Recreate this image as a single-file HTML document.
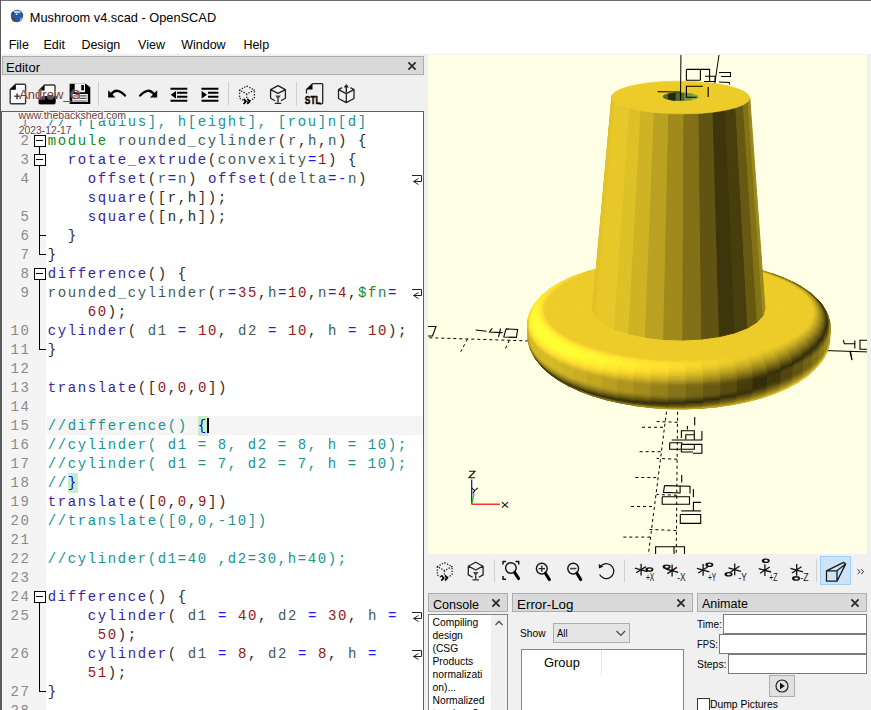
<!DOCTYPE html>
<html><head><meta charset="utf-8">
<style>
*{margin:0;padding:0;box-sizing:border-box}
html,body{width:871px;height:710px;overflow:hidden;background:#f0f0f0;font-family:"Liberation Sans",sans-serif;font-size:12.5px;color:#000}
.a{position:absolute}
.t1{position:absolute;line-height:1;white-space:nowrap}
.dtitle{position:absolute;background:#d9d9d9;border:1px solid #adadad}
.code{font-family:"Liberation Mono",monospace;font-size:14px;letter-spacing:1.6px;white-space:pre;line-height:19px;color:#2a2a2a}
.ln{font-family:"Liberation Mono",monospace;font-size:14px;letter-spacing:1.6px;color:#8a8a8a;white-space:pre;line-height:19px;text-align:right}
b{font-weight:normal}
.k{color:#148c14}.t{color:#3526a0}.i{color:#3f5b5b}.n{color:#961414}.o{color:#1a1aff}.c{color:#169494}.s{color:#148c14}.m{color:#0000ff;background:#c6efc6;padding:1.6px 0}
</style></head><body>

  <div class="a" style="left:0;top:0;width:871px;height:54px;background:#fff"></div>
  <div class="a" style="left:0;top:0;width:871px;height:1px;background:#6f6f6f"></div>
  <div class="a" style="left:0;top:0;width:1px;height:710px;background:#5a5a5a"></div>
<svg class="a" style="left:10px;top:9px" width="14" height="14" viewBox="0 0 14 14">
<circle cx="7" cy="7" r="6.2" fill="#2d5a9e"/>
<path d="M1.2 8.5Q2 12.5 5 13L5.5 9Q3.5 7.5 1.2 8.5Z" fill="#4a4a3c"/>
<path d="M3 2.5Q7 1 11 2.6L9.5 4.2Q7 3.4 4.8 4.3Z" fill="#c9d2e6"/>
<path d="M10.5 8.5Q12.5 9 12.8 7.5Q12.5 11.5 9.5 12.5Z" fill="#8aa0c8"/>
<circle cx="6.6" cy="5.2" r="0.9" fill="#dfe6f3"/>
<path d="M1.5 4.5Q2.5 3 3.5 2.6L4.2 4.3Q2.5 5 1.5 4.5Z" fill="#1b2f55"/>
</svg>
<div class="t1" style="left:29.8px;top:12.16px;font-size:12.8px;">Mushroom v4.scad - OpenSCAD</div><div class="t1" style="left:8.7px;top:38.72px;font-size:12.5px;">File</div><div class="t1" style="left:43.5px;top:38.72px;font-size:12.5px;">Edit</div><div class="t1" style="left:81.4px;top:38.72px;font-size:12.5px;">Design</div><div class="t1" style="left:138.1px;top:38.72px;font-size:12.5px;">View</div><div class="t1" style="left:181.2px;top:38.72px;font-size:12.5px;">Window</div><div class="t1" style="left:243.4px;top:38.72px;font-size:12.5px;">Help</div>
<div class="dtitle" style="left:2px;top:56px;width:422px;height:19px"></div>
<div class="t1" style="left:6px;top:60.70px;font-size:13px;">Editor</div>
<svg class="a" style="left:406px;top:60px" width="12" height="12"><path d="M2.4 2.4L9.6 9.6M9.6 2.4L2.4 9.6" stroke="#2b2b2b" stroke-width="1.8"/></svg>

<svg class="a" style="left:0;top:74px" width="430" height="37" viewBox="0 74 430 37">
<g fill="none" stroke-linejoin="round">
<!-- new -->
<path d="M15.6 84.2H24.6Q25.6 84.2 25.6 85.2V102.8Q25.6 103.8 24.6 103.8H11.2Q10.2 103.8 10.2 102.8V89.6Z" fill="#fafafa" stroke="#383838" stroke-width="1.4"/>
<path d="M10.2 89.8L15.8 84.2V89.8Z" fill="#000"/>
<path d="M14.3 96.3H20M17.1 93.4V99.3" stroke="#444" stroke-width="1.6"/>
<!-- open -->
<path d="M44.6 85H54Q55 85 55 86V102.8Q55 103.8 54 103.8H40.1Q39.1 103.8 39.1 102.8V90.5Z" fill="#fafafa" stroke="#383838" stroke-width="1.4"/>
<path d="M39.1 90.5L44.6 85V90.5Z" fill="#000"/>
<path d="M42.5 96H57L54.6 104H39.2V99.5Z" fill="#000"/>
<!-- save -->
<path d="M69.6 83.7H85.7L90.3 87.3V103.9H69.6Z" fill="#000"/>
<rect x="74.7" y="83.7" width="10.3" height="8.5" fill="#f4f4f4"/>
<rect x="81.3" y="85" width="2.6" height="5.3" fill="#000"/>
<rect x="72.4" y="94" width="15.4" height="8" fill="#f4f4f4"/>
<path d="M73.6 95.9H86.6M73.6 98.4H86.6M73.6 101H86.6" stroke="#555" stroke-width="1.1"/>
<!-- separators -->
<path d="M98.5 82V105.5M228.5 82V105.5M296.5 82V105.5" stroke="#cfcfcf" stroke-width="1"/>
<!-- undo -->
<path d="M111 94.3Q117 86.6 125 95.6" stroke="#000" stroke-width="2.3" stroke-linecap="round"/>
<path d="M108.2 90.3V97.6H115.4Z" fill="#000"/>
<!-- redo -->
<path d="M154.2 94.3Q148.2 86.6 140.2 95.6" stroke="#000" stroke-width="2.3" stroke-linecap="round"/>
<path d="M157.2 90.3V97.6H150Z" fill="#000"/>
<!-- unindent -->
<path d="M170.5 88.7H187.3M177 92.8H187.3M177 96.8H187.3M170.5 100.7H187.3" stroke="#000" stroke-width="1.9"/>
<path d="M176 91V98.6L170.6 94.8Z" fill="#000"/>
<!-- indent -->
<path d="M201.5 88.7H218.4M208 92.8H218.4M208 96.8H218.4M201.5 100.7H218.4" stroke="#000" stroke-width="1.9"/>
<path d="M201.6 91V98.6L207 94.8Z" fill="#000"/>
<!-- preview dotted cube -->
<path d="M246.8 86L254.4 90L246.8 94L239.6 90Z M239.6 90V98.3L246.8 102.3L254.4 98.3V90 M246.8 94V99" stroke="#222" stroke-width="1.3" stroke-dasharray="1.3 1.5"/>
<path d="M243.6 98.8L246 101.4L243.6 104M247.3 98.8L249.7 101.4L247.3 104" stroke="#000" stroke-width="1.7"/>
<!-- render cube -->
<path d="M278 85.6L285.4 89.6L278 93.4L270.6 89.6Z M270.6 89.6V98.3L275 100.7M285.4 89.6V98.3L281 100.7" stroke="#222" stroke-width="1.3"/>
<path d="M275.3 95.5H280.8L278 99.5Z" fill="#444"/>
<path d="M278 99V102.5M274.8 103.3H281.2" stroke="#222" stroke-width="1.3"/>
<!-- STL -->
<path d="M312.5 83.6H321.7Q322.7 83.6 322.7 84.6V102.8Q322.7 103.8 321.7 103.8H319.5M306.5 93.4V89.4L312.5 83.6" stroke="#222" stroke-width="1.3"/>
<path d="M306.5 89.6L312.5 83.7V89.6Z" fill="#000"/>
<!-- send -->
<path d="M342 87.6L338.5 89.6L346.3 93.6L354 89.6L350.5 87.6 M338.5 89.6V98.5L346.3 102.6L354 98.5V89.6 M346.3 93.6V102.6" stroke="#222" stroke-width="1.3"/>
<path d="M346.3 92.5V86.5" stroke="#222" stroke-width="1.4"/>
<path d="M343.6 87.6L346.3 84L349 87.6Z" fill="#222"/>
</g>
<text x="304.8" y="104.2" font-family="Liberation Sans" font-weight="700" font-size="11" fill="#000" stroke="#000" stroke-width="0.45" textLength="16" lengthAdjust="spacingAndGlyphs">STL</text>
</svg>


  <div class="a" style="left:1px;top:111px;width:423px;height:599px;border:1px solid #0078d7;border-bottom:none;background:#fff"></div>
  <div class="a" style="left:2px;top:112px;width:44px;height:598px;background:#f4f4f4"></div>
  <div class="a" style="left:47px;top:416px;width:376px;height:19px;background:#f5f5f5"></div>
  <div class="a ln" style="left:2px;top:113px;width:28.6px">1
2
3
4

5
6
7
8
9

10
11
12
13
14
15
16
17
18
19
20
21
22
23
24
25

26

27
28</div>
  <div class="a code" style="left:47.8px;top:113px"><b class="c">// r[adius], h[eight], [rou]n[d]</b>
<b class="k">module</b> <b class="i">rounded_cylinder</b>(<b class="i">r</b>,<b class="i">h</b>,<b class="i">n</b>) {
  <b class="t">rotate_extrude</b>(<b class="i">convexity</b><b class="o">=</b><b class="n">1</b>) {
    <b class="t">offset</b>(<b class="i">r</b><b class="o">=</b><b class="i">n</b>) <b class="t">offset</b>(<b class="i">delta</b><b class="o">=-</b><b class="i">n</b>)
    <b class="t">square</b>([r,h]);
    <b class="t">square</b>([n,h]);
  }
}
<b class="t">difference</b>() {
<b class="i">rounded_cylinder</b>(<b class="i">r</b><b class="o">=</b><b class="n">35</b>,<b class="i">h</b><b class="o">=</b><b class="n">10</b>,<b class="i">n</b><b class="o">=</b><b class="n">4</b>,<b class="s">$fn</b><b class="o">=</b>
    <b class="n">60</b>);
<b class="t">cylinder</b>( <b class="i">d1</b> <b class="o">=</b> <b class="n">10</b>, <b class="i">d2</b> <b class="o">=</b> <b class="n">10</b>, <b class="i">h</b> <b class="o">=</b> <b class="n">10</b>);
}

<b class="t">translate</b>([<b class="n">0</b>,<b class="n">0</b>,<b class="n">0</b>])

<b class="c">//difference() </b><b class="m">{</b>
<b class="c">//cylinder( d1 = 8, d2 = 8, h = 10);</b>
<b class="c">//cylinder( d1 = 7, d2 = 7, h = 10);</b>
<b class="c">//</b><b class="m">}</b>
<b class="t">translate</b>([<b class="n">0</b>,<b class="n">0</b>,<b class="n">9</b>])
<b class="c">//translate([0,0,-10])</b>

<b class="c">//cylinder(d1=40 ,d2=30,h=40);</b>

<b class="t">difference</b>() {
    <b class="t">cylinder</b>( <b class="i">d1</b> <b class="o">=</b> <b class="n">40</b>, <b class="i">d2</b> <b class="o">=</b> <b class="n">30</b>, <b class="i">h</b> <b class="o">=</b>
     <b class="n">50</b>);
    <b class="t">cylinder</b>( <b class="i">d1</b> <b class="o">=</b> <b class="n">8</b>, <b class="i">d2</b> <b class="o">=</b> <b class="n">8</b>, <b class="i">h</b> <b class="o">=</b>
    <b class="n">51</b>);
}
</div>
  <div class="a" style="left:207px;top:418px;width:2px;height:15px;background:#000"></div>
  <svg class="a" style="left:0;top:0" width="430" height="710"><rect x="39" y="147" width="1" height="108" fill="#000"/><rect x="40" y="235" width="6" height="1" fill="#000"/><rect x="40" y="254" width="6" height="1" fill="#000"/><rect x="34.5" y="135.5" width="11" height="11" fill="#fff" stroke="#000"/><rect x="36" y="140" width="7" height="1" fill="#000"/><rect x="34.5" y="154.5" width="11" height="11" fill="#fff" stroke="#000"/><rect x="36" y="159" width="7" height="1" fill="#000"/><rect x="39" y="280" width="1" height="70" fill="#000"/><rect x="40" y="349" width="6" height="1" fill="#000"/><rect x="34.5" y="268.5" width="11" height="11" fill="#fff" stroke="#000"/><rect x="36" y="273" width="7" height="1" fill="#000"/><rect x="39" y="603" width="1" height="89" fill="#000"/><rect x="40" y="691" width="6" height="1" fill="#000"/><rect x="34.5" y="591.5" width="11" height="11" fill="#fff" stroke="#000"/><rect x="36" y="596" width="7" height="1" fill="#000"/><path d="M412 175.5H421.5V181.5H413.5M413.5 181.5L418.5 178.5M413.5 181.5L418.5 184.5" fill="none" stroke="#222" stroke-width="1"/><path d="M412 289.5H421.5V295.5H413.5M413.5 295.5L418.5 292.5M413.5 295.5L418.5 298.5" fill="none" stroke="#222" stroke-width="1"/><path d="M412 612.5H421.5V618.5H413.5M413.5 618.5L418.5 615.5M413.5 618.5L418.5 621.5" fill="none" stroke="#222" stroke-width="1"/><path d="M412 650.5H421.5V656.5H413.5M413.5 656.5L418.5 653.5M413.5 656.5L418.5 659.5" fill="none" stroke="#222" stroke-width="1"/></svg>


  <div class="a" style="left:428px;top:55px;width:439px;height:499px;background:#ffffe5;overflow:hidden">
  <svg width="439" height="499" style="position:absolute;left:0;top:0">
<line x1="250.2" y1="290.8" x2="1632.4" y2="335.5" stroke="#000" stroke-width="1"/>
<line x1="250.2" y1="290.8" x2="-941.1" y2="252.2" stroke="#000" stroke-width="1" stroke-dasharray="3 3"/>
<g transform="translate(-2.5 0)"><line x1="250.2" y1="290.8" x2="312.8" y2="-129.6" stroke="#000" stroke-width="1"/></g>
<line x1="241.5" y1="333.0" x2="219.3" y2="508.0" stroke="#000" stroke-width="1" stroke-dasharray="3 3"/>
<line x1="214.0" y1="372.3" x2="237.2" y2="372.3" stroke="#000" stroke-width="1" stroke-dasharray="3 3"/>
<line x1="211.6" y1="396.7" x2="234.1" y2="396.7" stroke="#000" stroke-width="1" stroke-dasharray="3 3"/>
<line x1="207.3" y1="422.5" x2="230.8" y2="422.5" stroke="#000" stroke-width="1" stroke-dasharray="3 3"/>
<line x1="203.0" y1="451.5" x2="227.2" y2="451.5" stroke="#000" stroke-width="1" stroke-dasharray="3 3"/>
<line x1="195.3" y1="482.1" x2="223.3" y2="482.1" stroke="#000" stroke-width="1" stroke-dasharray="3 3"/>
<line x1="250.2" y1="290.8" x2="247.2" y2="608.8" stroke="#000" stroke-width="1" stroke-dasharray="3 3"/>
<line x1="293.0" y1="292.2" x2="292.3" y2="300.8" stroke="#000" stroke-width="1"/>
<line x1="335.9" y1="293.6" x2="336.0" y2="302.3" stroke="#000" stroke-width="1"/>
<line x1="379.1" y1="295.0" x2="379.8" y2="303.7" stroke="#000" stroke-width="1"/>
<line x1="422.5" y1="296.4" x2="423.9" y2="305.2" stroke="#000" stroke-width="1"/>
<line x1="466.1" y1="297.8" x2="469.3" y2="311.1" stroke="#000" stroke-width="1"/>
<line x1="510.0" y1="299.2" x2="512.8" y2="308.1" stroke="#000" stroke-width="1"/>
<line x1="554.0" y1="300.6" x2="557.5" y2="309.5" stroke="#000" stroke-width="1"/>
<line x1="598.3" y1="302.0" x2="602.5" y2="311.0" stroke="#000" stroke-width="1"/>
<line x1="642.8" y1="303.5" x2="647.7" y2="312.5" stroke="#000" stroke-width="1"/>
<line x1="687.6" y1="304.9" x2="699.0" y2="323.4" stroke="#000" stroke-width="1"/>
<line x1="732.5" y1="306.4" x2="738.9" y2="315.5" stroke="#000" stroke-width="1"/>
<line x1="777.7" y1="307.9" x2="784.8" y2="317.0" stroke="#000" stroke-width="1"/>
<line x1="207.7" y1="289.4" x2="205.7" y2="298.0" stroke="#000" stroke-width="1" stroke-dasharray="3 3"/>
<line x1="165.3" y1="288.0" x2="162.7" y2="296.6" stroke="#000" stroke-width="1" stroke-dasharray="3 3"/>
<line x1="123.2" y1="286.7" x2="120.0" y2="295.2" stroke="#000" stroke-width="1" stroke-dasharray="3 3"/>
<line x1="81.3" y1="285.3" x2="77.4" y2="293.8" stroke="#000" stroke-width="1" stroke-dasharray="3 3"/>
<line x1="39.5" y1="284.0" x2="32.8" y2="296.7" stroke="#000" stroke-width="1" stroke-dasharray="3 3"/>
<line x1="-2.0" y1="282.6" x2="-7.1" y2="291.0" stroke="#000" stroke-width="1" stroke-dasharray="3 3"/>
<line x1="-43.3" y1="281.3" x2="-49.0" y2="289.6" stroke="#000" stroke-width="1" stroke-dasharray="3 3"/>
<line x1="-84.4" y1="279.9" x2="-90.7" y2="288.2" stroke="#000" stroke-width="1" stroke-dasharray="3 3"/>
<line x1="-125.3" y1="278.6" x2="-132.3" y2="286.9" stroke="#000" stroke-width="1" stroke-dasharray="3 3"/>
<line x1="-166.0" y1="277.3" x2="-181.3" y2="294.0" stroke="#000" stroke-width="1" stroke-dasharray="3 3"/>
<line x1="-206.6" y1="276.0" x2="-214.7" y2="284.2" stroke="#000" stroke-width="1" stroke-dasharray="3 3"/>
<line x1="-246.9" y1="274.7" x2="-255.6" y2="282.8" stroke="#000" stroke-width="1" stroke-dasharray="3 3"/>
<g transform="translate(-2.5 0)"><line x1="252.7" y1="274.3" x2="232.0" y2="273.6" stroke="#000" stroke-width="1"/></g>
<g transform="translate(-2.5 0)"><line x1="255.0" y1="258.8" x2="234.9" y2="258.1" stroke="#000" stroke-width="1"/></g>
<g transform="translate(-2.5 0)"><line x1="257.2" y1="244.1" x2="237.6" y2="243.5" stroke="#000" stroke-width="1"/></g>
<g transform="translate(-2.5 0)"><line x1="259.2" y1="230.2" x2="240.2" y2="229.6" stroke="#000" stroke-width="1"/></g>
<g transform="translate(-2.5 0)"><line x1="261.2" y1="217.1" x2="233.4" y2="216.3" stroke="#000" stroke-width="1"/></g>
<g transform="translate(-2.5 0)"><line x1="263.0" y1="204.6" x2="245.0" y2="204.1" stroke="#000" stroke-width="1"/></g>
<g transform="translate(-2.5 0)"><line x1="264.8" y1="192.7" x2="247.2" y2="192.3" stroke="#000" stroke-width="1"/></g>
<g transform="translate(-2.5 0)"><line x1="266.5" y1="181.5" x2="249.3" y2="181.0" stroke="#000" stroke-width="1"/></g>
<g transform="translate(-2.5 0)"><line x1="268.1" y1="170.7" x2="251.3" y2="170.3" stroke="#000" stroke-width="1"/></g>
<g transform="translate(-2.5 0)"><line x1="269.6" y1="160.5" x2="236.9" y2="159.7" stroke="#000" stroke-width="1"/></g>
<g transform="translate(-2.5 0)"><line x1="271.1" y1="150.8" x2="255.1" y2="150.4" stroke="#000" stroke-width="1"/></g>
<g transform="translate(-2.5 0)"><line x1="272.4" y1="141.4" x2="256.8" y2="141.1" stroke="#000" stroke-width="1"/></g>
<g transform="translate(-2.5 0)"><line x1="273.8" y1="132.5" x2="258.5" y2="132.2" stroke="#000" stroke-width="1"/></g>
<g transform="translate(-2.5 0)"><line x1="275.0" y1="124.0" x2="260.1" y2="123.6" stroke="#000" stroke-width="1"/></g>
<g transform="translate(-2.5 0)"><line x1="276.3" y1="115.8" x2="254.3" y2="115.3" stroke="#000" stroke-width="1"/></g>
<g transform="translate(-2.5 0)"><line x1="277.4" y1="107.9" x2="263.1" y2="107.6" stroke="#000" stroke-width="1"/></g>
<g transform="translate(-2.5 0)"><line x1="278.5" y1="100.4" x2="264.5" y2="100.1" stroke="#000" stroke-width="1"/></g>
<g transform="translate(-2.5 0)"><line x1="279.6" y1="93.2" x2="265.8" y2="92.9" stroke="#000" stroke-width="1"/></g>
<g transform="translate(-2.5 0)"><line x1="280.7" y1="86.2" x2="267.1" y2="85.9" stroke="#000" stroke-width="1"/></g>
<g transform="translate(-2.5 0)"><line x1="281.7" y1="79.5" x2="255.1" y2="79.0" stroke="#000" stroke-width="1"/></g>
<g transform="translate(-2.5 0)"><line x1="282.6" y1="73.1" x2="269.6" y2="72.8" stroke="#000" stroke-width="1"/></g>
<g transform="translate(-2.5 0)"><line x1="283.5" y1="66.9" x2="270.7" y2="66.6" stroke="#000" stroke-width="1"/></g>
<g transform="translate(-2.5 0)"><line x1="284.4" y1="60.9" x2="271.9" y2="60.6" stroke="#000" stroke-width="1"/></g>
<g transform="translate(-2.5 0)"><line x1="285.3" y1="55.1" x2="272.9" y2="54.9" stroke="#000" stroke-width="1"/></g>
<g transform="translate(-2.5 0)"><line x1="286.1" y1="49.5" x2="267.9" y2="49.2" stroke="#000" stroke-width="1"/></g>
<g transform="translate(-2.5 0)"><line x1="286.9" y1="44.1" x2="275.0" y2="43.9" stroke="#000" stroke-width="1"/></g>
<g transform="translate(-2.5 0)"><line x1="287.7" y1="38.9" x2="276.0" y2="38.7" stroke="#000" stroke-width="1"/></g>
<g transform="translate(-2.5 0)"><line x1="288.5" y1="33.9" x2="276.9" y2="33.7" stroke="#000" stroke-width="1"/></g>
<g transform="translate(-2.5 0)"><line x1="289.2" y1="29.0" x2="277.8" y2="28.8" stroke="#000" stroke-width="1"/></g>
<line x1="250.6" y1="251.1" x2="229.0" y2="250.4" stroke="#000" stroke-width="1"/>
<line x1="251.0" y1="210.4" x2="229.1" y2="209.8" stroke="#000" stroke-width="1"/>
<line x1="251.4" y1="168.7" x2="229.3" y2="168.2" stroke="#000" stroke-width="1"/>
<line x1="251.8" y1="126.0" x2="229.4" y2="125.5" stroke="#000" stroke-width="1"/>
<line x1="252.2" y1="82.1" x2="218.2" y2="81.5" stroke="#000" stroke-width="1"/>
<line x1="249.8" y1="329.5" x2="228.8" y2="328.8" stroke="#000" stroke-width="1" stroke-dasharray="3 3"/>
<line x1="249.5" y1="367.3" x2="228.7" y2="366.5" stroke="#000" stroke-width="1" stroke-dasharray="3 3"/>
<line x1="249.1" y1="404.2" x2="228.6" y2="403.4" stroke="#000" stroke-width="1" stroke-dasharray="3 3"/>
<line x1="248.8" y1="440.3" x2="228.5" y2="439.5" stroke="#000" stroke-width="1" stroke-dasharray="3 3"/>
<line x1="248.4" y1="475.5" x2="218.3" y2="474.3" stroke="#000" stroke-width="1" stroke-dasharray="3 3"/>
<line x1="248.1" y1="510.0" x2="228.3" y2="509.1" stroke="#000" stroke-width="1" stroke-dasharray="3 3"/>
<line x1="247.8" y1="543.7" x2="228.2" y2="542.8" stroke="#000" stroke-width="1" stroke-dasharray="3 3"/>
<line x1="247.5" y1="576.6" x2="228.1" y2="575.7" stroke="#000" stroke-width="1" stroke-dasharray="3 3"/>
<path d="M250.58,251.10 L250.58,251.10 L384.23,249.93 L385.48,255.16Z" fill="#edcc2a" stroke="#edcc2a" stroke-width="1" stroke-linejoin="round"/>
<path d="M250.58,251.10 L250.58,251.10 L381.55,244.82 L384.23,249.93Z" fill="#edcc2a" stroke="#edcc2a" stroke-width="1" stroke-linejoin="round"/>
<path d="M250.58,251.10 L250.58,251.10 L377.52,239.87 L381.55,244.82Z" fill="#edcc2a" stroke="#edcc2a" stroke-width="1" stroke-linejoin="round"/>
<path d="M250.58,251.10 L250.58,251.10 L372.22,235.14 L377.52,239.87Z" fill="#edcc2a" stroke="#edcc2a" stroke-width="1" stroke-linejoin="round"/>
<path d="M250.58,251.10 L250.58,251.10 L365.73,230.66 L372.22,235.14Z" fill="#edcc2a" stroke="#edcc2a" stroke-width="1" stroke-linejoin="round"/>
<path d="M250.58,251.10 L250.58,251.10 L358.16,226.48 L365.73,230.66Z" fill="#edcc2a" stroke="#edcc2a" stroke-width="1" stroke-linejoin="round"/>
<path d="M250.58,251.10 L250.58,251.10 L349.59,222.61 L358.16,226.48Z" fill="#edcc2a" stroke="#edcc2a" stroke-width="1" stroke-linejoin="round"/>
<path d="M250.58,251.10 L250.58,251.10 L340.13,219.10 L349.59,222.61Z" fill="#edcc2a" stroke="#edcc2a" stroke-width="1" stroke-linejoin="round"/>
<path d="M250.58,251.10 L250.58,251.10 L329.89,215.96 L340.13,219.10Z" fill="#edcc2a" stroke="#edcc2a" stroke-width="1" stroke-linejoin="round"/>
<path d="M250.58,251.10 L250.58,251.10 L318.96,213.21 L329.89,215.96Z" fill="#edcc2a" stroke="#edcc2a" stroke-width="1" stroke-linejoin="round"/>
<path d="M250.58,251.10 L250.58,251.10 L307.46,210.88 L318.96,213.21Z" fill="#edcc2a" stroke="#edcc2a" stroke-width="1" stroke-linejoin="round"/>
<path d="M250.58,251.10 L250.58,251.10 L295.49,208.97 L307.46,210.88Z" fill="#edcc2a" stroke="#edcc2a" stroke-width="1" stroke-linejoin="round"/>
<path d="M250.58,251.10 L250.58,251.10 L283.15,207.50 L295.49,208.97Z" fill="#edcc2a" stroke="#edcc2a" stroke-width="1" stroke-linejoin="round"/>
<path d="M250.58,251.10 L250.58,251.10 L270.55,206.47 L283.15,207.50Z" fill="#edcc2a" stroke="#edcc2a" stroke-width="1" stroke-linejoin="round"/>
<path d="M250.58,251.10 L250.58,251.10 L257.79,205.89 L270.55,206.47Z" fill="#edcc2a" stroke="#edcc2a" stroke-width="1" stroke-linejoin="round"/>
<path d="M250.58,251.10 L250.58,251.10 L244.98,205.77 L257.79,205.89Z" fill="#edcc2a" stroke="#edcc2a" stroke-width="1" stroke-linejoin="round"/>
<path d="M250.58,251.10 L250.58,251.10 L232.22,206.10 L244.98,205.77Z" fill="#edcc2a" stroke="#edcc2a" stroke-width="1" stroke-linejoin="round"/>
<path d="M250.58,251.10 L250.58,251.10 L219.61,206.88 L232.22,206.10Z" fill="#edcc2a" stroke="#edcc2a" stroke-width="1" stroke-linejoin="round"/>
<path d="M250.58,251.10 L250.58,251.10 L207.27,208.11 L219.61,206.88Z" fill="#edcc2a" stroke="#edcc2a" stroke-width="1" stroke-linejoin="round"/>
<path d="M250.58,251.10 L250.58,251.10 L195.28,209.78 L207.27,208.11Z" fill="#edcc2a" stroke="#edcc2a" stroke-width="1" stroke-linejoin="round"/>
<path d="M250.58,251.10 L250.58,251.10 L183.76,211.88 L195.28,209.78Z" fill="#edcc2a" stroke="#edcc2a" stroke-width="1" stroke-linejoin="round"/>
<path d="M250.58,251.10 L250.58,251.10 L172.80,214.40 L183.76,211.88Z" fill="#edcc2a" stroke="#edcc2a" stroke-width="1" stroke-linejoin="round"/>
<path d="M250.58,251.10 L250.58,251.10 L162.52,217.32 L172.80,214.40Z" fill="#edcc2a" stroke="#edcc2a" stroke-width="1" stroke-linejoin="round"/>
<path d="M250.58,251.10 L250.58,251.10 L153.02,220.63 L162.52,217.32Z" fill="#edcc2a" stroke="#edcc2a" stroke-width="1" stroke-linejoin="round"/>
<path d="M250.58,251.10 L250.58,251.10 L144.39,224.31 L153.02,220.63Z" fill="#edcc2a" stroke="#edcc2a" stroke-width="1" stroke-linejoin="round"/>
<path d="M250.58,251.10 L250.58,251.10 L136.74,228.32 L144.39,224.31Z" fill="#edcc2a" stroke="#edcc2a" stroke-width="1" stroke-linejoin="round"/>
<path d="M250.58,251.10 L250.58,251.10 L130.16,232.65 L136.74,228.32Z" fill="#edcc2a" stroke="#edcc2a" stroke-width="1" stroke-linejoin="round"/>
<path d="M250.58,251.10 L250.58,251.10 L124.74,237.24 L130.16,232.65Z" fill="#edcc2a" stroke="#edcc2a" stroke-width="1" stroke-linejoin="round"/>
<path d="M250.58,251.10 L250.58,251.10 L120.58,242.08 L124.74,237.24Z" fill="#edcc2a" stroke="#edcc2a" stroke-width="1" stroke-linejoin="round"/>
<path d="M250.58,251.10 L250.58,251.10 L117.76,247.10 L120.58,242.08Z" fill="#edcc2a" stroke="#edcc2a" stroke-width="1" stroke-linejoin="round"/>
<path d="M250.58,251.10 L250.58,251.10 L116.33,252.27 L117.76,247.10Z" fill="#edcc2a" stroke="#edcc2a" stroke-width="1" stroke-linejoin="round"/>
<path d="M250.58,251.10 L250.58,251.10 L116.36,257.53 L116.33,252.27Z" fill="#edcc2a" stroke="#edcc2a" stroke-width="1" stroke-linejoin="round"/>
<path d="M250.58,251.10 L250.58,251.10 L117.90,262.83 L116.36,257.53Z" fill="#edcc2a" stroke="#edcc2a" stroke-width="1" stroke-linejoin="round"/>
<path d="M250.58,251.10 L250.58,251.10 L120.97,268.10 L117.90,262.83Z" fill="#edcc2a" stroke="#edcc2a" stroke-width="1" stroke-linejoin="round"/>
<path d="M250.58,251.10 L250.58,251.10 L125.59,273.28 L120.97,268.10Z" fill="#edcc2a" stroke="#edcc2a" stroke-width="1" stroke-linejoin="round"/>
<path d="M250.58,251.10 L250.58,251.10 L131.73,278.30 L125.59,273.28Z" fill="#edcc2a" stroke="#edcc2a" stroke-width="1" stroke-linejoin="round"/>
<path d="M250.58,251.10 L250.58,251.10 L139.36,283.10 L131.73,278.30Z" fill="#edcc2a" stroke="#edcc2a" stroke-width="1" stroke-linejoin="round"/>
<path d="M250.58,251.10 L250.58,251.10 L148.43,287.60 L139.36,283.10Z" fill="#edcc2a" stroke="#edcc2a" stroke-width="1" stroke-linejoin="round"/>
<path d="M250.58,251.10 L250.58,251.10 L158.85,291.74 L148.43,287.60Z" fill="#edcc2a" stroke="#edcc2a" stroke-width="1" stroke-linejoin="round"/>
<path d="M250.58,251.10 L250.58,251.10 L170.50,295.46 L158.85,291.74Z" fill="#edcc2a" stroke="#edcc2a" stroke-width="1" stroke-linejoin="round"/>
<path d="M250.58,251.10 L250.58,251.10 L183.26,298.70 L170.50,295.46Z" fill="#edcc2a" stroke="#edcc2a" stroke-width="1" stroke-linejoin="round"/>
<path d="M250.58,251.10 L250.58,251.10 L196.97,301.39 L183.26,298.70Z" fill="#edcc2a" stroke="#edcc2a" stroke-width="1" stroke-linejoin="round"/>
<path d="M250.58,251.10 L250.58,251.10 L211.43,303.50 L196.97,301.39Z" fill="#edcc2a" stroke="#edcc2a" stroke-width="1" stroke-linejoin="round"/>
<path d="M250.58,251.10 L250.58,251.10 L226.46,305.00 L211.43,303.50Z" fill="#edcc2a" stroke="#edcc2a" stroke-width="1" stroke-linejoin="round"/>
<path d="M250.58,251.10 L250.58,251.10 L241.85,305.84 L226.46,305.00Z" fill="#edcc2a" stroke="#edcc2a" stroke-width="1" stroke-linejoin="round"/>
<path d="M250.58,251.10 L250.58,251.10 L257.36,306.02 L241.85,305.84Z" fill="#edcc2a" stroke="#edcc2a" stroke-width="1" stroke-linejoin="round"/>
<path d="M250.58,251.10 L250.58,251.10 L272.79,305.54 L257.36,306.02Z" fill="#edcc2a" stroke="#edcc2a" stroke-width="1" stroke-linejoin="round"/>
<path d="M250.58,251.10 L250.58,251.10 L287.91,304.40 L272.79,305.54Z" fill="#edcc2a" stroke="#edcc2a" stroke-width="1" stroke-linejoin="round"/>
<path d="M250.58,251.10 L250.58,251.10 L302.50,302.63 L287.91,304.40Z" fill="#edcc2a" stroke="#edcc2a" stroke-width="1" stroke-linejoin="round"/>
<path d="M250.58,251.10 L250.58,251.10 L316.36,300.25 L302.50,302.63Z" fill="#edcc2a" stroke="#edcc2a" stroke-width="1" stroke-linejoin="round"/>
<path d="M250.58,251.10 L250.58,251.10 L329.30,297.30 L316.36,300.25Z" fill="#edcc2a" stroke="#edcc2a" stroke-width="1" stroke-linejoin="round"/>
<path d="M250.58,251.10 L250.58,251.10 L341.17,293.85 L329.30,297.30Z" fill="#edcc2a" stroke="#edcc2a" stroke-width="1" stroke-linejoin="round"/>
<path d="M250.58,251.10 L250.58,251.10 L351.81,289.93 L341.17,293.85Z" fill="#edcc2a" stroke="#edcc2a" stroke-width="1" stroke-linejoin="round"/>
<path d="M250.58,251.10 L250.58,251.10 L361.12,285.61 L351.81,289.93Z" fill="#edcc2a" stroke="#edcc2a" stroke-width="1" stroke-linejoin="round"/>
<path d="M250.58,251.10 L250.58,251.10 L369.00,280.97 L361.12,285.61Z" fill="#edcc2a" stroke="#edcc2a" stroke-width="1" stroke-linejoin="round"/>
<path d="M250.58,251.10 L250.58,251.10 L375.38,276.06 L369.00,280.97Z" fill="#edcc2a" stroke="#edcc2a" stroke-width="1" stroke-linejoin="round"/>
<path d="M250.58,251.10 L250.58,251.10 L380.22,270.96 L375.38,276.06Z" fill="#edcc2a" stroke="#edcc2a" stroke-width="1" stroke-linejoin="round"/>
<path d="M250.58,251.10 L250.58,251.10 L383.51,265.73 L380.22,270.96Z" fill="#edcc2a" stroke="#edcc2a" stroke-width="1" stroke-linejoin="round"/>
<path d="M250.58,251.10 L250.58,251.10 L385.26,260.44 L383.51,265.73Z" fill="#edcc2a" stroke="#edcc2a" stroke-width="1" stroke-linejoin="round"/>
<path d="M250.58,251.10 L250.58,251.10 L385.48,255.16 L385.26,260.44Z" fill="#edcc2a" stroke="#edcc2a" stroke-width="1" stroke-linejoin="round"/>
<path d="M385.48,255.16 L384.23,249.93 L386.02,250.00 L387.31,255.30Z" fill="#e5c628" stroke="#e5c628" stroke-width="1" stroke-linejoin="round"/>
<path d="M384.23,249.93 L381.55,244.82 L383.29,244.82 L386.02,250.00Z" fill="#e4c528" stroke="#e4c528" stroke-width="1" stroke-linejoin="round"/>
<path d="M381.55,244.82 L377.52,239.87 L379.19,239.81 L383.29,244.82Z" fill="#e4c528" stroke="#e4c528" stroke-width="1" stroke-linejoin="round"/>
<path d="M377.52,239.87 L372.22,235.14 L373.80,235.02 L379.19,239.81Z" fill="#e4c528" stroke="#e4c528" stroke-width="1" stroke-linejoin="round"/>
<path d="M372.22,235.14 L365.73,230.66 L367.22,230.48 L373.80,235.02Z" fill="#e4c528" stroke="#e4c528" stroke-width="1" stroke-linejoin="round"/>
<path d="M365.73,230.66 L358.16,226.48 L359.53,226.24 L367.22,230.48Z" fill="#e4c528" stroke="#e4c528" stroke-width="1" stroke-linejoin="round"/>
<path d="M358.16,226.48 L349.59,222.61 L350.85,222.33 L359.53,226.24Z" fill="#e4c528" stroke="#e4c528" stroke-width="1" stroke-linejoin="round"/>
<path d="M349.59,222.61 L340.13,219.10 L341.26,218.78 L350.85,222.33Z" fill="#e4c528" stroke="#e4c528" stroke-width="1" stroke-linejoin="round"/>
<path d="M340.13,219.10 L329.89,215.96 L330.88,215.60 L341.26,218.78Z" fill="#e4c528" stroke="#e4c528" stroke-width="1" stroke-linejoin="round"/>
<path d="M329.89,215.96 L318.96,213.21 L319.82,212.82 L330.88,215.60Z" fill="#e4c528" stroke="#e4c528" stroke-width="1" stroke-linejoin="round"/>
<path d="M318.96,213.21 L307.46,210.88 L308.17,210.46 L319.82,212.82Z" fill="#e5c528" stroke="#e5c528" stroke-width="1" stroke-linejoin="round"/>
<path d="M307.46,210.88 L295.49,208.97 L296.04,208.53 L308.17,210.46Z" fill="#e5c628" stroke="#e5c628" stroke-width="1" stroke-linejoin="round"/>
<path d="M295.49,208.97 L283.15,207.50 L283.55,207.04 L296.04,208.53Z" fill="#e6c629" stroke="#e6c629" stroke-width="1" stroke-linejoin="round"/>
<path d="M283.15,207.50 L270.55,206.47 L270.79,206.00 L283.55,207.04Z" fill="#e6c729" stroke="#e6c729" stroke-width="1" stroke-linejoin="round"/>
<path d="M270.55,206.47 L257.79,205.89 L257.88,205.42 L270.79,206.00Z" fill="#e7c829" stroke="#e7c829" stroke-width="1" stroke-linejoin="round"/>
<path d="M257.79,205.89 L244.98,205.77 L244.91,205.29 L257.88,205.42Z" fill="#e8c829" stroke="#e8c829" stroke-width="1" stroke-linejoin="round"/>
<path d="M244.98,205.77 L232.22,206.10 L231.99,205.63 L244.91,205.29Z" fill="#e9c929" stroke="#e9c929" stroke-width="1" stroke-linejoin="round"/>
<path d="M232.22,206.10 L219.61,206.88 L219.23,206.41 L231.99,205.63Z" fill="#e9ca29" stroke="#e9ca29" stroke-width="1" stroke-linejoin="round"/>
<path d="M219.61,206.88 L207.27,208.11 L206.73,207.66 L219.23,206.41Z" fill="#eaca29" stroke="#eaca29" stroke-width="1" stroke-linejoin="round"/>
<path d="M207.27,208.11 L195.28,209.78 L194.59,209.35 L206.73,207.66Z" fill="#ebcb2a" stroke="#ebcb2a" stroke-width="1" stroke-linejoin="round"/>
<path d="M195.28,209.78 L183.76,211.88 L182.93,211.47 L194.59,209.35Z" fill="#eccc2a" stroke="#eccc2a" stroke-width="1" stroke-linejoin="round"/>
<path d="M183.76,211.88 L172.80,214.40 L171.83,214.02 L182.93,211.47Z" fill="#edcd2a" stroke="#edcd2a" stroke-width="1" stroke-linejoin="round"/>
<path d="M172.80,214.40 L162.52,217.32 L161.41,216.98 L171.83,214.02Z" fill="#eecd2a" stroke="#eecd2a" stroke-width="1" stroke-linejoin="round"/>
<path d="M162.52,217.32 L153.02,220.63 L151.78,220.33 L161.41,216.98Z" fill="#efce2a" stroke="#efce2a" stroke-width="1" stroke-linejoin="round"/>
<path d="M153.02,220.63 L144.39,224.31 L143.03,224.05 L151.78,220.33Z" fill="#f0cf2a" stroke="#f0cf2a" stroke-width="1" stroke-linejoin="round"/>
<path d="M144.39,224.31 L136.74,228.32 L135.27,228.12 L143.03,224.05Z" fill="#f0d02a" stroke="#f0d02a" stroke-width="1" stroke-linejoin="round"/>
<path d="M136.74,228.32 L130.16,232.65 L128.59,232.49 L135.27,228.12Z" fill="#f1d02b" stroke="#f1d02b" stroke-width="1" stroke-linejoin="round"/>
<path d="M130.16,232.65 L124.74,237.24 L123.10,237.15 L128.59,232.49Z" fill="#f2d12b" stroke="#f2d12b" stroke-width="1" stroke-linejoin="round"/>
<path d="M124.74,237.24 L120.58,242.08 L118.86,242.04 L123.10,237.15Z" fill="#f3d12b" stroke="#f3d12b" stroke-width="1" stroke-linejoin="round"/>
<path d="M120.58,242.08 L117.76,247.10 L115.98,247.14 L118.86,242.04Z" fill="#f3d22b" stroke="#f3d22b" stroke-width="1" stroke-linejoin="round"/>
<path d="M117.76,247.10 L116.33,252.27 L114.52,252.38 L115.98,247.14Z" fill="#f4d22b" stroke="#f4d22b" stroke-width="1" stroke-linejoin="round"/>
<path d="M116.33,252.27 L116.36,257.53 L114.53,257.71 L114.52,252.38Z" fill="#f4d32b" stroke="#f4d32b" stroke-width="1" stroke-linejoin="round"/>
<path d="M116.36,257.53 L117.90,262.83 L116.07,263.08 L114.53,257.71Z" fill="#f4d32b" stroke="#f4d32b" stroke-width="1" stroke-linejoin="round"/>
<path d="M117.90,262.83 L120.97,268.10 L119.17,268.43 L116.07,263.08Z" fill="#f5d32b" stroke="#f5d32b" stroke-width="1" stroke-linejoin="round"/>
<path d="M120.97,268.10 L125.59,273.28 L123.83,273.68 L119.17,268.43Z" fill="#f5d32b" stroke="#f5d32b" stroke-width="1" stroke-linejoin="round"/>
<path d="M125.59,273.28 L131.73,278.30 L130.04,278.78 L123.83,273.68Z" fill="#f5d32b" stroke="#f5d32b" stroke-width="1" stroke-linejoin="round"/>
<path d="M131.73,278.30 L139.36,283.10 L137.77,283.65 L130.04,278.78Z" fill="#f5d32b" stroke="#f5d32b" stroke-width="1" stroke-linejoin="round"/>
<path d="M139.36,283.10 L148.43,287.60 L146.96,288.22 L137.77,283.65Z" fill="#f5d32b" stroke="#f5d32b" stroke-width="1" stroke-linejoin="round"/>
<path d="M148.43,287.60 L158.85,291.74 L157.51,292.43 L146.96,288.22Z" fill="#f4d32b" stroke="#f4d32b" stroke-width="1" stroke-linejoin="round"/>
<path d="M158.85,291.74 L170.50,295.46 L169.33,296.21 L157.51,292.43Z" fill="#f4d32b" stroke="#f4d32b" stroke-width="1" stroke-linejoin="round"/>
<path d="M170.50,295.46 L183.26,298.70 L182.27,299.49 L169.33,296.21Z" fill="#f4d32b" stroke="#f4d32b" stroke-width="1" stroke-linejoin="round"/>
<path d="M183.26,298.70 L196.97,301.39 L196.17,302.23 L182.27,299.49Z" fill="#f3d22b" stroke="#f3d22b" stroke-width="1" stroke-linejoin="round"/>
<path d="M196.97,301.39 L211.43,303.50 L210.85,304.38 L196.17,302.23Z" fill="#f3d22b" stroke="#f3d22b" stroke-width="1" stroke-linejoin="round"/>
<path d="M211.43,303.50 L226.46,305.00 L226.10,305.89 L210.85,304.38Z" fill="#f2d12b" stroke="#f2d12b" stroke-width="1" stroke-linejoin="round"/>
<path d="M226.46,305.00 L241.85,305.84 L241.72,306.75 L226.10,305.89Z" fill="#f1d02b" stroke="#f1d02b" stroke-width="1" stroke-linejoin="round"/>
<path d="M241.85,305.84 L257.36,306.02 L257.46,306.94 L241.72,306.75Z" fill="#f1d02b" stroke="#f1d02b" stroke-width="1" stroke-linejoin="round"/>
<path d="M257.36,306.02 L272.79,305.54 L273.12,306.45 L257.46,306.94Z" fill="#f0cf2a" stroke="#f0cf2a" stroke-width="1" stroke-linejoin="round"/>
<path d="M272.79,305.54 L287.91,304.40 L288.46,305.29 L273.12,306.45Z" fill="#efce2a" stroke="#efce2a" stroke-width="1" stroke-linejoin="round"/>
<path d="M287.91,304.40 L302.50,302.63 L303.26,303.49 L288.46,305.29Z" fill="#eece2a" stroke="#eece2a" stroke-width="1" stroke-linejoin="round"/>
<path d="M302.50,302.63 L316.36,300.25 L317.33,301.07 L303.26,303.49Z" fill="#edcd2a" stroke="#edcd2a" stroke-width="1" stroke-linejoin="round"/>
<path d="M316.36,300.25 L329.30,297.30 L330.46,298.08 L317.33,301.07Z" fill="#eccc2a" stroke="#eccc2a" stroke-width="1" stroke-linejoin="round"/>
<path d="M329.30,297.30 L341.17,293.85 L342.49,294.56 L330.46,298.08Z" fill="#ebcb2a" stroke="#ebcb2a" stroke-width="1" stroke-linejoin="round"/>
<path d="M341.17,293.85 L351.81,289.93 L353.28,290.59 L342.49,294.56Z" fill="#ebcb29" stroke="#ebcb29" stroke-width="1" stroke-linejoin="round"/>
<path d="M351.81,289.93 L361.12,285.61 L362.71,286.20 L353.28,290.59Z" fill="#eaca29" stroke="#eaca29" stroke-width="1" stroke-linejoin="round"/>
<path d="M361.12,285.61 L369.00,280.97 L370.68,281.49 L362.71,286.20Z" fill="#e9c929" stroke="#e9c929" stroke-width="1" stroke-linejoin="round"/>
<path d="M369.00,280.97 L375.38,276.06 L377.14,276.51 L370.68,281.49Z" fill="#e8c829" stroke="#e8c829" stroke-width="1" stroke-linejoin="round"/>
<path d="M375.38,276.06 L380.22,270.96 L382.03,271.33 L377.14,276.51Z" fill="#e7c829" stroke="#e7c829" stroke-width="1" stroke-linejoin="round"/>
<path d="M380.22,270.96 L383.51,265.73 L385.35,266.03 L382.03,271.33Z" fill="#e7c729" stroke="#e7c729" stroke-width="1" stroke-linejoin="round"/>
<path d="M383.51,265.73 L385.26,260.44 L387.10,260.66 L385.35,266.03Z" fill="#e6c729" stroke="#e6c729" stroke-width="1" stroke-linejoin="round"/>
<path d="M385.26,260.44 L385.48,255.16 L387.31,255.30 L387.10,260.66Z" fill="#e5c629" stroke="#e5c629" stroke-width="1" stroke-linejoin="round"/>
<path d="M387.31,255.30 L386.02,250.00 L387.79,250.25 L389.11,255.62Z" fill="#d4b725" stroke="#d4b725" stroke-width="1" stroke-linejoin="round"/>
<path d="M386.02,250.00 L383.29,244.82 L385.00,245.00 L387.79,250.25Z" fill="#d3b625" stroke="#d3b625" stroke-width="1" stroke-linejoin="round"/>
<path d="M383.29,244.82 L379.19,239.81 L380.83,239.92 L385.00,245.00Z" fill="#d2b525" stroke="#d2b525" stroke-width="1" stroke-linejoin="round"/>
<path d="M379.19,239.81 L373.80,235.02 L375.36,235.07 L380.83,239.92Z" fill="#d1b425" stroke="#d1b425" stroke-width="1" stroke-linejoin="round"/>
<path d="M373.80,235.02 L367.22,230.48 L368.68,230.48 L375.36,235.07Z" fill="#d1b425" stroke="#d1b425" stroke-width="1" stroke-linejoin="round"/>
<path d="M367.22,230.48 L359.53,226.24 L360.89,226.18 L368.68,230.48Z" fill="#d0b425" stroke="#d0b425" stroke-width="1" stroke-linejoin="round"/>
<path d="M359.53,226.24 L350.85,222.33 L352.08,222.22 L360.89,226.18Z" fill="#d0b425" stroke="#d0b425" stroke-width="1" stroke-linejoin="round"/>
<path d="M350.85,222.33 L341.26,218.78 L342.37,218.62 L352.08,222.22Z" fill="#d1b425" stroke="#d1b425" stroke-width="1" stroke-linejoin="round"/>
<path d="M341.26,218.78 L330.88,215.60 L331.86,215.41 L342.37,218.62Z" fill="#d2b525" stroke="#d2b525" stroke-width="1" stroke-linejoin="round"/>
<path d="M330.88,215.60 L319.82,212.82 L320.65,212.60 L331.86,215.41Z" fill="#d2b625" stroke="#d2b625" stroke-width="1" stroke-linejoin="round"/>
<path d="M319.82,212.82 L308.17,210.46 L308.86,210.21 L320.65,212.60Z" fill="#d4b725" stroke="#d4b725" stroke-width="1" stroke-linejoin="round"/>
<path d="M308.17,210.46 L296.04,208.53 L296.59,208.26 L308.86,210.21Z" fill="#d5b826" stroke="#d5b826" stroke-width="1" stroke-linejoin="round"/>
<path d="M296.04,208.53 L283.55,207.04 L283.94,206.75 L296.59,208.26Z" fill="#d7b926" stroke="#d7b926" stroke-width="1" stroke-linejoin="round"/>
<path d="M283.55,207.04 L270.79,206.00 L271.03,205.70 L283.94,206.75Z" fill="#d9bb26" stroke="#d9bb26" stroke-width="1" stroke-linejoin="round"/>
<path d="M270.79,206.00 L257.88,205.42 L257.96,205.11 L271.03,205.70Z" fill="#dbbd27" stroke="#dbbd27" stroke-width="1" stroke-linejoin="round"/>
<path d="M257.88,205.42 L244.91,205.29 L244.84,204.99 L257.96,205.11Z" fill="#ddbf27" stroke="#ddbf27" stroke-width="1" stroke-linejoin="round"/>
<path d="M244.91,205.29 L231.99,205.63 L231.77,205.32 L244.84,204.99Z" fill="#dfc127" stroke="#dfc127" stroke-width="1" stroke-linejoin="round"/>
<path d="M231.99,205.63 L219.23,206.41 L218.86,206.12 L231.77,205.32Z" fill="#e2c328" stroke="#e2c328" stroke-width="1" stroke-linejoin="round"/>
<path d="M219.23,206.41 L206.73,207.66 L206.20,207.38 L218.86,206.12Z" fill="#e4c528" stroke="#e4c528" stroke-width="1" stroke-linejoin="round"/>
<path d="M206.73,207.66 L194.59,209.35 L193.92,209.08 L206.20,207.38Z" fill="#e7c829" stroke="#e7c829" stroke-width="1" stroke-linejoin="round"/>
<path d="M194.59,209.35 L182.93,211.47 L182.11,211.23 L193.92,209.08Z" fill="#eaca29" stroke="#eaca29" stroke-width="1" stroke-linejoin="round"/>
<path d="M182.93,211.47 L171.83,214.02 L170.87,213.81 L182.11,211.23Z" fill="#eccc2a" stroke="#eccc2a" stroke-width="1" stroke-linejoin="round"/>
<path d="M171.83,214.02 L161.41,216.98 L160.32,216.81 L170.87,213.81Z" fill="#efcf2a" stroke="#efcf2a" stroke-width="1" stroke-linejoin="round"/>
<path d="M161.41,216.98 L151.78,220.33 L150.56,220.20 L160.32,216.81Z" fill="#f2d12b" stroke="#f2d12b" stroke-width="1" stroke-linejoin="round"/>
<path d="M151.78,220.33 L143.03,224.05 L141.70,223.96 L150.56,220.20Z" fill="#f4d32b" stroke="#f4d32b" stroke-width="1" stroke-linejoin="round"/>
<path d="M143.03,224.05 L135.27,228.12 L133.83,228.08 L141.70,223.96Z" fill="#f7d52c" stroke="#f7d52c" stroke-width="1" stroke-linejoin="round"/>
<path d="M135.27,228.12 L128.59,232.49 L127.05,232.51 L133.83,228.08Z" fill="#f9d72c" stroke="#f9d72c" stroke-width="1" stroke-linejoin="round"/>
<path d="M128.59,232.49 L123.10,237.15 L121.47,237.23 L127.05,232.51Z" fill="#fbd92c" stroke="#fbd92c" stroke-width="1" stroke-linejoin="round"/>
<path d="M123.10,237.15 L118.86,242.04 L117.17,242.19 L121.47,237.23Z" fill="#fddb2d" stroke="#fddb2d" stroke-width="1" stroke-linejoin="round"/>
<path d="M118.86,242.04 L115.98,247.14 L114.23,247.34 L117.17,242.19Z" fill="#ffdc2d" stroke="#ffdc2d" stroke-width="1" stroke-linejoin="round"/>
<path d="M115.98,247.14 L114.52,252.38 L112.73,252.66 L114.23,247.34Z" fill="#ffdd2d" stroke="#ffdd2d" stroke-width="1" stroke-linejoin="round"/>
<path d="M114.52,252.38 L114.53,257.71 L112.73,258.06 L112.73,252.66Z" fill="#ffde2e" stroke="#ffde2e" stroke-width="1" stroke-linejoin="round"/>
<path d="M114.53,257.71 L116.07,263.08 L114.27,263.51 L112.73,258.06Z" fill="#ffdf2e" stroke="#ffdf2e" stroke-width="1" stroke-linejoin="round"/>
<path d="M116.07,263.08 L119.17,268.43 L117.39,268.93 L114.27,263.51Z" fill="#ffe02e" stroke="#ffe02e" stroke-width="1" stroke-linejoin="round"/>
<path d="M119.17,268.43 L123.83,273.68 L122.10,274.26 L117.39,268.93Z" fill="#ffe02e" stroke="#ffe02e" stroke-width="1" stroke-linejoin="round"/>
<path d="M123.83,273.68 L130.04,278.78 L128.38,279.44 L122.10,274.26Z" fill="#ffe02e" stroke="#ffe02e" stroke-width="1" stroke-linejoin="round"/>
<path d="M130.04,278.78 L137.77,283.65 L136.20,284.38 L128.38,279.44Z" fill="#ffe02e" stroke="#ffe02e" stroke-width="1" stroke-linejoin="round"/>
<path d="M137.77,283.65 L146.96,288.22 L145.50,289.02 L136.20,284.38Z" fill="#ffe02e" stroke="#ffe02e" stroke-width="1" stroke-linejoin="round"/>
<path d="M146.96,288.22 L157.51,292.43 L156.20,293.30 L145.50,289.02Z" fill="#ffe02e" stroke="#ffe02e" stroke-width="1" stroke-linejoin="round"/>
<path d="M157.51,292.43 L169.33,296.21 L168.17,297.13 L156.20,293.30Z" fill="#ffdf2e" stroke="#ffdf2e" stroke-width="1" stroke-linejoin="round"/>
<path d="M169.33,296.21 L182.27,299.49 L181.29,300.47 L168.17,297.13Z" fill="#ffde2d" stroke="#ffde2d" stroke-width="1" stroke-linejoin="round"/>
<path d="M182.27,299.49 L196.17,302.23 L195.39,303.26 L181.29,300.47Z" fill="#ffdc2d" stroke="#ffdc2d" stroke-width="1" stroke-linejoin="round"/>
<path d="M196.17,302.23 L210.85,304.38 L210.27,305.44 L195.39,303.26Z" fill="#fedb2d" stroke="#fedb2d" stroke-width="1" stroke-linejoin="round"/>
<path d="M210.85,304.38 L226.10,305.89 L225.75,306.98 L210.27,305.44Z" fill="#fcd92c" stroke="#fcd92c" stroke-width="1" stroke-linejoin="round"/>
<path d="M226.10,305.89 L241.72,306.75 L241.58,307.85 L225.75,306.98Z" fill="#fad82c" stroke="#fad82c" stroke-width="1" stroke-linejoin="round"/>
<path d="M241.72,306.75 L257.46,306.94 L257.56,308.04 L241.58,307.85Z" fill="#f7d62c" stroke="#f7d62c" stroke-width="1" stroke-linejoin="round"/>
<path d="M257.46,306.94 L273.12,306.45 L273.45,307.54 L257.56,308.04Z" fill="#f5d42b" stroke="#f5d42b" stroke-width="1" stroke-linejoin="round"/>
<path d="M273.12,306.45 L288.46,305.29 L289.01,306.37 L273.45,307.54Z" fill="#f3d12b" stroke="#f3d12b" stroke-width="1" stroke-linejoin="round"/>
<path d="M288.46,305.29 L303.26,303.49 L304.02,304.53 L289.01,306.37Z" fill="#f0cf2a" stroke="#f0cf2a" stroke-width="1" stroke-linejoin="round"/>
<path d="M303.26,303.49 L317.33,301.07 L318.28,302.07 L304.02,304.53Z" fill="#edcd2a" stroke="#edcd2a" stroke-width="1" stroke-linejoin="round"/>
<path d="M317.33,301.07 L330.46,298.08 L331.60,299.03 L318.28,302.07Z" fill="#ebcb29" stroke="#ebcb29" stroke-width="1" stroke-linejoin="round"/>
<path d="M330.46,298.08 L342.49,294.56 L343.79,295.46 L331.60,299.03Z" fill="#e8c829" stroke="#e8c829" stroke-width="1" stroke-linejoin="round"/>
<path d="M342.49,294.56 L353.28,290.59 L354.72,291.42 L343.79,295.46Z" fill="#e5c629" stroke="#e5c629" stroke-width="1" stroke-linejoin="round"/>
<path d="M353.28,290.59 L362.71,286.20 L364.27,286.98 L354.72,291.42Z" fill="#e3c428" stroke="#e3c428" stroke-width="1" stroke-linejoin="round"/>
<path d="M362.71,286.20 L370.68,281.49 L372.34,282.19 L364.27,286.98Z" fill="#e0c128" stroke="#e0c128" stroke-width="1" stroke-linejoin="round"/>
<path d="M370.68,281.49 L377.14,276.51 L378.87,277.13 L372.34,282.19Z" fill="#debf27" stroke="#debf27" stroke-width="1" stroke-linejoin="round"/>
<path d="M377.14,276.51 L382.03,271.33 L383.82,271.88 L378.87,277.13Z" fill="#dbbd27" stroke="#dbbd27" stroke-width="1" stroke-linejoin="round"/>
<path d="M382.03,271.33 L385.35,266.03 L387.16,266.50 L383.82,271.88Z" fill="#d9bc26" stroke="#d9bc26" stroke-width="1" stroke-linejoin="round"/>
<path d="M385.35,266.03 L387.10,260.66 L388.92,261.06 L387.16,266.50Z" fill="#d7ba26" stroke="#d7ba26" stroke-width="1" stroke-linejoin="round"/>
<path d="M387.10,260.66 L387.31,255.30 L389.11,255.62 L388.92,261.06Z" fill="#d6b826" stroke="#d6b826" stroke-width="1" stroke-linejoin="round"/>
<path d="M389.11,255.62 L387.79,250.25 L389.50,250.67 L390.86,256.11Z" fill="#c1a722" stroke="#c1a722" stroke-width="1" stroke-linejoin="round"/>
<path d="M387.79,250.25 L385.00,245.00 L386.67,245.35 L389.50,250.67Z" fill="#bfa522" stroke="#bfa522" stroke-width="1" stroke-linejoin="round"/>
<path d="M385.00,245.00 L380.83,239.92 L382.43,240.21 L386.67,245.35Z" fill="#bea422" stroke="#bea422" stroke-width="1" stroke-linejoin="round"/>
<path d="M380.83,239.92 L375.36,235.07 L376.88,235.29 L382.43,240.21Z" fill="#bda321" stroke="#bda321" stroke-width="1" stroke-linejoin="round"/>
<path d="M375.36,235.07 L368.68,230.48 L370.10,230.64 L376.88,235.29Z" fill="#bca221" stroke="#bca221" stroke-width="1" stroke-linejoin="round"/>
<path d="M368.68,230.48 L360.89,226.18 L362.20,226.30 L370.10,230.64Z" fill="#bba221" stroke="#bba221" stroke-width="1" stroke-linejoin="round"/>
<path d="M360.89,226.18 L352.08,222.22 L353.28,222.29 L362.20,226.30Z" fill="#bca221" stroke="#bca221" stroke-width="1" stroke-linejoin="round"/>
<path d="M352.08,222.22 L342.37,218.62 L343.45,218.65 L353.28,222.29Z" fill="#bca321" stroke="#bca321" stroke-width="1" stroke-linejoin="round"/>
<path d="M342.37,218.62 L331.86,215.41 L332.80,215.39 L343.45,218.65Z" fill="#bda321" stroke="#bda321" stroke-width="1" stroke-linejoin="round"/>
<path d="M331.86,215.41 L320.65,212.60 L321.46,212.55 L332.80,215.39Z" fill="#bfa522" stroke="#bfa522" stroke-width="1" stroke-linejoin="round"/>
<path d="M320.65,212.60 L308.86,210.21 L309.53,210.14 L321.46,212.55Z" fill="#c1a622" stroke="#c1a622" stroke-width="1" stroke-linejoin="round"/>
<path d="M308.86,210.21 L296.59,208.26 L297.11,208.16 L309.53,210.14Z" fill="#c3a922" stroke="#c3a922" stroke-width="1" stroke-linejoin="round"/>
<path d="M296.59,208.26 L283.94,206.75 L284.32,206.64 L297.11,208.16Z" fill="#c6ab23" stroke="#c6ab23" stroke-width="1" stroke-linejoin="round"/>
<path d="M283.94,206.75 L271.03,205.70 L271.26,205.58 L284.32,206.64Z" fill="#c9ae24" stroke="#c9ae24" stroke-width="1" stroke-linejoin="round"/>
<path d="M271.03,205.70 L257.96,205.11 L258.05,204.98 L271.26,205.58Z" fill="#ccb124" stroke="#ccb124" stroke-width="1" stroke-linejoin="round"/>
<path d="M257.96,205.11 L244.84,204.99 L244.77,204.85 L258.05,204.98Z" fill="#d0b425" stroke="#d0b425" stroke-width="1" stroke-linejoin="round"/>
<path d="M244.84,204.99 L231.77,205.32 L231.55,205.19 L244.77,204.85Z" fill="#d4b725" stroke="#d4b725" stroke-width="1" stroke-linejoin="round"/>
<path d="M231.77,205.32 L218.86,206.12 L218.49,206.00 L231.55,205.19Z" fill="#d8bb26" stroke="#d8bb26" stroke-width="1" stroke-linejoin="round"/>
<path d="M218.86,206.12 L206.20,207.38 L205.69,207.27 L218.49,206.00Z" fill="#ddbe27" stroke="#ddbe27" stroke-width="1" stroke-linejoin="round"/>
<path d="M206.20,207.38 L193.92,209.08 L193.26,208.99 L205.69,207.27Z" fill="#e1c228" stroke="#e1c228" stroke-width="1" stroke-linejoin="round"/>
<path d="M193.92,209.08 L182.11,211.23 L181.31,211.17 L193.26,208.99Z" fill="#e5c629" stroke="#e5c629" stroke-width="1" stroke-linejoin="round"/>
<path d="M182.11,211.23 L170.87,213.81 L169.94,213.78 L181.31,211.17Z" fill="#eaca29" stroke="#eaca29" stroke-width="1" stroke-linejoin="round"/>
<path d="M170.87,213.81 L160.32,216.81 L159.26,216.81 L169.94,213.78Z" fill="#eece2a" stroke="#eece2a" stroke-width="1" stroke-linejoin="round"/>
<path d="M160.32,216.81 L150.56,220.20 L149.38,220.24 L159.26,216.81Z" fill="#f3d22b" stroke="#f3d22b" stroke-width="1" stroke-linejoin="round"/>
<path d="M150.56,220.20 L141.70,223.96 L140.40,224.05 L149.38,220.24Z" fill="#f7d52c" stroke="#f7d52c" stroke-width="1" stroke-linejoin="round"/>
<path d="M141.70,223.96 L133.83,228.08 L132.42,228.21 L140.40,224.05Z" fill="#fbd92c" stroke="#fbd92c" stroke-width="1" stroke-linejoin="round"/>
<path d="M133.83,228.08 L127.05,232.51 L125.55,232.70 L132.42,228.21Z" fill="#ffdc2d" stroke="#ffdc2d" stroke-width="1" stroke-linejoin="round"/>
<path d="M127.05,232.51 L121.47,237.23 L119.89,237.47 L125.55,232.70Z" fill="#ffdf2e" stroke="#ffdf2e" stroke-width="1" stroke-linejoin="round"/>
<path d="M121.47,237.23 L117.17,242.19 L115.52,242.50 L119.89,237.47Z" fill="#ffe22e" stroke="#ffe22e" stroke-width="1" stroke-linejoin="round"/>
<path d="M117.17,242.19 L114.23,247.34 L112.53,247.73 L115.52,242.50Z" fill="#ffe42f" stroke="#ffe42f" stroke-width="1" stroke-linejoin="round"/>
<path d="M114.23,247.34 L112.73,252.66 L110.99,253.11 L112.53,247.73Z" fill="#ffe62f" stroke="#ffe62f" stroke-width="1" stroke-linejoin="round"/>
<path d="M112.73,252.66 L112.73,258.06 L110.97,258.59 L110.99,253.11Z" fill="#ffe830" stroke="#ffe830" stroke-width="1" stroke-linejoin="round"/>
<path d="M112.73,258.06 L114.27,263.51 L112.51,264.11 L110.97,258.59Z" fill="#ffea30" stroke="#ffea30" stroke-width="1" stroke-linejoin="round"/>
<path d="M114.27,263.51 L117.39,268.93 L115.65,269.61 L112.51,264.11Z" fill="#ffeb30" stroke="#ffeb30" stroke-width="1" stroke-linejoin="round"/>
<path d="M117.39,268.93 L122.10,274.26 L120.40,275.02 L115.65,269.61Z" fill="#ffeb30" stroke="#ffeb30" stroke-width="1" stroke-linejoin="round"/>
<path d="M122.10,274.26 L128.38,279.44 L126.75,280.27 L120.40,275.02Z" fill="#ffec30" stroke="#ffec30" stroke-width="1" stroke-linejoin="round"/>
<path d="M128.38,279.44 L136.20,284.38 L134.66,285.28 L126.75,280.27Z" fill="#ffeb30" stroke="#ffeb30" stroke-width="1" stroke-linejoin="round"/>
<path d="M136.20,284.38 L145.50,289.02 L144.08,290.00 L134.66,285.28Z" fill="#ffeb30" stroke="#ffeb30" stroke-width="1" stroke-linejoin="round"/>
<path d="M145.50,289.02 L156.20,293.30 L154.91,294.34 L144.08,290.00Z" fill="#ffea30" stroke="#ffea30" stroke-width="1" stroke-linejoin="round"/>
<path d="M156.20,293.30 L168.17,297.13 L167.04,298.23 L154.91,294.34Z" fill="#ffe930" stroke="#ffe930" stroke-width="1" stroke-linejoin="round"/>
<path d="M168.17,297.13 L181.29,300.47 L180.33,301.62 L167.04,298.23Z" fill="#ffe72f" stroke="#ffe72f" stroke-width="1" stroke-linejoin="round"/>
<path d="M181.29,300.47 L195.39,303.26 L194.62,304.45 L180.33,301.62Z" fill="#ffe52f" stroke="#ffe52f" stroke-width="1" stroke-linejoin="round"/>
<path d="M195.39,303.26 L210.27,305.44 L209.71,306.67 L194.62,304.45Z" fill="#ffe22e" stroke="#ffe22e" stroke-width="1" stroke-linejoin="round"/>
<path d="M210.27,305.44 L225.75,306.98 L225.40,308.23 L209.71,306.67Z" fill="#ffe02e" stroke="#ffe02e" stroke-width="1" stroke-linejoin="round"/>
<path d="M225.75,306.98 L241.58,307.85 L241.45,309.12 L225.40,308.23Z" fill="#ffdd2d" stroke="#ffdd2d" stroke-width="1" stroke-linejoin="round"/>
<path d="M241.58,307.85 L257.56,308.04 L257.65,309.31 L241.45,309.12Z" fill="#fcda2d" stroke="#fcda2d" stroke-width="1" stroke-linejoin="round"/>
<path d="M257.56,308.04 L273.45,307.54 L273.76,308.81 L257.65,309.31Z" fill="#f8d62c" stroke="#f8d62c" stroke-width="1" stroke-linejoin="round"/>
<path d="M273.45,307.54 L289.01,306.37 L289.54,307.61 L273.76,308.81Z" fill="#f4d32b" stroke="#f4d32b" stroke-width="1" stroke-linejoin="round"/>
<path d="M289.01,306.37 L304.02,304.53 L304.76,305.75 L289.54,307.61Z" fill="#f0cf2a" stroke="#f0cf2a" stroke-width="1" stroke-linejoin="round"/>
<path d="M304.02,304.53 L318.28,302.07 L319.21,303.25 L304.76,305.75Z" fill="#ebcb2a" stroke="#ebcb2a" stroke-width="1" stroke-linejoin="round"/>
<path d="M318.28,302.07 L331.60,299.03 L332.70,300.16 L319.21,303.25Z" fill="#e7c729" stroke="#e7c729" stroke-width="1" stroke-linejoin="round"/>
<path d="M331.60,299.03 L343.79,295.46 L345.06,296.54 L332.70,300.16Z" fill="#e2c328" stroke="#e2c328" stroke-width="1" stroke-linejoin="round"/>
<path d="M343.79,295.46 L354.72,291.42 L356.13,292.43 L345.06,296.54Z" fill="#dec027" stroke="#dec027" stroke-width="1" stroke-linejoin="round"/>
<path d="M354.72,291.42 L364.27,286.98 L365.80,287.92 L356.13,292.43Z" fill="#dabc26" stroke="#dabc26" stroke-width="1" stroke-linejoin="round"/>
<path d="M364.27,286.98 L372.34,282.19 L373.96,283.06 L365.80,287.92Z" fill="#d5b826" stroke="#d5b826" stroke-width="1" stroke-linejoin="round"/>
<path d="M372.34,282.19 L378.87,277.13 L380.56,277.93 L373.96,283.06Z" fill="#d1b525" stroke="#d1b525" stroke-width="1" stroke-linejoin="round"/>
<path d="M378.87,277.13 L383.82,271.88 L385.56,272.60 L380.56,277.93Z" fill="#ceb124" stroke="#ceb124" stroke-width="1" stroke-linejoin="round"/>
<path d="M383.82,271.88 L387.16,266.50 L388.93,267.14 L385.56,272.60Z" fill="#caae24" stroke="#caae24" stroke-width="1" stroke-linejoin="round"/>
<path d="M387.16,266.50 L388.92,261.06 L390.69,261.62 L388.93,267.14Z" fill="#c7ac23" stroke="#c7ac23" stroke-width="1" stroke-linejoin="round"/>
<path d="M388.92,261.06 L389.11,255.62 L390.86,256.11 L390.69,261.62Z" fill="#c4a923" stroke="#c4a923" stroke-width="1" stroke-linejoin="round"/>
<path d="M390.86,256.11 L389.50,250.67 L391.15,251.25 L392.55,256.77Z" fill="#ad961f" stroke="#ad961f" stroke-width="1" stroke-linejoin="round"/>
<path d="M389.50,250.67 L386.67,245.35 L388.26,245.87 L391.15,251.25Z" fill="#aa931e" stroke="#aa931e" stroke-width="1" stroke-linejoin="round"/>
<path d="M386.67,245.35 L382.43,240.21 L383.96,240.66 L388.26,245.87Z" fill="#a8911e" stroke="#a8911e" stroke-width="1" stroke-linejoin="round"/>
<path d="M382.43,240.21 L376.88,235.29 L378.33,235.68 L383.96,240.66Z" fill="#a6901d" stroke="#a6901d" stroke-width="1" stroke-linejoin="round"/>
<path d="M376.88,235.29 L370.10,230.64 L371.46,230.98 L378.33,235.68Z" fill="#a58f1d" stroke="#a58f1d" stroke-width="1" stroke-linejoin="round"/>
<path d="M370.10,230.64 L362.20,226.30 L363.46,226.58 L371.46,230.98Z" fill="#a58e1d" stroke="#a58e1d" stroke-width="1" stroke-linejoin="round"/>
<path d="M362.20,226.30 L353.28,222.29 L354.43,222.52 L363.46,226.58Z" fill="#a58f1d" stroke="#a58f1d" stroke-width="1" stroke-linejoin="round"/>
<path d="M353.28,222.29 L343.45,218.65 L344.48,218.84 L354.43,222.52Z" fill="#a68f1d" stroke="#a68f1d" stroke-width="1" stroke-linejoin="round"/>
<path d="M343.45,218.65 L332.80,215.39 L333.71,215.55 L344.48,218.84Z" fill="#a8911e" stroke="#a8911e" stroke-width="1" stroke-linejoin="round"/>
<path d="M332.80,215.39 L321.46,212.55 L322.24,212.67 L333.71,215.55Z" fill="#aa931e" stroke="#aa931e" stroke-width="1" stroke-linejoin="round"/>
<path d="M321.46,212.55 L309.53,210.14 L310.17,210.23 L322.24,212.67Z" fill="#ac951e" stroke="#ac951e" stroke-width="1" stroke-linejoin="round"/>
<path d="M309.53,210.14 L297.11,208.16 L297.62,208.23 L310.17,210.23Z" fill="#b0981f" stroke="#b0981f" stroke-width="1" stroke-linejoin="round"/>
<path d="M205.69,207.27 L193.26,208.99 L192.63,209.08 L205.20,207.33Z" fill="#d9bb26" stroke="#d9bb26" stroke-width="1" stroke-linejoin="round"/>
<path d="M193.26,208.99 L181.31,211.17 L180.54,211.28 L192.63,209.08Z" fill="#dfc127" stroke="#dfc127" stroke-width="1" stroke-linejoin="round"/>
<path d="M181.31,211.17 L169.94,213.78 L169.04,213.91 L180.54,211.28Z" fill="#e5c629" stroke="#e5c629" stroke-width="1" stroke-linejoin="round"/>
<path d="M169.94,213.78 L159.26,216.81 L158.24,216.98 L169.04,213.91Z" fill="#ebcb2a" stroke="#ebcb2a" stroke-width="1" stroke-linejoin="round"/>
<path d="M159.26,216.81 L149.38,220.24 L148.24,220.45 L158.24,216.98Z" fill="#f1d02b" stroke="#f1d02b" stroke-width="1" stroke-linejoin="round"/>
<path d="M149.38,220.24 L140.40,224.05 L139.15,224.30 L148.24,220.45Z" fill="#f7d62c" stroke="#f7d62c" stroke-width="1" stroke-linejoin="round"/>
<path d="M140.40,224.05 L132.42,228.21 L131.07,228.52 L139.15,224.30Z" fill="#fdda2d" stroke="#fdda2d" stroke-width="1" stroke-linejoin="round"/>
<path d="M132.42,228.21 L125.55,232.70 L124.11,233.06 L131.07,228.52Z" fill="#ffdf2e" stroke="#ffdf2e" stroke-width="1" stroke-linejoin="round"/>
<path d="M125.55,232.70 L119.89,237.47 L118.37,237.89 L124.11,233.06Z" fill="#ffe32e" stroke="#ffe32e" stroke-width="1" stroke-linejoin="round"/>
<path d="M119.89,237.47 L115.52,242.50 L113.93,242.98 L118.37,237.89Z" fill="#ffe72f" stroke="#ffe72f" stroke-width="1" stroke-linejoin="round"/>
<path d="M115.52,242.50 L112.53,247.73 L110.89,248.27 L113.93,242.98Z" fill="#ffea30" stroke="#ffea30" stroke-width="1" stroke-linejoin="round"/>
<path d="M112.53,247.73 L110.99,253.11 L109.31,253.73 L110.89,248.27Z" fill="#ffed31" stroke="#ffed31" stroke-width="1" stroke-linejoin="round"/>
<path d="M110.99,253.11 L110.97,258.59 L109.28,259.28 L109.31,253.73Z" fill="#fff031" stroke="#fff031" stroke-width="1" stroke-linejoin="round"/>
<path d="M110.97,258.59 L112.51,264.11 L110.82,264.88 L109.28,259.28Z" fill="#fff231" stroke="#fff231" stroke-width="1" stroke-linejoin="round"/>
<path d="M112.51,264.11 L115.65,269.61 L113.98,270.45 L110.82,264.88Z" fill="#fff332" stroke="#fff332" stroke-width="1" stroke-linejoin="round"/>
<path d="M115.65,269.61 L120.40,275.02 L118.77,275.94 L113.98,270.45Z" fill="#fff432" stroke="#fff432" stroke-width="1" stroke-linejoin="round"/>
<path d="M120.40,275.02 L126.75,280.27 L125.19,281.26 L118.77,275.94Z" fill="#fff532" stroke="#fff532" stroke-width="1" stroke-linejoin="round"/>
<path d="M126.75,280.27 L134.66,285.28 L133.18,286.35 L125.19,281.26Z" fill="#fff432" stroke="#fff432" stroke-width="1" stroke-linejoin="round"/>
<path d="M134.66,285.28 L144.08,290.00 L142.71,291.13 L133.18,286.35Z" fill="#fff432" stroke="#fff432" stroke-width="1" stroke-linejoin="round"/>
<path d="M144.08,290.00 L154.91,294.34 L153.67,295.54 L142.71,291.13Z" fill="#fff232" stroke="#fff232" stroke-width="1" stroke-linejoin="round"/>
<path d="M154.91,294.34 L167.04,298.23 L165.95,299.49 L153.67,295.54Z" fill="#fff031" stroke="#fff031" stroke-width="1" stroke-linejoin="round"/>
<path d="M167.04,298.23 L180.33,301.62 L179.41,302.94 L165.95,299.49Z" fill="#ffee31" stroke="#ffee31" stroke-width="1" stroke-linejoin="round"/>
<path d="M180.33,301.62 L194.62,304.45 L193.88,305.81 L179.41,302.94Z" fill="#ffeb30" stroke="#ffeb30" stroke-width="1" stroke-linejoin="round"/>
<path d="M194.62,304.45 L209.71,306.67 L209.16,308.06 L193.88,305.81Z" fill="#ffe82f" stroke="#ffe82f" stroke-width="1" stroke-linejoin="round"/>
<path d="M209.71,306.67 L225.40,308.23 L225.06,309.65 L209.16,308.06Z" fill="#ffe42f" stroke="#ffe42f" stroke-width="1" stroke-linejoin="round"/>
<path d="M225.40,308.23 L241.45,309.12 L241.33,310.55 L225.06,309.65Z" fill="#ffe02e" stroke="#ffe02e" stroke-width="1" stroke-linejoin="round"/>
<path d="M241.45,309.12 L257.65,309.31 L257.74,310.74 L241.33,310.55Z" fill="#fedc2d" stroke="#fedc2d" stroke-width="1" stroke-linejoin="round"/>
<path d="M257.65,309.31 L273.76,308.81 L274.06,310.23 L257.74,310.74Z" fill="#f9d72c" stroke="#f9d72c" stroke-width="1" stroke-linejoin="round"/>
<path d="M273.76,308.81 L289.54,307.61 L290.05,309.02 L274.06,310.23Z" fill="#f3d22b" stroke="#f3d22b" stroke-width="1" stroke-linejoin="round"/>
<path d="M289.54,307.61 L304.76,305.75 L305.47,307.12 L290.05,309.02Z" fill="#edcd2a" stroke="#edcd2a" stroke-width="1" stroke-linejoin="round"/>
<path d="M304.76,305.75 L319.21,303.25 L320.11,304.59 L305.47,307.12Z" fill="#e7c829" stroke="#e7c829" stroke-width="1" stroke-linejoin="round"/>
<path d="M319.21,303.25 L332.70,300.16 L333.77,301.45 L320.11,304.59Z" fill="#e1c228" stroke="#e1c228" stroke-width="1" stroke-linejoin="round"/>
<path d="M332.70,300.16 L345.06,296.54 L346.28,297.77 L333.77,301.45Z" fill="#dbbd27" stroke="#dbbd27" stroke-width="1" stroke-linejoin="round"/>
<path d="M345.06,296.54 L356.13,292.43 L357.48,293.61 L346.28,297.77Z" fill="#d5b826" stroke="#d5b826" stroke-width="1" stroke-linejoin="round"/>
<path d="M356.13,292.43 L365.80,287.92 L367.26,289.02 L357.48,293.61Z" fill="#cfb225" stroke="#cfb225" stroke-width="1" stroke-linejoin="round"/>
<path d="M365.80,287.92 L373.96,283.06 L375.52,284.09 L367.26,289.02Z" fill="#c9ad23" stroke="#c9ad23" stroke-width="1" stroke-linejoin="round"/>
<path d="M373.96,283.06 L380.56,277.93 L382.19,278.89 L375.52,284.09Z" fill="#c3a923" stroke="#c3a923" stroke-width="1" stroke-linejoin="round"/>
<path d="M380.56,277.93 L385.56,272.60 L387.23,273.48 L382.19,278.89Z" fill="#bea422" stroke="#bea422" stroke-width="1" stroke-linejoin="round"/>
<path d="M385.56,272.60 L388.93,267.14 L390.62,267.95 L387.23,273.48Z" fill="#b9a021" stroke="#b9a021" stroke-width="1" stroke-linejoin="round"/>
<path d="M388.93,267.14 L390.69,261.62 L392.39,262.35 L390.62,267.95Z" fill="#b59c20" stroke="#b59c20" stroke-width="1" stroke-linejoin="round"/>
<path d="M390.69,261.62 L390.86,256.11 L392.55,256.77 L392.39,262.35Z" fill="#b1991f" stroke="#b1991f" stroke-width="1" stroke-linejoin="round"/>
<path d="M392.55,256.77 L391.15,251.25 L392.71,252.00 L394.14,257.59Z" fill="#98831b" stroke="#98831b" stroke-width="1" stroke-linejoin="round"/>
<path d="M391.15,251.25 L388.26,245.87 L389.78,246.55 L392.71,252.00Z" fill="#94801a" stroke="#94801a" stroke-width="1" stroke-linejoin="round"/>
<path d="M388.26,245.87 L383.96,240.66 L385.41,241.28 L389.78,246.55Z" fill="#917d1a" stroke="#917d1a" stroke-width="1" stroke-linejoin="round"/>
<path d="M383.96,240.66 L378.33,235.68 L379.71,236.24 L385.41,241.28Z" fill="#8f7c19" stroke="#8f7c19" stroke-width="1" stroke-linejoin="round"/>
<path d="M378.33,235.68 L371.46,230.98 L372.75,231.48 L379.71,236.24Z" fill="#8e7a19" stroke="#8e7a19" stroke-width="1" stroke-linejoin="round"/>
<path d="M371.46,230.98 L363.46,226.58 L364.66,227.03 L372.75,231.48Z" fill="#8d7a19" stroke="#8d7a19" stroke-width="1" stroke-linejoin="round"/>
<path d="M363.46,226.58 L354.43,222.52 L355.52,222.93 L364.66,227.03Z" fill="#8e7a19" stroke="#8e7a19" stroke-width="1" stroke-linejoin="round"/>
<path d="M354.43,222.52 L344.48,218.84 L345.46,219.20 L355.52,222.93Z" fill="#8f7b19" stroke="#8f7b19" stroke-width="1" stroke-linejoin="round"/>
<path d="M148.24,220.45 L139.15,224.30 L137.96,224.73 L147.16,220.83Z" fill="#f5d42b" stroke="#f5d42b" stroke-width="1" stroke-linejoin="round"/>
<path d="M139.15,224.30 L131.07,228.52 L129.79,228.99 L137.96,224.73Z" fill="#fdda2d" stroke="#fdda2d" stroke-width="1" stroke-linejoin="round"/>
<path d="M131.07,228.52 L124.11,233.06 L122.74,233.58 L129.79,228.99Z" fill="#ffe02e" stroke="#ffe02e" stroke-width="1" stroke-linejoin="round"/>
<path d="M124.11,233.06 L118.37,237.89 L116.92,238.48 L122.74,233.58Z" fill="#ffe52f" stroke="#ffe52f" stroke-width="1" stroke-linejoin="round"/>
<path d="M118.37,237.89 L113.93,242.98 L112.42,243.62 L116.92,238.48Z" fill="#ffea30" stroke="#ffea30" stroke-width="1" stroke-linejoin="round"/>
<path d="M113.93,242.98 L110.89,248.27 L109.33,248.98 L112.42,243.62Z" fill="#ffee31" stroke="#ffee31" stroke-width="1" stroke-linejoin="round"/>
<path d="M110.89,248.27 L109.31,253.73 L107.72,254.50 L109.33,248.98Z" fill="#fff232" stroke="#fff232" stroke-width="1" stroke-linejoin="round"/>
<path d="M109.31,253.73 L109.28,259.28 L107.66,260.13 L107.72,254.50Z" fill="#fff532" stroke="#fff532" stroke-width="1" stroke-linejoin="round"/>
<path d="M109.28,259.28 L110.82,264.88 L109.21,265.80 L107.66,260.13Z" fill="#fff833" stroke="#fff833" stroke-width="1" stroke-linejoin="round"/>
<path d="M110.82,264.88 L113.98,270.45 L112.39,271.45 L109.21,265.80Z" fill="#fffa33" stroke="#fffa33" stroke-width="1" stroke-linejoin="round"/>
<path d="M113.98,270.45 L118.77,275.94 L117.22,277.01 L112.39,271.45Z" fill="#fffb33" stroke="#fffb33" stroke-width="1" stroke-linejoin="round"/>
<path d="M118.77,275.94 L125.19,281.26 L123.70,282.41 L117.22,277.01Z" fill="#fffb33" stroke="#fffb33" stroke-width="1" stroke-linejoin="round"/>
<path d="M125.19,281.26 L133.18,286.35 L131.77,287.57 L123.70,282.41Z" fill="#fffb33" stroke="#fffb33" stroke-width="1" stroke-linejoin="round"/>
<path d="M133.18,286.35 L142.71,291.13 L141.40,292.42 L131.77,287.57Z" fill="#fffa33" stroke="#fffa33" stroke-width="1" stroke-linejoin="round"/>
<path d="M142.71,291.13 L153.67,295.54 L152.48,296.89 L141.40,292.42Z" fill="#fff833" stroke="#fff833" stroke-width="1" stroke-linejoin="round"/>
<path d="M153.67,295.54 L165.95,299.49 L164.91,300.90 L152.48,296.89Z" fill="#fff632" stroke="#fff632" stroke-width="1" stroke-linejoin="round"/>
<path d="M165.95,299.49 L179.41,302.94 L178.52,304.39 L164.91,300.90Z" fill="#fff332" stroke="#fff332" stroke-width="1" stroke-linejoin="round"/>
<path d="M179.41,302.94 L193.88,305.81 L193.17,307.31 L178.52,304.39Z" fill="#ffef31" stroke="#ffef31" stroke-width="1" stroke-linejoin="round"/>
<path d="M193.88,305.81 L209.16,308.06 L208.64,309.59 L193.17,307.31Z" fill="#ffeb30" stroke="#ffeb30" stroke-width="1" stroke-linejoin="round"/>
<path d="M209.16,308.06 L225.06,309.65 L224.73,311.21 L208.64,309.59Z" fill="#ffe72f" stroke="#ffe72f" stroke-width="1" stroke-linejoin="round"/>
<path d="M225.06,309.65 L241.33,310.55 L241.20,312.12 L224.73,311.21Z" fill="#ffe12e" stroke="#ffe12e" stroke-width="1" stroke-linejoin="round"/>
<path d="M241.33,310.55 L257.74,310.74 L257.82,312.32 L241.20,312.12Z" fill="#ffdc2d" stroke="#ffdc2d" stroke-width="1" stroke-linejoin="round"/>
<path d="M257.74,310.74 L274.06,310.23 L274.35,311.80 L257.82,312.32Z" fill="#f8d62c" stroke="#f8d62c" stroke-width="1" stroke-linejoin="round"/>
<path d="M274.06,310.23 L290.05,309.02 L290.53,310.57 L274.35,311.80Z" fill="#f0d02a" stroke="#f0d02a" stroke-width="1" stroke-linejoin="round"/>
<path d="M290.05,309.02 L305.47,307.12 L306.14,308.65 L290.53,310.57Z" fill="#e9c929" stroke="#e9c929" stroke-width="1" stroke-linejoin="round"/>
<path d="M305.47,307.12 L320.11,304.59 L320.96,306.07 L306.14,308.65Z" fill="#e1c228" stroke="#e1c228" stroke-width="1" stroke-linejoin="round"/>
<path d="M320.11,304.59 L333.77,301.45 L334.78,302.89 L320.96,306.07Z" fill="#d9bc26" stroke="#d9bc26" stroke-width="1" stroke-linejoin="round"/>
<path d="M333.77,301.45 L346.28,297.77 L347.44,299.15 L334.78,302.89Z" fill="#d1b525" stroke="#d1b525" stroke-width="1" stroke-linejoin="round"/>
<path d="M346.28,297.77 L357.48,293.61 L358.77,294.93 L347.44,299.15Z" fill="#caae24" stroke="#caae24" stroke-width="1" stroke-linejoin="round"/>
<path d="M357.48,293.61 L367.26,289.02 L368.65,290.28 L358.77,294.93Z" fill="#c2a822" stroke="#c2a822" stroke-width="1" stroke-linejoin="round"/>
<path d="M367.26,289.02 L375.52,284.09 L377.00,285.28 L368.65,290.28Z" fill="#bba121" stroke="#bba121" stroke-width="1" stroke-linejoin="round"/>
<path d="M375.52,284.09 L382.19,278.89 L383.73,280.00 L377.00,285.28Z" fill="#b49b20" stroke="#b49b20" stroke-width="1" stroke-linejoin="round"/>
<path d="M382.19,278.89 L387.23,273.48 L388.81,274.52 L383.73,280.00Z" fill="#ad951f" stroke="#ad951f" stroke-width="1" stroke-linejoin="round"/>
<path d="M387.23,273.48 L390.62,267.95 L392.23,268.91 L388.81,274.52Z" fill="#a7901d" stroke="#a7901d" stroke-width="1" stroke-linejoin="round"/>
<path d="M390.62,267.95 L392.39,262.35 L394.00,263.24 L392.23,268.91Z" fill="#a18b1c" stroke="#a18b1c" stroke-width="1" stroke-linejoin="round"/>
<path d="M392.39,262.35 L392.55,256.77 L394.14,257.59 L394.00,263.24Z" fill="#9c871c" stroke="#9c871c" stroke-width="1" stroke-linejoin="round"/>
<path d="M394.14,257.59 L392.71,252.00 L394.17,252.90 L395.63,258.55Z" fill="#817017" stroke="#817017" stroke-width="1" stroke-linejoin="round"/>
<path d="M392.71,252.00 L389.78,246.55 L391.19,247.38 L394.17,252.90Z" fill="#7d6c16" stroke="#7d6c16" stroke-width="1" stroke-linejoin="round"/>
<path d="M389.78,246.55 L385.41,241.28 L386.77,242.05 L391.19,247.38Z" fill="#796915" stroke="#796915" stroke-width="1" stroke-linejoin="round"/>
<path d="M385.41,241.28 L379.71,236.24 L380.99,236.95 L386.77,242.05Z" fill="#776715" stroke="#776715" stroke-width="1" stroke-linejoin="round"/>
<path d="M379.71,236.24 L372.75,231.48 L373.96,232.14 L380.99,236.95Z" fill="#756515" stroke="#756515" stroke-width="1" stroke-linejoin="round"/>
<path d="M372.75,231.48 L364.66,227.03 L365.77,227.64 L373.96,232.14Z" fill="#756515" stroke="#756515" stroke-width="1" stroke-linejoin="round"/>
<path d="M129.79,228.99 L122.74,233.58 L121.46,234.27 L128.59,229.62Z" fill="#ffdf2e" stroke="#ffdf2e" stroke-width="1" stroke-linejoin="round"/>
<path d="M122.74,233.58 L116.92,238.48 L115.57,239.21 L121.46,234.27Z" fill="#ffe52f" stroke="#ffe52f" stroke-width="1" stroke-linejoin="round"/>
<path d="M116.92,238.48 L112.42,243.62 L111.01,244.42 L115.57,239.21Z" fill="#ffeb30" stroke="#ffeb30" stroke-width="1" stroke-linejoin="round"/>
<path d="M112.42,243.62 L109.33,248.98 L107.87,249.85 L111.01,244.42Z" fill="#fff031" stroke="#fff031" stroke-width="1" stroke-linejoin="round"/>
<path d="M109.33,248.98 L107.72,254.50 L106.23,255.43 L107.87,249.85Z" fill="#fff532" stroke="#fff532" stroke-width="1" stroke-linejoin="round"/>
<path d="M107.72,254.50 L107.66,260.13 L106.16,261.13 L106.23,255.43Z" fill="#fff833" stroke="#fff833" stroke-width="1" stroke-linejoin="round"/>
<path d="M107.66,260.13 L109.21,265.80 L107.70,266.87 L106.16,261.13Z" fill="#fffc33" stroke="#fffc33" stroke-width="1" stroke-linejoin="round"/>
<path d="M109.21,265.80 L112.39,271.45 L110.90,272.59 L107.70,266.87Z" fill="#fffe34" stroke="#fffe34" stroke-width="1" stroke-linejoin="round"/>
<path d="M112.39,271.45 L117.22,277.01 L115.77,278.22 L110.90,272.59Z" fill="#ffff34" stroke="#ffff34" stroke-width="1" stroke-linejoin="round"/>
<path d="M117.22,277.01 L123.70,282.41 L122.30,283.69 L115.77,278.22Z" fill="#ffff34" stroke="#ffff34" stroke-width="1" stroke-linejoin="round"/>
<path d="M123.70,282.41 L131.77,287.57 L130.45,288.92 L122.30,283.69Z" fill="#ffff34" stroke="#ffff34" stroke-width="1" stroke-linejoin="round"/>
<path d="M131.77,287.57 L141.40,292.42 L140.17,293.84 L130.45,288.92Z" fill="#fffe34" stroke="#fffe34" stroke-width="1" stroke-linejoin="round"/>
<path d="M141.40,292.42 L152.48,296.89 L151.37,298.37 L140.17,293.84Z" fill="#fffc34" stroke="#fffc34" stroke-width="1" stroke-linejoin="round"/>
<path d="M152.48,296.89 L164.91,300.90 L163.93,302.44 L151.37,298.37Z" fill="#fff933" stroke="#fff933" stroke-width="1" stroke-linejoin="round"/>
<path d="M164.91,300.90 L178.52,304.39 L177.69,305.98 L163.93,302.44Z" fill="#fff632" stroke="#fff632" stroke-width="1" stroke-linejoin="round"/>
<path d="M178.52,304.39 L193.17,307.31 L192.50,308.94 L177.69,305.98Z" fill="#fff231" stroke="#fff231" stroke-width="1" stroke-linejoin="round"/>
<path d="M193.17,307.31 L208.64,309.59 L208.15,311.25 L192.50,308.94Z" fill="#ffed30" stroke="#ffed30" stroke-width="1" stroke-linejoin="round"/>
<path d="M208.64,309.59 L224.73,311.21 L224.42,312.89 L208.15,311.25Z" fill="#ffe72f" stroke="#ffe72f" stroke-width="1" stroke-linejoin="round"/>
<path d="M224.73,311.21 L241.20,312.12 L241.09,313.82 L224.42,312.89Z" fill="#ffe12e" stroke="#ffe12e" stroke-width="1" stroke-linejoin="round"/>
<path d="M241.20,312.12 L257.82,312.32 L257.90,314.02 L241.09,313.82Z" fill="#fcda2d" stroke="#fcda2d" stroke-width="1" stroke-linejoin="round"/>
<path d="M257.82,312.32 L274.35,311.80 L274.61,313.49 L257.90,314.02Z" fill="#f4d32b" stroke="#f4d32b" stroke-width="1" stroke-linejoin="round"/>
<path d="M274.35,311.80 L290.53,310.57 L290.98,312.24 L274.61,313.49Z" fill="#ebcb2a" stroke="#ebcb2a" stroke-width="1" stroke-linejoin="round"/>
<path d="M290.53,310.57 L306.14,308.65 L306.77,310.29 L290.98,312.24Z" fill="#e2c328" stroke="#e2c328" stroke-width="1" stroke-linejoin="round"/>
<path d="M306.14,308.65 L320.96,306.07 L321.75,307.68 L306.77,310.29Z" fill="#d9bb26" stroke="#d9bb26" stroke-width="1" stroke-linejoin="round"/>
<path d="M320.96,306.07 L334.78,302.89 L335.73,304.46 L321.75,307.68Z" fill="#d0b325" stroke="#d0b325" stroke-width="1" stroke-linejoin="round"/>
<path d="M334.78,302.89 L347.44,299.15 L348.52,300.67 L335.73,304.46Z" fill="#c6ab23" stroke="#c6ab23" stroke-width="1" stroke-linejoin="round"/>
<path d="M347.44,299.15 L358.77,294.93 L359.97,296.38 L348.52,300.67Z" fill="#bda321" stroke="#bda321" stroke-width="1" stroke-linejoin="round"/>
<path d="M358.77,294.93 L368.65,290.28 L369.96,291.67 L359.97,296.38Z" fill="#b49b20" stroke="#b49b20" stroke-width="1" stroke-linejoin="round"/>
<path d="M368.65,290.28 L377.00,285.28 L378.38,286.60 L369.96,291.67Z" fill="#ab941e" stroke="#ab941e" stroke-width="1" stroke-linejoin="round"/>
<path d="M377.00,285.28 L383.73,280.00 L385.17,281.25 L378.38,286.60Z" fill="#a38c1d" stroke="#a38c1d" stroke-width="1" stroke-linejoin="round"/>
<path d="M383.73,280.00 L388.81,274.52 L390.29,275.70 L385.17,281.25Z" fill="#9b861b" stroke="#9b861b" stroke-width="1" stroke-linejoin="round"/>
<path d="M388.81,274.52 L392.23,268.91 L393.73,270.02 L390.29,275.70Z" fill="#937f1a" stroke="#937f1a" stroke-width="1" stroke-linejoin="round"/>
<path d="M392.23,268.91 L394.00,263.24 L395.50,264.28 L393.73,270.02Z" fill="#8d7919" stroke="#8d7919" stroke-width="1" stroke-linejoin="round"/>
<path d="M394.00,263.24 L394.14,257.59 L395.63,258.55 L395.50,264.28Z" fill="#867418" stroke="#867418" stroke-width="1" stroke-linejoin="round"/>
<path d="M395.63,258.55 L394.17,252.90 L395.52,253.94 L397.00,259.66Z" fill="#6a5b13" stroke="#6a5b13" stroke-width="1" stroke-linejoin="round"/>
<path d="M394.17,252.90 L391.19,247.38 L392.49,248.36 L395.52,253.94Z" fill="#655712" stroke="#655712" stroke-width="1" stroke-linejoin="round"/>
<path d="M391.19,247.38 L386.77,242.05 L388.01,242.97 L392.49,248.36Z" fill="#615311" stroke="#615311" stroke-width="1" stroke-linejoin="round"/>
<path d="M386.77,242.05 L380.99,236.95 L382.17,237.82 L388.01,242.97Z" fill="#5e5111" stroke="#5e5111" stroke-width="1" stroke-linejoin="round"/>
<path d="M121.46,234.27 L115.57,239.21 L114.32,240.10 L120.28,235.10Z" fill="#ffe32e" stroke="#ffe32e" stroke-width="1" stroke-linejoin="round"/>
<path d="M115.57,239.21 L111.01,244.42 L109.71,245.37 L114.32,240.10Z" fill="#ffea30" stroke="#ffea30" stroke-width="1" stroke-linejoin="round"/>
<path d="M111.01,244.42 L107.87,249.85 L106.53,250.85 L109.71,245.37Z" fill="#fff031" stroke="#fff031" stroke-width="1" stroke-linejoin="round"/>
<path d="M107.87,249.85 L106.23,255.43 L104.86,256.50 L106.53,250.85Z" fill="#fff532" stroke="#fff532" stroke-width="1" stroke-linejoin="round"/>
<path d="M106.23,255.43 L106.16,261.13 L104.77,262.26 L104.86,256.50Z" fill="#fff933" stroke="#fff933" stroke-width="1" stroke-linejoin="round"/>
<path d="M106.16,261.13 L107.70,266.87 L106.31,268.07 L104.77,262.26Z" fill="#fffd34" stroke="#fffd34" stroke-width="1" stroke-linejoin="round"/>
<path d="M107.70,266.87 L110.90,272.59 L109.53,273.86 L106.31,268.07Z" fill="#ffff34" stroke="#ffff34" stroke-width="1" stroke-linejoin="round"/>
<path d="M110.90,272.59 L115.77,278.22 L114.43,279.56 L109.53,273.86Z" fill="#ffff35" stroke="#ffff35" stroke-width="1" stroke-linejoin="round"/>
<path d="M115.77,278.22 L122.30,283.69 L121.01,285.10 L114.43,279.56Z" fill="#ffff35" stroke="#ffff35" stroke-width="1" stroke-linejoin="round"/>
<path d="M122.30,283.69 L130.45,288.92 L129.23,290.40 L121.01,285.10Z" fill="#ffff35" stroke="#ffff35" stroke-width="1" stroke-linejoin="round"/>
<path d="M130.45,288.92 L140.17,293.84 L139.04,295.38 L129.23,290.40Z" fill="#ffff34" stroke="#ffff34" stroke-width="1" stroke-linejoin="round"/>
<path d="M140.17,293.84 L151.37,298.37 L150.34,299.97 L139.04,295.38Z" fill="#fffe34" stroke="#fffe34" stroke-width="1" stroke-linejoin="round"/>
<path d="M151.37,298.37 L163.93,302.44 L163.02,304.09 L150.34,299.97Z" fill="#fffb33" stroke="#fffb33" stroke-width="1" stroke-linejoin="round"/>
<path d="M163.93,302.44 L177.69,305.98 L176.93,307.68 L163.02,304.09Z" fill="#fff632" stroke="#fff632" stroke-width="1" stroke-linejoin="round"/>
<path d="M177.69,305.98 L192.50,308.94 L191.88,310.68 L176.93,307.68Z" fill="#fff231" stroke="#fff231" stroke-width="1" stroke-linejoin="round"/>
<path d="M192.50,308.94 L208.15,311.25 L207.69,313.03 L191.88,310.68Z" fill="#ffec30" stroke="#ffec30" stroke-width="1" stroke-linejoin="round"/>
<path d="M208.15,311.25 L224.42,312.89 L224.14,314.69 L207.69,313.03Z" fill="#ffe52f" stroke="#ffe52f" stroke-width="1" stroke-linejoin="round"/>
<path d="M224.42,312.89 L241.09,313.82 L240.98,315.63 L224.14,314.69Z" fill="#ffde2d" stroke="#ffde2d" stroke-width="1" stroke-linejoin="round"/>
<path d="M241.09,313.82 L257.90,314.02 L257.96,315.83 L240.98,315.63Z" fill="#f8d62c" stroke="#f8d62c" stroke-width="1" stroke-linejoin="round"/>
<path d="M257.90,314.02 L274.61,313.49 L274.85,315.29 L257.96,315.83Z" fill="#eece2a" stroke="#eece2a" stroke-width="1" stroke-linejoin="round"/>
<path d="M274.61,313.49 L290.98,312.24 L291.39,314.03 L274.85,315.29Z" fill="#e4c528" stroke="#e4c528" stroke-width="1" stroke-linejoin="round"/>
<path d="M290.98,312.24 L306.77,310.29 L307.34,312.05 L291.39,314.03Z" fill="#dabc27" stroke="#dabc27" stroke-width="1" stroke-linejoin="round"/>
<path d="M306.77,310.29 L321.75,307.68 L322.48,309.41 L307.34,312.05Z" fill="#cfb325" stroke="#cfb325" stroke-width="1" stroke-linejoin="round"/>
<path d="M321.75,307.68 L335.73,304.46 L336.60,306.13 L322.48,309.41Z" fill="#c4aa23" stroke="#c4aa23" stroke-width="1" stroke-linejoin="round"/>
<path d="M335.73,304.46 L348.52,300.67 L349.52,302.30 L336.60,306.13Z" fill="#baa021" stroke="#baa021" stroke-width="1" stroke-linejoin="round"/>
<path d="M348.52,300.67 L359.97,296.38 L361.08,297.96 L349.52,302.30Z" fill="#af971f" stroke="#af971f" stroke-width="1" stroke-linejoin="round"/>
<path d="M359.97,296.38 L369.96,291.67 L371.15,293.18 L361.08,297.96Z" fill="#a48e1d" stroke="#a48e1d" stroke-width="1" stroke-linejoin="round"/>
<path d="M369.96,291.67 L378.38,286.60 L379.65,288.05 L371.15,293.18Z" fill="#9a851b" stroke="#9a851b" stroke-width="1" stroke-linejoin="round"/>
<path d="M378.38,286.60 L385.17,281.25 L386.50,282.63 L379.65,288.05Z" fill="#907d1a" stroke="#907d1a" stroke-width="1" stroke-linejoin="round"/>
<path d="M385.17,281.25 L390.29,275.70 L391.66,277.01 L386.50,282.63Z" fill="#877518" stroke="#877518" stroke-width="1" stroke-linejoin="round"/>
<path d="M390.29,275.70 L393.73,270.02 L395.12,271.26 L391.66,277.01Z" fill="#7f6d16" stroke="#7f6d16" stroke-width="1" stroke-linejoin="round"/>
<path d="M393.73,270.02 L395.50,264.28 L396.89,265.46 L395.12,271.26Z" fill="#776715" stroke="#776715" stroke-width="1" stroke-linejoin="round"/>
<path d="M395.50,264.28 L395.63,258.55 L397.00,259.66 L396.89,265.46Z" fill="#706114" stroke="#706114" stroke-width="1" stroke-linejoin="round"/>
<path d="M397.00,259.66 L395.52,253.94 L396.72,255.11 L398.24,260.89Z" fill="#52470e" stroke="#52470e" stroke-width="1" stroke-linejoin="round"/>
<path d="M395.52,253.94 L392.49,248.36 L393.66,249.47 L396.72,255.11Z" fill="#4c420d" stroke="#4c420d" stroke-width="1" stroke-linejoin="round"/>
<path d="M392.49,248.36 L388.01,242.97 L389.13,244.02 L393.66,249.47Z" fill="#473e0d" stroke="#473e0d" stroke-width="1" stroke-linejoin="round"/>
<path d="M114.32,240.10 L109.71,245.37 L108.53,246.45 L113.20,241.13Z" fill="#ffe72f" stroke="#ffe72f" stroke-width="1" stroke-linejoin="round"/>
<path d="M109.71,245.37 L106.53,250.85 L105.31,251.99 L108.53,246.45Z" fill="#ffed31" stroke="#ffed31" stroke-width="1" stroke-linejoin="round"/>
<path d="M106.53,250.85 L104.86,256.50 L103.61,257.70 L105.31,251.99Z" fill="#fff332" stroke="#fff332" stroke-width="1" stroke-linejoin="round"/>
<path d="M104.86,256.50 L104.77,262.26 L103.51,263.53 L103.61,257.70Z" fill="#fff833" stroke="#fff833" stroke-width="1" stroke-linejoin="round"/>
<path d="M104.77,262.26 L106.31,268.07 L105.05,269.40 L103.51,263.53Z" fill="#fffc34" stroke="#fffc34" stroke-width="1" stroke-linejoin="round"/>
<path d="M106.31,268.07 L109.53,273.86 L108.28,275.26 L105.05,269.40Z" fill="#ffff34" stroke="#ffff34" stroke-width="1" stroke-linejoin="round"/>
<path d="M109.53,273.86 L114.43,279.56 L113.22,281.02 L108.28,275.26Z" fill="#ffff35" stroke="#ffff35" stroke-width="1" stroke-linejoin="round"/>
<path d="M114.43,279.56 L121.01,285.10 L119.84,286.62 L113.22,281.02Z" fill="#ffff35" stroke="#ffff35" stroke-width="1" stroke-linejoin="round"/>
<path d="M121.01,285.10 L129.23,290.40 L128.13,291.98 L119.84,286.62Z" fill="#ffff35" stroke="#ffff35" stroke-width="1" stroke-linejoin="round"/>
<path d="M129.23,290.40 L139.04,295.38 L138.02,297.02 L128.13,291.98Z" fill="#ffff34" stroke="#ffff34" stroke-width="1" stroke-linejoin="round"/>
<path d="M139.04,295.38 L150.34,299.97 L149.42,301.67 L138.02,297.02Z" fill="#fffd34" stroke="#fffd34" stroke-width="1" stroke-linejoin="round"/>
<path d="M150.34,299.97 L163.02,304.09 L162.20,305.84 L149.42,301.67Z" fill="#fff933" stroke="#fff933" stroke-width="1" stroke-linejoin="round"/>
<path d="M163.02,304.09 L176.93,307.68 L176.23,309.47 L162.20,305.84Z" fill="#fff532" stroke="#fff532" stroke-width="1" stroke-linejoin="round"/>
<path d="M176.93,307.68 L191.88,310.68 L191.33,312.51 L176.23,309.47Z" fill="#ffef31" stroke="#ffef31" stroke-width="1" stroke-linejoin="round"/>
<path d="M191.88,310.68 L207.69,313.03 L207.28,314.88 L191.33,312.51Z" fill="#ffe930" stroke="#ffe930" stroke-width="1" stroke-linejoin="round"/>
<path d="M207.69,313.03 L224.14,314.69 L223.88,316.57 L207.28,314.88Z" fill="#ffe12e" stroke="#ffe12e" stroke-width="1" stroke-linejoin="round"/>
<path d="M224.14,314.69 L240.98,315.63 L240.87,317.52 L223.88,316.57Z" fill="#fcd92c" stroke="#fcd92c" stroke-width="1" stroke-linejoin="round"/>
<path d="M240.98,315.63 L257.96,315.83 L258.02,317.72 L240.87,317.52Z" fill="#f2d12b" stroke="#f2d12b" stroke-width="1" stroke-linejoin="round"/>
<path d="M257.96,315.83 L274.85,315.29 L275.07,317.18 L258.02,317.72Z" fill="#e7c729" stroke="#e7c729" stroke-width="1" stroke-linejoin="round"/>
<path d="M274.85,315.29 L291.39,314.03 L291.76,315.90 L275.07,317.18Z" fill="#dbbd27" stroke="#dbbd27" stroke-width="1" stroke-linejoin="round"/>
<path d="M291.39,314.03 L307.34,312.05 L307.86,313.90 L291.76,315.90Z" fill="#d0b325" stroke="#d0b325" stroke-width="1" stroke-linejoin="round"/>
<path d="M307.34,312.05 L322.48,309.41 L323.14,311.22 L307.86,313.90Z" fill="#c4a923" stroke="#c4a923" stroke-width="1" stroke-linejoin="round"/>
<path d="M322.48,309.41 L336.60,306.13 L337.38,307.91 L323.14,311.22Z" fill="#b89e20" stroke="#b89e20" stroke-width="1" stroke-linejoin="round"/>
<path d="M336.60,306.13 L349.52,302.30 L350.41,304.02 L337.38,307.91Z" fill="#ab941e" stroke="#ab941e" stroke-width="1" stroke-linejoin="round"/>
<path d="M349.52,302.30 L361.08,297.96 L362.07,299.63 L350.41,304.02Z" fill="#9f8a1c" stroke="#9f8a1c" stroke-width="1" stroke-linejoin="round"/>
<path d="M361.08,297.96 L371.15,293.18 L372.23,294.80 L362.07,299.63Z" fill="#937f1a" stroke="#937f1a" stroke-width="1" stroke-linejoin="round"/>
<path d="M371.15,293.18 L379.65,288.05 L380.79,289.60 L372.23,294.80Z" fill="#887518" stroke="#887518" stroke-width="1" stroke-linejoin="round"/>
<path d="M379.65,288.05 L386.50,282.63 L387.69,284.13 L380.79,289.60Z" fill="#7d6c16" stroke="#7d6c16" stroke-width="1" stroke-linejoin="round"/>
<path d="M386.50,282.63 L391.66,277.01 L392.88,278.44 L387.69,284.13Z" fill="#736314" stroke="#736314" stroke-width="1" stroke-linejoin="round"/>
<path d="M391.66,277.01 L395.12,271.26 L396.36,272.63 L392.88,278.44Z" fill="#695b13" stroke="#695b13" stroke-width="1" stroke-linejoin="round"/>
<path d="M395.12,271.26 L396.89,265.46 L398.13,266.75 L396.36,272.63Z" fill="#605311" stroke="#605311" stroke-width="1" stroke-linejoin="round"/>
<path d="M396.89,265.46 L397.00,259.66 L398.24,260.89 L398.13,266.75Z" fill="#584c10" stroke="#584c10" stroke-width="1" stroke-linejoin="round"/>
<path d="M398.24,260.89 L396.72,255.11 L397.78,256.40 L399.32,262.24Z" fill="#39310a" stroke="#39310a" stroke-width="1" stroke-linejoin="round"/>
<path d="M396.72,255.11 L393.66,249.47 L394.69,250.71 L397.78,256.40Z" fill="#332c09" stroke="#332c09" stroke-width="1" stroke-linejoin="round"/>
<path d="M393.66,249.47 L389.13,244.02 L390.12,245.21 L394.69,250.71Z" fill="#362e09" stroke="#362e09" stroke-width="1" stroke-linejoin="round"/>
<path d="M108.53,246.45 L105.31,251.99 L104.24,253.25 L107.50,247.66Z" fill="#ffe930" stroke="#ffe930" stroke-width="1" stroke-linejoin="round"/>
<path d="M105.31,251.99 L103.61,257.70 L102.52,259.02 L104.24,253.25Z" fill="#ffef31" stroke="#ffef31" stroke-width="1" stroke-linejoin="round"/>
<path d="M103.61,257.70 L103.51,263.53 L102.40,264.90 L102.52,259.02Z" fill="#fff532" stroke="#fff532" stroke-width="1" stroke-linejoin="round"/>
<path d="M103.51,263.53 L105.05,269.40 L103.95,270.83 L102.40,264.90Z" fill="#fff933" stroke="#fff933" stroke-width="1" stroke-linejoin="round"/>
<path d="M105.05,269.40 L108.28,275.26 L107.19,276.75 L103.95,270.83Z" fill="#fffc34" stroke="#fffc34" stroke-width="1" stroke-linejoin="round"/>
<path d="M108.28,275.26 L113.22,281.02 L112.15,282.57 L107.19,276.75Z" fill="#fffe34" stroke="#fffe34" stroke-width="1" stroke-linejoin="round"/>
<path d="M113.22,281.02 L119.84,286.62 L118.81,288.23 L112.15,282.57Z" fill="#ffff34" stroke="#ffff34" stroke-width="1" stroke-linejoin="round"/>
<path d="M119.84,286.62 L128.13,291.98 L127.15,293.65 L118.81,288.23Z" fill="#ffff34" stroke="#ffff34" stroke-width="1" stroke-linejoin="round"/>
<path d="M128.13,291.98 L138.02,297.02 L137.11,298.75 L127.15,293.65Z" fill="#fffd34" stroke="#fffd34" stroke-width="1" stroke-linejoin="round"/>
<path d="M138.02,297.02 L149.42,301.67 L148.59,303.44 L137.11,298.75Z" fill="#fffa33" stroke="#fffa33" stroke-width="1" stroke-linejoin="round"/>
<path d="M149.42,301.67 L162.20,305.84 L161.48,307.66 L148.59,303.44Z" fill="#fff632" stroke="#fff632" stroke-width="1" stroke-linejoin="round"/>
<path d="M162.20,305.84 L176.23,309.47 L175.62,311.34 L161.48,307.66Z" fill="#fff131" stroke="#fff131" stroke-width="1" stroke-linejoin="round"/>
<path d="M176.23,309.47 L191.33,312.51 L190.83,314.41 L175.62,311.34Z" fill="#ffeb30" stroke="#ffeb30" stroke-width="1" stroke-linejoin="round"/>
<path d="M191.33,312.51 L207.28,314.88 L206.91,316.81 L190.83,314.41Z" fill="#ffe42f" stroke="#ffe42f" stroke-width="1" stroke-linejoin="round"/>
<path d="M207.28,314.88 L223.88,316.57 L223.64,318.51 L206.91,316.81Z" fill="#fedc2d" stroke="#fedc2d" stroke-width="1" stroke-linejoin="round"/>
<path d="M223.88,316.57 L240.87,317.52 L240.78,319.48 L223.64,318.51Z" fill="#f4d32b" stroke="#f4d32b" stroke-width="1" stroke-linejoin="round"/>
<path d="M240.87,317.52 L258.02,317.72 L258.07,319.68 L240.78,319.48Z" fill="#e9c929" stroke="#e9c929" stroke-width="1" stroke-linejoin="round"/>
<path d="M258.02,317.72 L275.07,317.18 L275.26,319.13 L258.07,319.68Z" fill="#ddbf27" stroke="#ddbf27" stroke-width="1" stroke-linejoin="round"/>
<path d="M275.07,317.18 L291.76,315.90 L292.09,317.84 L275.26,319.13Z" fill="#d1b425" stroke="#d1b425" stroke-width="1" stroke-linejoin="round"/>
<path d="M291.76,315.90 L307.86,313.90 L308.32,315.81 L292.09,317.84Z" fill="#c4a923" stroke="#c4a923" stroke-width="1" stroke-linejoin="round"/>
<path d="M307.86,313.90 L323.14,311.22 L323.71,313.10 L308.32,315.81Z" fill="#b79e20" stroke="#b79e20" stroke-width="1" stroke-linejoin="round"/>
<path d="M323.14,311.22 L337.38,307.91 L338.07,309.76 L323.71,313.10Z" fill="#a9921e" stroke="#a9921e" stroke-width="1" stroke-linejoin="round"/>
<path d="M337.38,307.91 L350.41,304.02 L351.20,305.83 L338.07,309.76Z" fill="#9c871c" stroke="#9c871c" stroke-width="1" stroke-linejoin="round"/>
<path d="M350.41,304.02 L362.07,299.63 L362.95,301.38 L351.20,305.83Z" fill="#8f7b19" stroke="#8f7b19" stroke-width="1" stroke-linejoin="round"/>
<path d="M362.07,299.63 L372.23,294.80 L373.18,296.50 L362.95,301.38Z" fill="#827017" stroke="#827017" stroke-width="1" stroke-linejoin="round"/>
<path d="M372.23,294.80 L380.79,289.60 L381.80,291.25 L373.18,296.50Z" fill="#756515" stroke="#756515" stroke-width="1" stroke-linejoin="round"/>
<path d="M380.79,289.60 L387.69,284.13 L388.74,285.71 L381.80,291.25Z" fill="#695b13" stroke="#695b13" stroke-width="1" stroke-linejoin="round"/>
<path d="M387.69,284.13 L392.88,278.44 L393.96,279.97 L388.74,285.71Z" fill="#5e5111" stroke="#5e5111" stroke-width="1" stroke-linejoin="round"/>
<path d="M392.88,278.44 L396.36,272.63 L397.45,274.09 L393.96,279.97Z" fill="#53480f" stroke="#53480f" stroke-width="1" stroke-linejoin="round"/>
<path d="M396.36,272.63 L398.13,266.75 L399.23,268.16 L397.45,274.09Z" fill="#493f0d" stroke="#493f0d" stroke-width="1" stroke-linejoin="round"/>
<path d="M398.13,266.75 L398.24,260.89 L399.32,262.24 L399.23,268.16Z" fill="#41380b" stroke="#41380b" stroke-width="1" stroke-linejoin="round"/>
<path d="M399.32,262.24 L397.78,256.40 L398.68,257.80 L400.24,263.69Z" fill="#433a0c" stroke="#433a0c" stroke-width="1" stroke-linejoin="round"/>
<path d="M397.78,256.40 L394.69,250.71 L395.56,252.05 L398.68,257.80Z" fill="#4a400d" stroke="#4a400d" stroke-width="1" stroke-linejoin="round"/>
<path d="M107.50,247.66 L104.24,253.25 L103.32,254.62 L106.61,248.97Z" fill="#ffe22e" stroke="#ffe22e" stroke-width="1" stroke-linejoin="round"/>
<path d="M104.24,253.25 L102.52,259.02 L101.58,260.43 L103.32,254.62Z" fill="#ffe930" stroke="#ffe930" stroke-width="1" stroke-linejoin="round"/>
<path d="M102.52,259.02 L102.40,264.90 L101.45,266.37 L101.58,260.43Z" fill="#ffef31" stroke="#ffef31" stroke-width="1" stroke-linejoin="round"/>
<path d="M102.40,264.90 L103.95,270.83 L103.00,272.36 L101.45,266.37Z" fill="#fff432" stroke="#fff432" stroke-width="1" stroke-linejoin="round"/>
<path d="M103.95,270.83 L107.19,276.75 L106.25,278.33 L103.00,272.36Z" fill="#fff733" stroke="#fff733" stroke-width="1" stroke-linejoin="round"/>
<path d="M107.19,276.75 L112.15,282.57 L111.23,284.21 L106.25,278.33Z" fill="#fff933" stroke="#fff933" stroke-width="1" stroke-linejoin="round"/>
<path d="M112.15,282.57 L118.81,288.23 L117.93,289.92 L111.23,284.21Z" fill="#fffa33" stroke="#fffa33" stroke-width="1" stroke-linejoin="round"/>
<path d="M118.81,288.23 L127.15,293.65 L126.32,295.39 L117.93,289.92Z" fill="#fffa33" stroke="#fffa33" stroke-width="1" stroke-linejoin="round"/>
<path d="M127.15,293.65 L137.11,298.75 L136.34,300.54 L126.32,295.39Z" fill="#fff833" stroke="#fff833" stroke-width="1" stroke-linejoin="round"/>
<path d="M137.11,298.75 L148.59,303.44 L147.89,305.28 L136.34,300.54Z" fill="#fff532" stroke="#fff532" stroke-width="1" stroke-linejoin="round"/>
<path d="M148.59,303.44 L161.48,307.66 L160.86,309.54 L147.89,305.28Z" fill="#fff031" stroke="#fff031" stroke-width="1" stroke-linejoin="round"/>
<path d="M161.48,307.66 L175.62,311.34 L175.09,313.26 L160.86,309.54Z" fill="#ffeb30" stroke="#ffeb30" stroke-width="1" stroke-linejoin="round"/>
<path d="M175.62,311.34 L190.83,314.41 L190.40,316.35 L175.09,313.26Z" fill="#ffe42f" stroke="#ffe42f" stroke-width="1" stroke-linejoin="round"/>
<path d="M190.83,314.41 L206.91,316.81 L206.60,318.78 L190.40,316.35Z" fill="#ffdd2d" stroke="#ffdd2d" stroke-width="1" stroke-linejoin="round"/>
<path d="M206.91,316.81 L223.64,318.51 L223.44,320.50 L206.60,318.78Z" fill="#f5d42b" stroke="#f5d42b" stroke-width="1" stroke-linejoin="round"/>
<path d="M223.64,318.51 L240.78,319.48 L240.70,321.48 L223.44,320.50Z" fill="#eaca29" stroke="#eaca29" stroke-width="1" stroke-linejoin="round"/>
<path d="M240.78,319.48 L258.07,319.68 L258.11,321.69 L240.70,321.48Z" fill="#dec027" stroke="#dec027" stroke-width="1" stroke-linejoin="round"/>
<path d="M258.07,319.68 L275.26,319.13 L275.41,321.13 L258.11,321.69Z" fill="#d2b525" stroke="#d2b525" stroke-width="1" stroke-linejoin="round"/>
<path d="M275.26,319.13 L292.09,317.84 L292.36,319.82 L275.41,321.13Z" fill="#c4a923" stroke="#c4a923" stroke-width="1" stroke-linejoin="round"/>
<path d="M292.09,317.84 L308.32,315.81 L308.70,317.78 L292.36,319.82Z" fill="#b69d20" stroke="#b69d20" stroke-width="1" stroke-linejoin="round"/>
<path d="M308.32,315.81 L323.71,313.10 L324.20,315.04 L308.70,317.78Z" fill="#a8911e" stroke="#a8911e" stroke-width="1" stroke-linejoin="round"/>
<path d="M323.71,313.10 L338.07,309.76 L338.66,311.66 L324.20,315.04Z" fill="#9a851b" stroke="#9a851b" stroke-width="1" stroke-linejoin="round"/>
<path d="M338.07,309.76 L351.20,305.83 L351.87,307.69 L338.66,311.66Z" fill="#8b7819" stroke="#8b7819" stroke-width="1" stroke-linejoin="round"/>
<path d="M351.20,305.83 L362.95,301.38 L363.69,303.20 L351.87,307.69Z" fill="#7d6c16" stroke="#7d6c16" stroke-width="1" stroke-linejoin="round"/>
<path d="M362.95,301.38 L373.18,296.50 L373.99,298.27 L363.69,303.20Z" fill="#6f6014" stroke="#6f6014" stroke-width="1" stroke-linejoin="round"/>
<path d="M373.18,296.50 L381.80,291.25 L382.66,292.96 L373.99,298.27Z" fill="#615411" stroke="#615411" stroke-width="1" stroke-linejoin="round"/>
<path d="M381.80,291.25 L388.74,285.71 L389.63,287.37 L382.66,292.96Z" fill="#54490f" stroke="#54490f" stroke-width="1" stroke-linejoin="round"/>
<path d="M388.74,285.71 L393.96,279.97 L394.88,281.58 L389.63,287.37Z" fill="#483e0d" stroke="#483e0d" stroke-width="1" stroke-linejoin="round"/>
<path d="M393.96,279.97 L397.45,274.09 L398.38,275.64 L394.88,281.58Z" fill="#3c340b" stroke="#3c340b" stroke-width="1" stroke-linejoin="round"/>
<path d="M397.45,274.09 L399.23,268.16 L400.16,269.66 L398.38,275.64Z" fill="#322b09" stroke="#322b09" stroke-width="1" stroke-linejoin="round"/>
<path d="M399.23,268.16 L399.32,262.24 L400.24,263.69 L400.16,269.66Z" fill="#3b330a" stroke="#3b330a" stroke-width="1" stroke-linejoin="round"/>
<path d="M400.24,263.69 L398.68,257.80 L399.42,259.28 L400.99,265.21Z" fill="#5b4f10" stroke="#5b4f10" stroke-width="1" stroke-linejoin="round"/>
<path d="M103.32,254.62 L101.58,260.43 L100.81,261.93 L102.57,256.07Z" fill="#ffe12e" stroke="#ffe12e" stroke-width="1" stroke-linejoin="round"/>
<path d="M101.58,260.43 L101.45,266.37 L100.67,267.92 L100.81,261.93Z" fill="#ffe72f" stroke="#ffe72f" stroke-width="1" stroke-linejoin="round"/>
<path d="M101.45,266.37 L103.00,272.36 L102.22,273.95 L100.67,267.92Z" fill="#ffec30" stroke="#ffec30" stroke-width="1" stroke-linejoin="round"/>
<path d="M103.00,272.36 L106.25,278.33 L105.48,279.97 L102.22,273.95Z" fill="#fff031" stroke="#fff031" stroke-width="1" stroke-linejoin="round"/>
<path d="M106.25,278.33 L111.23,284.21 L110.48,285.90 L105.48,279.97Z" fill="#fff232" stroke="#fff232" stroke-width="1" stroke-linejoin="round"/>
<path d="M111.23,284.21 L117.93,289.92 L117.21,291.67 L110.48,285.90Z" fill="#fff332" stroke="#fff332" stroke-width="1" stroke-linejoin="round"/>
<path d="M117.93,289.92 L126.32,295.39 L125.63,297.18 L117.21,291.67Z" fill="#fff232" stroke="#fff232" stroke-width="1" stroke-linejoin="round"/>
<path d="M126.32,295.39 L136.34,300.54 L135.70,302.37 L125.63,297.18Z" fill="#fff131" stroke="#fff131" stroke-width="1" stroke-linejoin="round"/>
<path d="M136.34,300.54 L147.89,305.28 L147.31,307.16 L135.70,302.37Z" fill="#ffed31" stroke="#ffed31" stroke-width="1" stroke-linejoin="round"/>
<path d="M147.89,305.28 L160.86,309.54 L160.34,311.46 L147.31,307.16Z" fill="#ffe930" stroke="#ffe930" stroke-width="1" stroke-linejoin="round"/>
<path d="M160.86,309.54 L175.09,313.26 L174.65,315.20 L160.34,311.46Z" fill="#ffe32e" stroke="#ffe32e" stroke-width="1" stroke-linejoin="round"/>
<path d="M175.09,313.26 L190.40,316.35 L190.05,318.33 L174.65,315.20Z" fill="#ffdc2d" stroke="#ffdc2d" stroke-width="1" stroke-linejoin="round"/>
<path d="M190.40,316.35 L206.60,318.78 L206.33,320.78 L190.05,318.33Z" fill="#f5d42b" stroke="#f5d42b" stroke-width="1" stroke-linejoin="round"/>
<path d="M206.60,318.78 L223.44,320.50 L223.27,322.51 L206.33,320.78Z" fill="#eaca29" stroke="#eaca29" stroke-width="1" stroke-linejoin="round"/>
<path d="M223.44,320.50 L240.70,321.48 L240.63,323.50 L223.27,322.51Z" fill="#dfc027" stroke="#dfc027" stroke-width="1" stroke-linejoin="round"/>
<path d="M240.70,321.48 L258.11,321.69 L258.13,323.71 L240.63,323.50Z" fill="#d2b525" stroke="#d2b525" stroke-width="1" stroke-linejoin="round"/>
<path d="M258.11,321.69 L275.41,321.13 L275.54,323.15 L258.13,323.71Z" fill="#c4a923" stroke="#c4a923" stroke-width="1" stroke-linejoin="round"/>
<path d="M275.41,321.13 L292.36,319.82 L292.58,321.82 L275.54,323.15Z" fill="#b69d20" stroke="#b69d20" stroke-width="1" stroke-linejoin="round"/>
<path d="M292.36,319.82 L308.70,317.78 L309.01,319.76 L292.58,321.82Z" fill="#a7901e" stroke="#a7901e" stroke-width="1" stroke-linejoin="round"/>
<path d="M308.70,317.78 L324.20,315.04 L324.60,317.00 L309.01,319.76Z" fill="#98831b" stroke="#98831b" stroke-width="1" stroke-linejoin="round"/>
<path d="M324.20,315.04 L338.66,311.66 L339.13,313.59 L324.60,317.00Z" fill="#897618" stroke="#897618" stroke-width="1" stroke-linejoin="round"/>
<path d="M338.66,311.66 L351.87,307.69 L352.42,309.58 L339.13,313.59Z" fill="#796915" stroke="#796915" stroke-width="1" stroke-linejoin="round"/>
<path d="M351.87,307.69 L363.69,303.20 L364.30,305.06 L352.42,309.58Z" fill="#6a5c13" stroke="#6a5c13" stroke-width="1" stroke-linejoin="round"/>
<path d="M363.69,303.20 L373.99,298.27 L374.64,300.08 L364.30,305.06Z" fill="#5b4f10" stroke="#5b4f10" stroke-width="1" stroke-linejoin="round"/>
<path d="M373.99,298.27 L382.66,292.96 L383.35,294.73 L374.64,300.08Z" fill="#4d420e" stroke="#4d420e" stroke-width="1" stroke-linejoin="round"/>
<path d="M382.66,292.96 L389.63,287.37 L390.36,289.10 L383.35,294.73Z" fill="#3f360b" stroke="#3f360b" stroke-width="1" stroke-linejoin="round"/>
<path d="M389.63,287.37 L394.88,281.58 L395.63,283.25 L390.36,289.10Z" fill="#322b09" stroke="#322b09" stroke-width="1" stroke-linejoin="round"/>
<path d="M394.88,281.58 L398.38,275.64 L399.14,277.27 L395.63,283.25Z" fill="#3e350b" stroke="#3e350b" stroke-width="1" stroke-linejoin="round"/>
<path d="M398.38,275.64 L400.16,269.66 L400.92,271.23 L399.14,277.27Z" fill="#493f0d" stroke="#493f0d" stroke-width="1" stroke-linejoin="round"/>
<path d="M400.16,269.66 L400.24,263.69 L400.99,265.21 L400.92,271.23Z" fill="#53470f" stroke="#53470f" stroke-width="1" stroke-linejoin="round"/>
<path d="M400.99,265.21 L399.42,259.28 L399.97,260.83 L401.56,266.80Z" fill="#736314" stroke="#736314" stroke-width="1" stroke-linejoin="round"/>
<path d="M102.57,256.07 L100.81,261.93 L100.22,263.50 L101.99,257.60Z" fill="#f9d72c" stroke="#f9d72c" stroke-width="1" stroke-linejoin="round"/>
<path d="M100.81,261.93 L100.67,267.92 L100.07,269.53 L100.22,263.50Z" fill="#ffdd2d" stroke="#ffdd2d" stroke-width="1" stroke-linejoin="round"/>
<path d="M100.67,267.92 L102.22,273.95 L101.62,275.60 L100.07,269.53Z" fill="#ffe22e" stroke="#ffe22e" stroke-width="1" stroke-linejoin="round"/>
<path d="M102.22,273.95 L105.48,279.97 L104.88,281.67 L101.62,275.60Z" fill="#ffe62f" stroke="#ffe62f" stroke-width="1" stroke-linejoin="round"/>
<path d="M105.48,279.97 L110.48,285.90 L109.90,287.64 L104.88,281.67Z" fill="#ffe930" stroke="#ffe930" stroke-width="1" stroke-linejoin="round"/>
<path d="M110.48,285.90 L117.21,291.67 L116.65,293.44 L109.90,287.64Z" fill="#ffea30" stroke="#ffea30" stroke-width="1" stroke-linejoin="round"/>
<path d="M117.21,291.67 L125.63,297.18 L125.10,299.00 L116.65,293.44Z" fill="#ffe930" stroke="#ffe930" stroke-width="1" stroke-linejoin="round"/>
<path d="M125.63,297.18 L135.70,302.37 L135.20,304.23 L125.10,299.00Z" fill="#ffe72f" stroke="#ffe72f" stroke-width="1" stroke-linejoin="round"/>
<path d="M135.70,302.37 L147.31,307.16 L146.86,309.05 L135.20,304.23Z" fill="#ffe42f" stroke="#ffe42f" stroke-width="1" stroke-linejoin="round"/>
<path d="M147.31,307.16 L160.34,311.46 L159.95,313.38 L146.86,309.05Z" fill="#ffdf2e" stroke="#ffdf2e" stroke-width="1" stroke-linejoin="round"/>
<path d="M160.34,311.46 L174.65,315.20 L174.31,317.16 L159.95,313.38Z" fill="#fbd92c" stroke="#fbd92c" stroke-width="1" stroke-linejoin="round"/>
<path d="M174.65,315.20 L190.05,318.33 L189.77,320.31 L174.31,317.16Z" fill="#f2d12b" stroke="#f2d12b" stroke-width="1" stroke-linejoin="round"/>
<path d="M190.05,318.33 L206.33,320.78 L206.13,322.78 L189.77,320.31Z" fill="#e9c929" stroke="#e9c929" stroke-width="1" stroke-linejoin="round"/>
<path d="M206.33,320.78 L223.27,322.51 L223.14,324.52 L206.13,322.78Z" fill="#ddbf27" stroke="#ddbf27" stroke-width="1" stroke-linejoin="round"/>
<path d="M223.27,322.51 L240.63,323.50 L240.57,325.51 L223.14,324.52Z" fill="#d1b425" stroke="#d1b425" stroke-width="1" stroke-linejoin="round"/>
<path d="M240.63,323.50 L258.13,323.71 L258.15,325.73 L240.57,325.51Z" fill="#c4a923" stroke="#c4a923" stroke-width="1" stroke-linejoin="round"/>
<path d="M258.13,323.71 L275.54,323.15 L275.63,325.16 L258.15,325.73Z" fill="#b59d20" stroke="#b59d20" stroke-width="1" stroke-linejoin="round"/>
<path d="M275.54,323.15 L292.58,321.82 L292.74,323.83 L275.63,325.16Z" fill="#a6901d" stroke="#a6901d" stroke-width="1" stroke-linejoin="round"/>
<path d="M292.58,321.82 L309.01,319.76 L309.25,321.75 L292.74,323.83Z" fill="#97821b" stroke="#97821b" stroke-width="1" stroke-linejoin="round"/>
<path d="M309.01,319.76 L324.60,317.00 L324.90,318.97 L309.25,321.75Z" fill="#877518" stroke="#877518" stroke-width="1" stroke-linejoin="round"/>
<path d="M324.60,317.00 L339.13,313.59 L339.49,315.53 L324.90,318.97Z" fill="#776715" stroke="#776715" stroke-width="1" stroke-linejoin="round"/>
<path d="M339.13,313.59 L352.42,309.58 L352.83,311.50 L339.49,315.53Z" fill="#675912" stroke="#675912" stroke-width="1" stroke-linejoin="round"/>
<path d="M352.42,309.58 L364.30,305.06 L364.76,306.93 L352.83,311.50Z" fill="#574b0f" stroke="#574b0f" stroke-width="1" stroke-linejoin="round"/>
<path d="M364.30,305.06 L374.64,300.08 L375.14,301.92 L364.76,306.93Z" fill="#473e0d" stroke="#473e0d" stroke-width="1" stroke-linejoin="round"/>
<path d="M374.64,300.08 L383.35,294.73 L383.88,296.53 L375.14,301.92Z" fill="#38310a" stroke="#38310a" stroke-width="1" stroke-linejoin="round"/>
<path d="M383.35,294.73 L390.36,289.10 L390.91,290.86 L383.88,296.53Z" fill="#3a320a" stroke="#3a320a" stroke-width="1" stroke-linejoin="round"/>
<path d="M390.36,289.10 L395.63,283.25 L396.19,284.97 L390.91,290.86Z" fill="#473e0d" stroke="#473e0d" stroke-width="1" stroke-linejoin="round"/>
<path d="M395.63,283.25 L399.14,277.27 L399.71,278.94 L396.19,284.97Z" fill="#54490f" stroke="#54490f" stroke-width="1" stroke-linejoin="round"/>
<path d="M399.14,277.27 L400.92,271.23 L401.49,272.87 L399.71,278.94Z" fill="#605311" stroke="#605311" stroke-width="1" stroke-linejoin="round"/>
<path d="M400.92,271.23 L400.99,265.21 L401.56,266.80 L401.49,272.87Z" fill="#6a5c13" stroke="#6a5c13" stroke-width="1" stroke-linejoin="round"/>
<path d="M100.22,263.50 L100.07,269.53 L99.66,271.18 L99.81,265.12Z" fill="#f2d12b" stroke="#f2d12b" stroke-width="1" stroke-linejoin="round"/>
<path d="M100.07,269.53 L101.62,275.60 L101.20,277.29 L99.66,271.18Z" fill="#f9d72c" stroke="#f9d72c" stroke-width="1" stroke-linejoin="round"/>
<path d="M101.62,275.60 L104.88,281.67 L104.47,283.39 L101.20,277.29Z" fill="#fddb2d" stroke="#fddb2d" stroke-width="1" stroke-linejoin="round"/>
<path d="M104.88,281.67 L109.90,287.64 L109.49,289.40 L104.47,283.39Z" fill="#ffdd2d" stroke="#ffdd2d" stroke-width="1" stroke-linejoin="round"/>
<path d="M109.90,287.64 L116.65,293.44 L116.26,295.24 L109.49,289.40Z" fill="#ffde2d" stroke="#ffde2d" stroke-width="1" stroke-linejoin="round"/>
<path d="M116.65,293.44 L125.10,299.00 L124.74,300.83 L116.26,295.24Z" fill="#ffde2d" stroke="#ffde2d" stroke-width="1" stroke-linejoin="round"/>
<path d="M125.10,299.00 L135.20,304.23 L134.86,306.09 L124.74,300.83Z" fill="#fedc2d" stroke="#fedc2d" stroke-width="1" stroke-linejoin="round"/>
<path d="M135.20,304.23 L146.86,309.05 L146.55,310.94 L134.86,306.09Z" fill="#fad82c" stroke="#fad82c" stroke-width="1" stroke-linejoin="round"/>
<path d="M146.86,309.05 L159.95,313.38 L159.67,315.30 L146.55,310.94Z" fill="#f4d32b" stroke="#f4d32b" stroke-width="1" stroke-linejoin="round"/>
<path d="M159.95,313.38 L174.31,317.16 L174.08,319.09 L159.67,315.30Z" fill="#edcd2a" stroke="#edcd2a" stroke-width="1" stroke-linejoin="round"/>
<path d="M174.31,317.16 L189.77,320.31 L189.58,322.26 L174.08,319.09Z" fill="#e4c528" stroke="#e4c528" stroke-width="1" stroke-linejoin="round"/>
<path d="M189.77,320.31 L206.13,322.78 L205.98,324.75 L189.58,322.26Z" fill="#dabc27" stroke="#dabc27" stroke-width="1" stroke-linejoin="round"/>
<path d="M206.13,322.78 L223.14,324.52 L223.04,326.51 L205.98,324.75Z" fill="#ceb224" stroke="#ceb224" stroke-width="1" stroke-linejoin="round"/>
<path d="M223.14,324.52 L240.57,325.51 L240.52,327.51 L223.04,326.51Z" fill="#c2a722" stroke="#c2a722" stroke-width="1" stroke-linejoin="round"/>
<path d="M240.57,325.51 L258.15,325.73 L258.16,327.72 L240.52,327.51Z" fill="#b49b20" stroke="#b49b20" stroke-width="1" stroke-linejoin="round"/>
<path d="M258.15,325.73 L275.63,325.16 L275.69,327.15 L258.16,327.72Z" fill="#a58f1d" stroke="#a58f1d" stroke-width="1" stroke-linejoin="round"/>
<path d="M275.63,325.16 L292.74,323.83 L292.85,325.81 L275.69,327.15Z" fill="#96811a" stroke="#96811a" stroke-width="1" stroke-linejoin="round"/>
<path d="M292.74,323.83 L309.25,321.75 L309.40,323.72 L292.85,325.81Z" fill="#867318" stroke="#867318" stroke-width="1" stroke-linejoin="round"/>
<path d="M309.25,321.75 L324.90,318.97 L325.10,320.92 L309.40,323.72Z" fill="#756515" stroke="#756515" stroke-width="1" stroke-linejoin="round"/>
<path d="M324.90,318.97 L339.49,315.53 L339.73,317.46 L325.10,320.92Z" fill="#655712" stroke="#655712" stroke-width="1" stroke-linejoin="round"/>
<path d="M339.49,315.53 L352.83,311.50 L353.11,313.40 L339.73,317.46Z" fill="#54480f" stroke="#54480f" stroke-width="1" stroke-linejoin="round"/>
<path d="M352.83,311.50 L364.76,306.93 L365.06,308.81 L353.11,313.40Z" fill="#433a0c" stroke="#433a0c" stroke-width="1" stroke-linejoin="round"/>
<path d="M364.76,306.93 L375.14,301.92 L375.47,303.77 L365.06,308.81Z" fill="#332c09" stroke="#332c09" stroke-width="1" stroke-linejoin="round"/>
<path d="M375.14,301.92 L383.88,296.53 L384.24,298.35 L375.47,303.77Z" fill="#40370b" stroke="#40370b" stroke-width="1" stroke-linejoin="round"/>
<path d="M383.88,296.53 L390.91,290.86 L391.28,292.64 L384.24,298.35Z" fill="#4f440e" stroke="#4f440e" stroke-width="1" stroke-linejoin="round"/>
<path d="M390.91,290.86 L396.19,284.97 L396.57,286.71 L391.28,292.64Z" fill="#5d5010" stroke="#5d5010" stroke-width="1" stroke-linejoin="round"/>
<path d="M396.19,284.97 L399.71,278.94 L400.10,280.65 L396.57,286.71Z" fill="#6a5c13" stroke="#6a5c13" stroke-width="1" stroke-linejoin="round"/>
<path d="M399.71,278.94 L401.49,272.87 L401.88,274.54 L400.10,280.65Z" fill="#766615" stroke="#766615" stroke-width="1" stroke-linejoin="round"/>
<path d="M401.49,272.87 L401.56,266.80 L401.94,268.44 L401.88,274.54Z" fill="#816f17" stroke="#816f17" stroke-width="1" stroke-linejoin="round"/>
<path d="M99.81,265.12 L99.66,271.18 L99.43,272.86 L99.59,266.78Z" fill="#e3c428" stroke="#e3c428" stroke-width="1" stroke-linejoin="round"/>
<path d="M99.66,271.18 L101.20,277.29 L100.98,279.00 L99.43,272.86Z" fill="#e9c929" stroke="#e9c929" stroke-width="1" stroke-linejoin="round"/>
<path d="M101.20,277.29 L104.47,283.39 L104.25,285.13 L100.98,279.00Z" fill="#eecd2a" stroke="#eecd2a" stroke-width="1" stroke-linejoin="round"/>
<path d="M104.47,283.39 L109.49,289.40 L109.28,291.16 L104.25,285.13Z" fill="#f1d02b" stroke="#f1d02b" stroke-width="1" stroke-linejoin="round"/>
<path d="M109.49,289.40 L116.26,295.24 L116.05,297.03 L109.28,291.16Z" fill="#f2d12b" stroke="#f2d12b" stroke-width="1" stroke-linejoin="round"/>
<path d="M116.26,295.24 L124.74,300.83 L124.53,302.65 L116.05,297.03Z" fill="#f1d02b" stroke="#f1d02b" stroke-width="1" stroke-linejoin="round"/>
<path d="M124.74,300.83 L134.86,306.09 L134.67,307.93 L124.53,302.65Z" fill="#efce2a" stroke="#efce2a" stroke-width="1" stroke-linejoin="round"/>
<path d="M134.86,306.09 L146.55,310.94 L146.38,312.80 L134.67,307.93Z" fill="#eaca29" stroke="#eaca29" stroke-width="1" stroke-linejoin="round"/>
<path d="M146.55,310.94 L159.67,315.30 L159.52,317.18 L146.38,312.80Z" fill="#e5c528" stroke="#e5c528" stroke-width="1" stroke-linejoin="round"/>
<path d="M159.67,315.30 L174.08,319.09 L173.94,321.00 L159.52,317.18Z" fill="#ddbf27" stroke="#ddbf27" stroke-width="1" stroke-linejoin="round"/>
<path d="M174.08,319.09 L189.58,322.26 L189.47,324.18 L173.94,321.00Z" fill="#d4b725" stroke="#d4b725" stroke-width="1" stroke-linejoin="round"/>
<path d="M189.58,322.26 L205.98,324.75 L205.90,326.68 L189.47,324.18Z" fill="#caae24" stroke="#caae24" stroke-width="1" stroke-linejoin="round"/>
<path d="M205.98,324.75 L223.04,326.51 L222.98,328.45 L205.90,326.68Z" fill="#bea422" stroke="#bea422" stroke-width="1" stroke-linejoin="round"/>
<path d="M223.04,326.51 L240.52,327.51 L240.49,329.45 L222.98,328.45Z" fill="#b1991f" stroke="#b1991f" stroke-width="1" stroke-linejoin="round"/>
<path d="M240.52,327.51 L258.16,327.72 L258.15,329.66 L240.49,329.45Z" fill="#a38c1d" stroke="#a38c1d" stroke-width="1" stroke-linejoin="round"/>
<path d="M258.16,327.72 L275.69,327.15 L275.71,329.09 L258.15,329.66Z" fill="#937f1a" stroke="#937f1a" stroke-width="1" stroke-linejoin="round"/>
<path d="M275.69,327.15 L292.85,325.81 L292.90,327.75 L275.71,329.09Z" fill="#847217" stroke="#847217" stroke-width="1" stroke-linejoin="round"/>
<path d="M292.85,325.81 L309.40,323.72 L309.47,325.64 L292.90,327.75Z" fill="#736414" stroke="#736414" stroke-width="1" stroke-linejoin="round"/>
<path d="M309.40,323.72 L325.10,320.92 L325.20,322.83 L309.47,325.64Z" fill="#625511" stroke="#625511" stroke-width="1" stroke-linejoin="round"/>
<path d="M325.10,320.92 L339.73,317.46 L339.85,319.35 L325.20,322.83Z" fill="#51460e" stroke="#51460e" stroke-width="1" stroke-linejoin="round"/>
<path d="M339.73,317.46 L353.11,313.40 L353.24,315.27 L339.85,319.35Z" fill="#40380b" stroke="#40380b" stroke-width="1" stroke-linejoin="round"/>
<path d="M353.11,313.40 L365.06,308.81 L365.22,310.66 L353.24,315.27Z" fill="#342d09" stroke="#342d09" stroke-width="1" stroke-linejoin="round"/>
<path d="M365.06,308.81 L375.47,303.77 L375.64,305.60 L365.22,310.66Z" fill="#453b0c" stroke="#453b0c" stroke-width="1" stroke-linejoin="round"/>
<path d="M375.47,303.77 L384.24,298.35 L384.41,300.15 L375.64,305.60Z" fill="#55490f" stroke="#55490f" stroke-width="1" stroke-linejoin="round"/>
<path d="M384.24,298.35 L391.28,292.64 L391.47,294.41 L384.41,300.15Z" fill="#645612" stroke="#645612" stroke-width="1" stroke-linejoin="round"/>
<path d="M391.28,292.64 L396.57,286.71 L396.77,288.46 L391.47,294.41Z" fill="#726314" stroke="#726314" stroke-width="1" stroke-linejoin="round"/>
<path d="M396.57,286.71 L400.10,280.65 L400.30,282.38 L396.77,288.46Z" fill="#806e17" stroke="#806e17" stroke-width="1" stroke-linejoin="round"/>
<path d="M400.10,280.65 L401.88,274.54 L402.07,276.24 L400.30,282.38Z" fill="#8c7919" stroke="#8c7919" stroke-width="1" stroke-linejoin="round"/>
<path d="M401.88,274.54 L401.94,268.44 L402.14,270.11 L402.07,276.24Z" fill="#97821b" stroke="#97821b" stroke-width="1" stroke-linejoin="round"/>
<path d="M99.43,272.86 L100.98,279.00 L100.94,280.71 L99.40,274.55Z" fill="#d7ba26" stroke="#d7ba26" stroke-width="1" stroke-linejoin="round"/>
<path d="M100.98,279.00 L104.25,285.13 L104.22,286.86 L100.94,280.71Z" fill="#dcbe27" stroke="#dcbe27" stroke-width="1" stroke-linejoin="round"/>
<path d="M104.25,285.13 L109.28,291.16 L109.24,292.91 L104.22,286.86Z" fill="#dfc027" stroke="#dfc027" stroke-width="1" stroke-linejoin="round"/>
<path d="M109.28,291.16 L116.05,297.03 L116.01,298.80 L109.24,292.91Z" fill="#e0c128" stroke="#e0c128" stroke-width="1" stroke-linejoin="round"/>
<path d="M116.05,297.03 L124.53,302.65 L124.50,304.43 L116.01,298.80Z" fill="#dfc127" stroke="#dfc127" stroke-width="1" stroke-linejoin="round"/>
<path d="M124.53,302.65 L134.67,307.93 L134.64,309.73 L124.50,304.43Z" fill="#ddbf27" stroke="#ddbf27" stroke-width="1" stroke-linejoin="round"/>
<path d="M134.67,307.93 L146.38,312.80 L146.35,314.62 L134.64,309.73Z" fill="#d9bb26" stroke="#d9bb26" stroke-width="1" stroke-linejoin="round"/>
<path d="M146.38,312.80 L159.52,317.18 L159.49,319.01 L146.35,314.62Z" fill="#d3b625" stroke="#d3b625" stroke-width="1" stroke-linejoin="round"/>
<path d="M159.52,317.18 L173.94,321.00 L173.92,322.84 L159.49,319.01Z" fill="#cbb024" stroke="#cbb024" stroke-width="1" stroke-linejoin="round"/>
<path d="M173.94,321.00 L189.47,324.18 L189.45,326.04 L173.92,322.84Z" fill="#c2a822" stroke="#c2a822" stroke-width="1" stroke-linejoin="round"/>
<path d="M189.47,324.18 L205.90,326.68 L205.87,328.54 L189.45,326.04Z" fill="#b89e20" stroke="#b89e20" stroke-width="1" stroke-linejoin="round"/>
<path d="M205.90,326.68 L222.98,328.45 L222.96,330.32 L205.87,328.54Z" fill="#ac941e" stroke="#ac941e" stroke-width="1" stroke-linejoin="round"/>
<path d="M222.98,328.45 L240.49,329.45 L240.47,331.32 L222.96,330.32Z" fill="#9e891c" stroke="#9e891c" stroke-width="1" stroke-linejoin="round"/>
<path d="M240.49,329.45 L258.15,329.66 L258.13,331.54 L240.47,331.32Z" fill="#907c19" stroke="#907c19" stroke-width="1" stroke-linejoin="round"/>
<path d="M258.15,329.66 L275.71,329.09 L275.69,330.96 L258.13,331.54Z" fill="#816f17" stroke="#816f17" stroke-width="1" stroke-linejoin="round"/>
<path d="M275.71,329.09 L292.90,327.75 L292.89,329.61 L275.69,330.96Z" fill="#716114" stroke="#716114" stroke-width="1" stroke-linejoin="round"/>
<path d="M292.90,327.75 L309.47,325.64 L309.46,327.50 L292.89,329.61Z" fill="#605311" stroke="#605311" stroke-width="1" stroke-linejoin="round"/>
<path d="M309.47,325.64 L325.20,322.83 L325.19,324.68 L309.46,327.50Z" fill="#4f440e" stroke="#4f440e" stroke-width="1" stroke-linejoin="round"/>
<path d="M325.20,322.83 L339.85,319.35 L339.84,321.19 L325.19,324.68Z" fill="#3e360b" stroke="#3e360b" stroke-width="1" stroke-linejoin="round"/>
<path d="M339.85,319.35 L353.24,315.27 L353.24,317.10 L339.84,321.19Z" fill="#372f0a" stroke="#372f0a" stroke-width="1" stroke-linejoin="round"/>
<path d="M353.24,315.27 L365.22,310.66 L365.21,312.47 L353.24,317.10Z" fill="#483e0d" stroke="#483e0d" stroke-width="1" stroke-linejoin="round"/>
<path d="M365.22,310.66 L375.64,305.60 L375.64,307.39 L365.21,312.47Z" fill="#584c10" stroke="#584c10" stroke-width="1" stroke-linejoin="round"/>
<path d="M375.64,305.60 L384.41,300.15 L384.41,301.93 L375.64,307.39Z" fill="#695a12" stroke="#695a12" stroke-width="1" stroke-linejoin="round"/>
<path d="M384.41,300.15 L391.47,294.41 L391.47,296.17 L384.41,301.93Z" fill="#786815" stroke="#786815" stroke-width="1" stroke-linejoin="round"/>
<path d="M391.47,294.41 L396.77,288.46 L396.77,290.20 L391.47,296.17Z" fill="#877418" stroke="#877418" stroke-width="1" stroke-linejoin="round"/>
<path d="M396.77,288.46 L400.30,282.38 L400.30,284.09 L396.77,290.20Z" fill="#94801a" stroke="#94801a" stroke-width="1" stroke-linejoin="round"/>
<path d="M400.30,282.38 L402.07,276.24 L402.08,277.93 L400.30,284.09Z" fill="#a18b1c" stroke="#a18b1c" stroke-width="1" stroke-linejoin="round"/>
<path d="M402.07,276.24 L402.14,270.11 L402.14,271.79 L402.08,277.93Z" fill="#ac941e" stroke="#ac941e" stroke-width="1" stroke-linejoin="round"/>
<path d="M99.40,274.55 L100.94,280.71 L101.24,288.92 L99.70,282.63Z" fill="#ceb224" stroke="#ceb224" stroke-width="1" stroke-linejoin="round"/>
<path d="M100.94,280.71 L104.22,286.86 L104.51,295.23 L101.24,288.92Z" fill="#d2b625" stroke="#d2b625" stroke-width="1" stroke-linejoin="round"/>
<path d="M104.22,286.86 L109.24,292.91 L109.52,301.45 L104.51,295.23Z" fill="#d5b826" stroke="#d5b826" stroke-width="1" stroke-linejoin="round"/>
<path d="M109.24,292.91 L116.01,298.80 L116.28,307.52 L109.52,301.45Z" fill="#d7b926" stroke="#d7b926" stroke-width="1" stroke-linejoin="round"/>
<path d="M116.01,298.80 L124.50,304.43 L124.75,313.34 L116.28,307.52Z" fill="#d6b926" stroke="#d6b926" stroke-width="1" stroke-linejoin="round"/>
<path d="M124.50,304.43 L134.64,309.73 L134.87,318.83 L124.75,313.34Z" fill="#d3b725" stroke="#d3b725" stroke-width="1" stroke-linejoin="round"/>
<path d="M134.64,309.73 L146.35,314.62 L146.54,323.89 L134.87,318.83Z" fill="#cfb325" stroke="#cfb325" stroke-width="1" stroke-linejoin="round"/>
<path d="M146.35,314.62 L159.49,319.01 L159.65,328.45 L146.54,323.89Z" fill="#c9ae24" stroke="#c9ae24" stroke-width="1" stroke-linejoin="round"/>
<path d="M159.49,319.01 L173.92,322.84 L174.04,332.43 L159.65,328.45Z" fill="#c2a722" stroke="#c2a722" stroke-width="1" stroke-linejoin="round"/>
<path d="M173.92,322.84 L189.45,326.04 L189.53,335.74 L174.04,332.43Z" fill="#b99f21" stroke="#b99f21" stroke-width="1" stroke-linejoin="round"/>
<path d="M189.45,326.04 L205.87,328.54 L205.91,338.34 L189.53,335.74Z" fill="#ae961f" stroke="#ae961f" stroke-width="1" stroke-linejoin="round"/>
<path d="M205.87,328.54 L222.96,330.32 L222.95,340.17 L205.91,338.34Z" fill="#a28c1d" stroke="#a28c1d" stroke-width="1" stroke-linejoin="round"/>
<path d="M222.96,330.32 L240.47,331.32 L240.41,341.20 L222.95,340.17Z" fill="#95801a" stroke="#95801a" stroke-width="1" stroke-linejoin="round"/>
<path d="M240.47,331.32 L258.13,331.54 L258.03,341.40 L240.41,341.20Z" fill="#867418" stroke="#867418" stroke-width="1" stroke-linejoin="round"/>
<path d="M258.13,331.54 L275.69,330.96 L275.54,340.79 L258.03,341.40Z" fill="#776715" stroke="#776715" stroke-width="1" stroke-linejoin="round"/>
<path d="M275.69,330.96 L292.89,329.61 L292.69,339.36 L275.54,340.79Z" fill="#675912" stroke="#675912" stroke-width="1" stroke-linejoin="round"/>
<path d="M292.89,329.61 L309.46,327.50 L309.22,337.14 L292.69,339.36Z" fill="#574b0f" stroke="#574b0f" stroke-width="1" stroke-linejoin="round"/>
<path d="M309.46,327.50 L325.19,324.68 L324.90,334.19 L309.22,337.14Z" fill="#463c0c" stroke="#463c0c" stroke-width="1" stroke-linejoin="round"/>
<path d="M325.19,324.68 L339.84,321.19 L339.52,330.55 L324.90,334.19Z" fill="#342d09" stroke="#342d09" stroke-width="1" stroke-linejoin="round"/>
<path d="M339.84,321.19 L353.24,317.10 L352.88,326.29 L339.52,330.55Z" fill="#40380b" stroke="#40380b" stroke-width="1" stroke-linejoin="round"/>
<path d="M353.24,317.10 L365.21,312.47 L364.83,321.48 L352.88,326.29Z" fill="#52460e" stroke="#52460e" stroke-width="1" stroke-linejoin="round"/>
<path d="M365.21,312.47 L375.64,307.39 L375.23,316.22 L364.83,321.48Z" fill="#625511" stroke="#625511" stroke-width="1" stroke-linejoin="round"/>
<path d="M375.64,307.39 L384.41,301.93 L383.99,310.58 L375.23,316.22Z" fill="#726314" stroke="#726314" stroke-width="1" stroke-linejoin="round"/>
<path d="M384.41,301.93 L391.47,296.17 L391.03,304.66 L383.99,310.58Z" fill="#827017" stroke="#827017" stroke-width="1" stroke-linejoin="round"/>
<path d="M391.47,296.17 L396.77,290.20 L396.32,298.53 L391.03,304.66Z" fill="#917d1a" stroke="#917d1a" stroke-width="1" stroke-linejoin="round"/>
<path d="M396.77,290.20 L400.30,284.09 L399.84,292.29 L396.32,298.53Z" fill="#9e891c" stroke="#9e891c" stroke-width="1" stroke-linejoin="round"/>
<path d="M400.30,284.09 L402.08,277.93 L401.62,286.02 L399.84,292.29Z" fill="#ab931e" stroke="#ab931e" stroke-width="1" stroke-linejoin="round"/>
<path d="M99.70,282.63 L101.24,288.92 L101.40,290.63 L99.86,284.31Z" fill="#c4a923" stroke="#c4a923" stroke-width="1" stroke-linejoin="round"/>
<path d="M101.24,288.92 L104.51,295.23 L104.66,296.96 L101.40,290.63Z" fill="#c8ad23" stroke="#c8ad23" stroke-width="1" stroke-linejoin="round"/>
<path d="M104.51,295.23 L109.52,301.45 L109.67,303.22 L104.66,296.96Z" fill="#cbb024" stroke="#cbb024" stroke-width="1" stroke-linejoin="round"/>
<path d="M109.52,301.45 L116.28,307.52 L116.43,309.32 L109.67,303.22Z" fill="#cdb124" stroke="#cdb124" stroke-width="1" stroke-linejoin="round"/>
<path d="M116.28,307.52 L124.75,313.34 L124.89,315.17 L116.43,309.32Z" fill="#ccb024" stroke="#ccb024" stroke-width="1" stroke-linejoin="round"/>
<path d="M124.75,313.34 L134.87,318.83 L134.99,320.70 L124.89,315.17Z" fill="#c9ae24" stroke="#c9ae24" stroke-width="1" stroke-linejoin="round"/>
<path d="M134.87,318.83 L146.54,323.89 L146.65,325.79 L134.99,320.70Z" fill="#c5aa23" stroke="#c5aa23" stroke-width="1" stroke-linejoin="round"/>
<path d="M146.54,323.89 L159.65,328.45 L159.74,330.38 L146.65,325.79Z" fill="#bfa522" stroke="#bfa522" stroke-width="1" stroke-linejoin="round"/>
<path d="M159.65,328.45 L174.04,332.43 L174.12,334.38 L159.74,330.38Z" fill="#b89f20" stroke="#b89f20" stroke-width="1" stroke-linejoin="round"/>
<path d="M174.04,332.43 L189.53,335.74 L189.59,337.72 L174.12,334.38Z" fill="#af971f" stroke="#af971f" stroke-width="1" stroke-linejoin="round"/>
<path d="M189.53,335.74 L205.91,338.34 L205.95,340.33 L189.59,337.72Z" fill="#a48e1d" stroke="#a48e1d" stroke-width="1" stroke-linejoin="round"/>
<path d="M205.91,338.34 L222.95,340.17 L222.97,342.17 L205.95,340.33Z" fill="#98831b" stroke="#98831b" stroke-width="1" stroke-linejoin="round"/>
<path d="M222.95,340.17 L240.41,341.20 L240.41,343.21 L222.97,342.17Z" fill="#8b7819" stroke="#8b7819" stroke-width="1" stroke-linejoin="round"/>
<path d="M240.41,341.20 L258.03,341.40 L258.00,343.41 L240.41,343.21Z" fill="#7d6c16" stroke="#7d6c16" stroke-width="1" stroke-linejoin="round"/>
<path d="M258.03,341.40 L275.54,340.79 L275.49,342.79 L258.00,343.41Z" fill="#6d5e13" stroke="#6d5e13" stroke-width="1" stroke-linejoin="round"/>
<path d="M275.54,340.79 L292.69,339.36 L292.62,341.34 L275.49,342.79Z" fill="#5d5110" stroke="#5d5110" stroke-width="1" stroke-linejoin="round"/>
<path d="M292.69,339.36 L309.22,337.14 L309.13,339.11 L292.62,341.34Z" fill="#4d420e" stroke="#4d420e" stroke-width="1" stroke-linejoin="round"/>
<path d="M309.22,337.14 L324.90,334.19 L324.79,336.13 L309.13,339.11Z" fill="#3c340b" stroke="#3c340b" stroke-width="1" stroke-linejoin="round"/>
<path d="M324.90,334.19 L339.52,330.55 L339.39,332.46 L324.79,336.13Z" fill="#39310a" stroke="#39310a" stroke-width="1" stroke-linejoin="round"/>
<path d="M339.52,330.55 L352.88,326.29 L352.74,328.17 L339.39,332.46Z" fill="#4a400d" stroke="#4a400d" stroke-width="1" stroke-linejoin="round"/>
<path d="M352.88,326.29 L364.83,321.48 L364.67,323.33 L352.74,328.17Z" fill="#5b4f10" stroke="#5b4f10" stroke-width="1" stroke-linejoin="round"/>
<path d="M364.83,321.48 L375.23,316.22 L375.06,318.03 L364.67,323.33Z" fill="#6c5d13" stroke="#6c5d13" stroke-width="1" stroke-linejoin="round"/>
<path d="M375.23,316.22 L383.99,310.58 L383.81,312.36 L375.06,318.03Z" fill="#7c6b16" stroke="#7c6b16" stroke-width="1" stroke-linejoin="round"/>
<path d="M383.99,310.58 L391.03,304.66 L390.84,306.40 L383.81,312.36Z" fill="#8c7919" stroke="#8c7919" stroke-width="1" stroke-linejoin="round"/>
<path d="M391.03,304.66 L396.32,298.53 L396.13,300.25 L390.84,306.40Z" fill="#9a851b" stroke="#9a851b" stroke-width="1" stroke-linejoin="round"/>
<path d="M396.32,298.53 L399.84,292.29 L399.65,293.99 L396.13,300.25Z" fill="#a8911e" stroke="#a8911e" stroke-width="1" stroke-linejoin="round"/>
<path d="M399.84,292.29 L401.62,286.02 L401.43,287.69 L399.65,293.99Z" fill="#b49c20" stroke="#b49c20" stroke-width="1" stroke-linejoin="round"/>
<path d="M99.86,284.31 L101.40,290.63 L101.74,292.29 L100.20,285.96Z" fill="#af971f" stroke="#af971f" stroke-width="1" stroke-linejoin="round"/>
<path d="M101.40,290.63 L104.66,296.96 L105.01,298.64 L101.74,292.29Z" fill="#b39b20" stroke="#b39b20" stroke-width="1" stroke-linejoin="round"/>
<path d="M104.66,296.96 L109.67,303.22 L110.01,304.92 L105.01,298.64Z" fill="#b69d20" stroke="#b69d20" stroke-width="1" stroke-linejoin="round"/>
<path d="M109.67,303.22 L116.43,309.32 L116.75,311.05 L110.01,304.92Z" fill="#b79e20" stroke="#b79e20" stroke-width="1" stroke-linejoin="round"/>
<path d="M116.43,309.32 L124.89,315.17 L125.19,316.93 L116.75,311.05Z" fill="#b79e20" stroke="#b79e20" stroke-width="1" stroke-linejoin="round"/>
<path d="M124.89,315.17 L134.99,320.70 L135.27,322.48 L125.19,316.93Z" fill="#b49c20" stroke="#b49c20" stroke-width="1" stroke-linejoin="round"/>
<path d="M134.99,320.70 L146.65,325.79 L146.90,327.60 L135.27,322.48Z" fill="#b0981f" stroke="#b0981f" stroke-width="1" stroke-linejoin="round"/>
<path d="M146.65,325.79 L159.74,330.38 L159.96,332.21 L146.90,327.60Z" fill="#aa931e" stroke="#aa931e" stroke-width="1" stroke-linejoin="round"/>
<path d="M159.74,330.38 L174.12,334.38 L174.30,336.23 L159.96,332.21Z" fill="#a38d1d" stroke="#a38d1d" stroke-width="1" stroke-linejoin="round"/>
<path d="M174.12,334.38 L189.59,337.72 L189.73,339.59 L174.30,336.23Z" fill="#9a851b" stroke="#9a851b" stroke-width="1" stroke-linejoin="round"/>
<path d="M189.59,337.72 L205.95,340.33 L206.05,342.21 L189.73,339.59Z" fill="#8f7c19" stroke="#8f7c19" stroke-width="1" stroke-linejoin="round"/>
<path d="M205.95,340.33 L222.97,342.17 L223.02,344.06 L206.05,342.21Z" fill="#837117" stroke="#837117" stroke-width="1" stroke-linejoin="round"/>
<path d="M222.97,342.17 L240.41,343.21 L240.42,345.10 L223.02,344.06Z" fill="#766615" stroke="#766615" stroke-width="1" stroke-linejoin="round"/>
<path d="M240.41,343.21 L258.00,343.41 L257.96,345.30 L240.42,345.10Z" fill="#685a12" stroke="#685a12" stroke-width="1" stroke-linejoin="round"/>
<path d="M258.00,343.41 L275.49,342.79 L275.41,344.67 L257.96,345.30Z" fill="#594d10" stroke="#594d10" stroke-width="1" stroke-linejoin="round"/>
<path d="M275.49,342.79 L292.62,341.34 L292.49,343.21 L275.41,344.67Z" fill="#493f0d" stroke="#493f0d" stroke-width="1" stroke-linejoin="round"/>
<path d="M292.62,341.34 L309.13,339.11 L308.96,340.96 L292.49,343.21Z" fill="#39310a" stroke="#39310a" stroke-width="1" stroke-linejoin="round"/>
<path d="M309.13,339.11 L324.79,336.13 L324.58,337.96 L308.96,340.96Z" fill="#3b330b" stroke="#3b330b" stroke-width="1" stroke-linejoin="round"/>
<path d="M324.79,336.13 L339.39,332.46 L339.14,334.27 L324.58,337.96Z" fill="#4c420e" stroke="#4c420e" stroke-width="1" stroke-linejoin="round"/>
<path d="M339.39,332.46 L352.74,328.17 L352.46,329.95 L339.14,334.27Z" fill="#5d5111" stroke="#5d5111" stroke-width="1" stroke-linejoin="round"/>
<path d="M352.74,328.17 L364.67,323.33 L364.36,325.09 L352.46,329.95Z" fill="#6e5f13" stroke="#6e5f13" stroke-width="1" stroke-linejoin="round"/>
<path d="M364.67,323.33 L375.06,318.03 L374.73,319.77 L364.36,325.09Z" fill="#7f6e16" stroke="#7f6e16" stroke-width="1" stroke-linejoin="round"/>
<path d="M375.06,318.03 L383.81,312.36 L383.45,314.07 L374.73,319.77Z" fill="#8f7b19" stroke="#8f7b19" stroke-width="1" stroke-linejoin="round"/>
<path d="M383.81,312.36 L390.84,306.40 L390.47,308.09 L383.45,314.07Z" fill="#9e891c" stroke="#9e891c" stroke-width="1" stroke-linejoin="round"/>
<path d="M390.84,306.40 L396.13,300.25 L395.75,301.92 L390.47,308.09Z" fill="#ad951e" stroke="#ad951e" stroke-width="1" stroke-linejoin="round"/>
<path d="M396.13,300.25 L399.65,293.99 L399.27,295.64 L395.75,301.92Z" fill="#baa121" stroke="#baa121" stroke-width="1" stroke-linejoin="round"/>
<path d="M399.65,293.99 L401.43,287.69 L401.05,289.34 L399.27,295.64Z" fill="#c6ab23" stroke="#c6ab23" stroke-width="1" stroke-linejoin="round"/>
<path d="M101.74,292.29 L105.01,298.64 L105.53,300.26 L102.27,293.90Z" fill="#9d871c" stroke="#9d871c" stroke-width="1" stroke-linejoin="round"/>
<path d="M105.01,298.64 L110.01,304.92 L110.52,306.55 L105.53,300.26Z" fill="#a08a1c" stroke="#a08a1c" stroke-width="1" stroke-linejoin="round"/>
<path d="M110.01,304.92 L116.75,311.05 L117.24,312.69 L110.52,306.55Z" fill="#a18b1c" stroke="#a18b1c" stroke-width="1" stroke-linejoin="round"/>
<path d="M116.75,311.05 L125.19,316.93 L125.65,318.59 L117.24,312.69Z" fill="#a08a1c" stroke="#a08a1c" stroke-width="1" stroke-linejoin="round"/>
<path d="M125.19,316.93 L135.27,322.48 L135.70,324.16 L125.65,318.59Z" fill="#9e881c" stroke="#9e881c" stroke-width="1" stroke-linejoin="round"/>
<path d="M135.27,322.48 L146.90,327.60 L147.29,329.30 L135.70,324.16Z" fill="#9a851b" stroke="#9a851b" stroke-width="1" stroke-linejoin="round"/>
<path d="M146.90,327.60 L159.96,332.21 L160.30,333.92 L147.29,329.30Z" fill="#94801a" stroke="#94801a" stroke-width="1" stroke-linejoin="round"/>
<path d="M159.96,332.21 L174.30,336.23 L174.58,337.96 L160.30,333.92Z" fill="#8d7919" stroke="#8d7919" stroke-width="1" stroke-linejoin="round"/>
<path d="M174.30,336.23 L189.73,339.59 L189.95,341.32 L174.58,337.96Z" fill="#847217" stroke="#847217" stroke-width="1" stroke-linejoin="round"/>
<path d="M189.73,339.59 L206.05,342.21 L206.21,343.96 L189.95,341.32Z" fill="#796915" stroke="#796915" stroke-width="1" stroke-linejoin="round"/>
<path d="M206.05,342.21 L223.02,344.06 L223.12,345.81 L206.21,343.96Z" fill="#6e5f13" stroke="#6e5f13" stroke-width="1" stroke-linejoin="round"/>
<path d="M223.02,344.06 L240.42,345.10 L240.44,346.85 L223.12,345.81Z" fill="#615411" stroke="#615411" stroke-width="1" stroke-linejoin="round"/>
<path d="M240.42,345.10 L257.96,345.30 L257.91,347.05 L240.44,346.85Z" fill="#53480f" stroke="#53480f" stroke-width="1" stroke-linejoin="round"/>
<path d="M257.96,345.30 L275.41,344.67 L275.29,346.41 L257.91,347.05Z" fill="#453b0c" stroke="#453b0c" stroke-width="1" stroke-linejoin="round"/>
<path d="M275.41,344.67 L292.49,343.21 L292.30,344.94 L275.29,346.41Z" fill="#352e09" stroke="#352e09" stroke-width="1" stroke-linejoin="round"/>
<path d="M292.49,343.21 L308.96,340.96 L308.70,342.68 L292.30,344.94Z" fill="#3f360b" stroke="#3f360b" stroke-width="1" stroke-linejoin="round"/>
<path d="M308.96,340.96 L324.58,337.96 L324.27,339.66 L308.70,342.68Z" fill="#4f440e" stroke="#4f440e" stroke-width="1" stroke-linejoin="round"/>
<path d="M324.58,337.96 L339.14,334.27 L338.77,335.95 L324.27,339.66Z" fill="#605311" stroke="#605311" stroke-width="1" stroke-linejoin="round"/>
<path d="M339.14,334.27 L352.46,329.95 L352.04,331.62 L338.77,335.95Z" fill="#706114" stroke="#706114" stroke-width="1" stroke-linejoin="round"/>
<path d="M352.46,329.95 L364.36,325.09 L363.90,326.74 L352.04,331.62Z" fill="#816f17" stroke="#816f17" stroke-width="1" stroke-linejoin="round"/>
<path d="M364.36,325.09 L374.73,319.77 L374.23,321.40 L363.90,326.74Z" fill="#917d1a" stroke="#917d1a" stroke-width="1" stroke-linejoin="round"/>
<path d="M374.73,319.77 L383.45,314.07 L382.93,315.69 L374.23,321.40Z" fill="#a18b1c" stroke="#a18b1c" stroke-width="1" stroke-linejoin="round"/>
<path d="M383.45,314.07 L390.47,308.09 L389.93,309.70 L382.93,315.69Z" fill="#af981f" stroke="#af981f" stroke-width="1" stroke-linejoin="round"/>
<path d="M390.47,308.09 L395.75,301.92 L395.19,303.52 L389.93,309.70Z" fill="#bea422" stroke="#bea422" stroke-width="1" stroke-linejoin="round"/>
<path d="M395.75,301.92 L399.27,295.64 L398.70,297.23 L395.19,303.52Z" fill="#cbaf24" stroke="#cbaf24" stroke-width="1" stroke-linejoin="round"/>
<path d="M102.27,293.90 L105.53,300.26 L106.23,301.79 L102.99,295.43Z" fill="#857317" stroke="#857317" stroke-width="1" stroke-linejoin="round"/>
<path d="M105.53,300.26 L110.52,306.55 L111.21,308.09 L106.23,301.79Z" fill="#887518" stroke="#887518" stroke-width="1" stroke-linejoin="round"/>
<path d="M110.52,306.55 L117.24,312.69 L117.90,314.23 L111.21,308.09Z" fill="#897618" stroke="#897618" stroke-width="1" stroke-linejoin="round"/>
<path d="M117.24,312.69 L125.65,318.59 L126.27,320.14 L117.90,314.23Z" fill="#887618" stroke="#887618" stroke-width="1" stroke-linejoin="round"/>
<path d="M125.65,318.59 L135.70,324.16 L136.28,325.71 L126.27,320.14Z" fill="#867418" stroke="#867418" stroke-width="1" stroke-linejoin="round"/>
<path d="M135.70,324.16 L147.29,329.30 L147.81,330.86 L136.28,325.71Z" fill="#827017" stroke="#827017" stroke-width="1" stroke-linejoin="round"/>
<path d="M147.29,329.30 L160.30,333.92 L160.76,335.49 L147.81,330.86Z" fill="#7c6b16" stroke="#7c6b16" stroke-width="1" stroke-linejoin="round"/>
<path d="M160.30,333.92 L174.58,337.96 L174.97,339.53 L160.76,335.49Z" fill="#756515" stroke="#756515" stroke-width="1" stroke-linejoin="round"/>
<path d="M174.58,337.96 L189.95,341.32 L190.26,342.90 L174.97,339.53Z" fill="#6d5e13" stroke="#6d5e13" stroke-width="1" stroke-linejoin="round"/>
<path d="M189.95,341.32 L206.21,343.96 L206.43,345.54 L190.26,342.90Z" fill="#635511" stroke="#635511" stroke-width="1" stroke-linejoin="round"/>
<path d="M206.21,343.96 L223.12,345.81 L223.25,347.39 L206.43,345.54Z" fill="#584c0f" stroke="#584c0f" stroke-width="1" stroke-linejoin="round"/>
<path d="M223.12,345.81 L240.44,346.85 L240.47,348.43 L223.25,347.39Z" fill="#4b410d" stroke="#4b410d" stroke-width="1" stroke-linejoin="round"/>
<path d="M240.44,346.85 L257.91,347.05 L257.86,348.63 L240.47,348.43Z" fill="#3e350b" stroke="#3e350b" stroke-width="1" stroke-linejoin="round"/>
<path d="M257.91,347.05 L275.29,346.41 L275.14,347.98 L257.86,348.63Z" fill="#342d09" stroke="#342d09" stroke-width="1" stroke-linejoin="round"/>
<path d="M275.29,346.41 L292.30,344.94 L292.06,346.51 L275.14,347.98Z" fill="#433a0c" stroke="#433a0c" stroke-width="1" stroke-linejoin="round"/>
<path d="M292.30,344.94 L308.70,342.68 L308.38,344.24 L292.06,346.51Z" fill="#52470f" stroke="#52470f" stroke-width="1" stroke-linejoin="round"/>
<path d="M308.70,342.68 L324.27,339.66 L323.86,341.21 L308.38,344.24Z" fill="#625511" stroke="#625511" stroke-width="1" stroke-linejoin="round"/>
<path d="M324.27,339.66 L338.77,335.95 L338.29,337.49 L323.86,341.21Z" fill="#726314" stroke="#726314" stroke-width="1" stroke-linejoin="round"/>
<path d="M338.77,335.95 L352.04,331.62 L351.49,333.15 L338.29,337.49Z" fill="#827117" stroke="#827117" stroke-width="1" stroke-linejoin="round"/>
<path d="M352.04,331.62 L363.90,326.74 L363.29,328.26 L351.49,333.15Z" fill="#927e1a" stroke="#927e1a" stroke-width="1" stroke-linejoin="round"/>
<path d="M363.90,326.74 L374.23,321.40 L373.58,322.92 L363.29,328.26Z" fill="#a28c1d" stroke="#a28c1d" stroke-width="1" stroke-linejoin="round"/>
<path d="M374.23,321.40 L382.93,315.69 L382.24,317.20 L373.58,322.92Z" fill="#b1991f" stroke="#b1991f" stroke-width="1" stroke-linejoin="round"/>
<path d="M382.93,315.69 L389.93,309.70 L389.21,311.21 L382.24,317.20Z" fill="#bfa522" stroke="#bfa522" stroke-width="1" stroke-linejoin="round"/>
<path d="M389.93,309.70 L395.19,303.52 L394.45,305.03 L389.21,311.21Z" fill="#cdb124" stroke="#cdb124" stroke-width="1" stroke-linejoin="round"/>
<path d="M395.19,303.52 L398.70,297.23 L397.96,298.75 L394.45,305.03Z" fill="#dabc26" stroke="#dabc26" stroke-width="1" stroke-linejoin="round"/>
<path d="M106.23,301.79 L111.21,308.09 L112.06,309.51 L107.11,303.22Z" fill="#6f6014" stroke="#6f6014" stroke-width="1" stroke-linejoin="round"/>
<path d="M111.21,308.09 L117.90,314.23 L118.71,315.65 L112.06,309.51Z" fill="#706114" stroke="#706114" stroke-width="1" stroke-linejoin="round"/>
<path d="M117.90,314.23 L126.27,320.14 L127.05,321.55 L118.71,315.65Z" fill="#6f6014" stroke="#6f6014" stroke-width="1" stroke-linejoin="round"/>
<path d="M126.27,320.14 L136.28,325.71 L136.99,327.12 L127.05,321.55Z" fill="#6d5e13" stroke="#6d5e13" stroke-width="1" stroke-linejoin="round"/>
<path d="M136.28,325.71 L147.81,330.86 L148.46,332.27 L136.99,327.12Z" fill="#695b13" stroke="#695b13" stroke-width="1" stroke-linejoin="round"/>
<path d="M147.81,330.86 L160.76,335.49 L161.32,336.90 L148.46,332.27Z" fill="#645712" stroke="#645712" stroke-width="1" stroke-linejoin="round"/>
<path d="M160.76,335.49 L174.97,339.53 L175.44,340.94 L161.32,336.90Z" fill="#5d5111" stroke="#5d5111" stroke-width="1" stroke-linejoin="round"/>
<path d="M174.97,339.53 L190.26,342.90 L190.64,344.31 L175.44,340.94Z" fill="#554a0f" stroke="#554a0f" stroke-width="1" stroke-linejoin="round"/>
<path d="M190.26,342.90 L206.43,345.54 L206.70,346.94 L190.64,344.31Z" fill="#4c410d" stroke="#4c410d" stroke-width="1" stroke-linejoin="round"/>
<path d="M206.43,345.54 L223.25,347.39 L223.41,348.80 L206.70,346.94Z" fill="#41380b" stroke="#41380b" stroke-width="1" stroke-linejoin="round"/>
<path d="M223.25,347.39 L240.47,348.43 L240.52,349.83 L223.41,348.80Z" fill="#352e09" stroke="#352e09" stroke-width="1" stroke-linejoin="round"/>
<path d="M240.47,348.43 L257.86,348.63 L257.79,350.02 L240.52,349.83Z" fill="#3b330a" stroke="#3b330a" stroke-width="1" stroke-linejoin="round"/>
<path d="M257.86,348.63 L275.14,347.98 L274.96,349.37 L257.79,350.02Z" fill="#493f0d" stroke="#493f0d" stroke-width="1" stroke-linejoin="round"/>
<path d="M275.14,347.98 L292.06,346.51 L291.77,347.90 L274.96,349.37Z" fill="#574b0f" stroke="#574b0f" stroke-width="1" stroke-linejoin="round"/>
<path d="M292.06,346.51 L308.38,344.24 L307.98,345.62 L291.77,347.90Z" fill="#665812" stroke="#665812" stroke-width="1" stroke-linejoin="round"/>
<path d="M308.38,344.24 L323.86,341.21 L323.36,342.60 L307.98,345.62Z" fill="#756515" stroke="#756515" stroke-width="1" stroke-linejoin="round"/>
<path d="M323.86,341.21 L338.29,337.49 L337.70,338.88 L323.36,342.60Z" fill="#847217" stroke="#847217" stroke-width="1" stroke-linejoin="round"/>
<path d="M338.29,337.49 L351.49,333.15 L350.82,334.53 L337.70,338.88Z" fill="#947f1a" stroke="#947f1a" stroke-width="1" stroke-linejoin="round"/>
<path d="M351.49,333.15 L363.29,328.26 L362.55,329.65 L350.82,334.53Z" fill="#a38d1d" stroke="#a38d1d" stroke-width="1" stroke-linejoin="round"/>
<path d="M363.29,328.26 L373.58,322.92 L372.78,324.30 L362.55,329.65Z" fill="#b2991f" stroke="#b2991f" stroke-width="1" stroke-linejoin="round"/>
<path d="M373.58,322.92 L382.24,317.20 L381.39,318.59 L372.78,324.30Z" fill="#c0a622" stroke="#c0a622" stroke-width="1" stroke-linejoin="round"/>
<path d="M382.24,317.20 L389.21,311.21 L388.33,312.60 L381.39,318.59Z" fill="#ceb224" stroke="#ceb224" stroke-width="1" stroke-linejoin="round"/>
<path d="M389.21,311.21 L394.45,305.03 L393.55,306.43 L388.33,312.60Z" fill="#dbbd27" stroke="#dbbd27" stroke-width="1" stroke-linejoin="round"/>
<path d="M107.11,303.22 L112.06,309.51 L113.06,310.81 L108.14,304.54Z" fill="#554a0f" stroke="#554a0f" stroke-width="1" stroke-linejoin="round"/>
<path d="M112.06,309.51 L118.71,315.65 L119.68,316.93 L113.06,310.81Z" fill="#564b0f" stroke="#564b0f" stroke-width="1" stroke-linejoin="round"/>
<path d="M118.71,315.65 L127.05,321.55 L127.96,322.82 L119.68,316.93Z" fill="#564a0f" stroke="#564a0f" stroke-width="1" stroke-linejoin="round"/>
<path d="M127.05,321.55 L136.99,327.12 L137.83,328.38 L127.96,322.82Z" fill="#54480f" stroke="#54480f" stroke-width="1" stroke-linejoin="round"/>
<path d="M136.99,327.12 L148.46,332.27 L149.22,333.51 L137.83,328.38Z" fill="#50450e" stroke="#50450e" stroke-width="1" stroke-linejoin="round"/>
<path d="M148.46,332.27 L161.32,336.90 L162.00,338.14 L149.22,333.51Z" fill="#4b410d" stroke="#4b410d" stroke-width="1" stroke-linejoin="round"/>
<path d="M161.32,336.90 L175.44,340.94 L176.01,342.17 L162.00,338.14Z" fill="#453c0c" stroke="#453c0c" stroke-width="1" stroke-linejoin="round"/>
<path d="M175.44,340.94 L190.64,344.31 L191.09,345.53 L176.01,342.17Z" fill="#3d350b" stroke="#3d350b" stroke-width="1" stroke-linejoin="round"/>
<path d="M190.64,344.31 L206.70,346.94 L207.03,348.16 L191.09,345.53Z" fill="#342d09" stroke="#342d09" stroke-width="1" stroke-linejoin="round"/>
<path d="M206.70,346.94 L223.41,348.80 L223.61,350.00 L207.03,348.16Z" fill="#39310a" stroke="#39310a" stroke-width="1" stroke-linejoin="round"/>
<path d="M223.41,348.80 L240.52,349.83 L240.59,351.03 L223.61,350.00Z" fill="#443b0c" stroke="#443b0c" stroke-width="1" stroke-linejoin="round"/>
<path d="M240.52,349.83 L257.79,350.02 L257.72,351.22 L240.59,351.03Z" fill="#50450e" stroke="#50450e" stroke-width="1" stroke-linejoin="round"/>
<path d="M257.79,350.02 L274.96,349.37 L274.75,350.57 L257.72,351.22Z" fill="#5d5010" stroke="#5d5010" stroke-width="1" stroke-linejoin="round"/>
<path d="M274.96,349.37 L291.77,347.90 L291.43,349.09 L274.75,350.57Z" fill="#6b5c13" stroke="#6b5c13" stroke-width="1" stroke-linejoin="round"/>
<path d="M291.77,347.90 L307.98,345.62 L307.51,346.82 L291.43,349.09Z" fill="#796815" stroke="#796815" stroke-width="1" stroke-linejoin="round"/>
<path d="M307.98,345.62 L323.36,342.60 L322.78,343.80 L307.51,346.82Z" fill="#877418" stroke="#877418" stroke-width="1" stroke-linejoin="round"/>
<path d="M323.36,342.60 L337.70,338.88 L337.01,340.08 L322.78,343.80Z" fill="#95811a" stroke="#95811a" stroke-width="1" stroke-linejoin="round"/>
<path d="M337.70,338.88 L350.82,334.53 L350.03,335.74 L337.01,340.08Z" fill="#a48d1d" stroke="#a48d1d" stroke-width="1" stroke-linejoin="round"/>
<path d="M350.82,334.53 L362.55,329.65 L361.68,330.87 L350.03,335.74Z" fill="#b29a1f" stroke="#b29a1f" stroke-width="1" stroke-linejoin="round"/>
<path d="M362.55,329.65 L372.78,324.30 L371.84,325.54 L361.68,330.87Z" fill="#c0a622" stroke="#c0a622" stroke-width="1" stroke-linejoin="round"/>
<path d="M372.78,324.30 L381.39,318.59 L380.39,319.84 L371.84,325.54Z" fill="#ceb224" stroke="#ceb224" stroke-width="1" stroke-linejoin="round"/>
<path d="M381.39,318.59 L388.33,312.60 L387.29,313.87 L380.39,319.84Z" fill="#dbbd27" stroke="#dbbd27" stroke-width="1" stroke-linejoin="round"/>
<path d="M388.33,312.60 L393.55,306.43 L392.48,307.72 L387.29,313.87Z" fill="#e7c729" stroke="#e7c729" stroke-width="1" stroke-linejoin="round"/>
<path d="M113.06,310.81 L119.68,316.93 L120.78,318.06 L114.21,311.96Z" fill="#3c340b" stroke="#3c340b" stroke-width="1" stroke-linejoin="round"/>
<path d="M119.68,316.93 L127.96,322.82 L129.00,323.93 L120.78,318.06Z" fill="#3c340b" stroke="#3c340b" stroke-width="1" stroke-linejoin="round"/>
<path d="M127.96,322.82 L137.83,328.38 L138.80,329.46 L129.00,323.93Z" fill="#3a320a" stroke="#3a320a" stroke-width="1" stroke-linejoin="round"/>
<path d="M137.83,328.38 L149.22,333.51 L150.09,334.58 L138.80,329.46Z" fill="#372f0a" stroke="#372f0a" stroke-width="1" stroke-linejoin="round"/>
<path d="M149.22,333.51 L162.00,338.14 L162.76,339.18 L150.09,334.58Z" fill="#322b09" stroke="#322b09" stroke-width="1" stroke-linejoin="round"/>
<path d="M162.00,338.14 L176.01,342.17 L176.66,343.20 L162.76,339.18Z" fill="#37300a" stroke="#37300a" stroke-width="1" stroke-linejoin="round"/>
<path d="M176.01,342.17 L191.09,345.53 L191.60,346.54 L176.66,343.20Z" fill="#3e360b" stroke="#3e360b" stroke-width="1" stroke-linejoin="round"/>
<path d="M191.09,345.53 L207.03,348.16 L207.40,349.16 L191.60,346.54Z" fill="#473d0c" stroke="#473d0c" stroke-width="1" stroke-linejoin="round"/>
<path d="M207.03,348.16 L223.61,350.00 L223.83,351.00 L207.40,349.16Z" fill="#50450e" stroke="#50450e" stroke-width="1" stroke-linejoin="round"/>
<path d="M223.61,350.00 L240.59,351.03 L240.66,352.02 L223.83,351.00Z" fill="#5a4e10" stroke="#5a4e10" stroke-width="1" stroke-linejoin="round"/>
<path d="M240.59,351.03 L257.72,351.22 L257.64,352.21 L240.66,352.02Z" fill="#655812" stroke="#655812" stroke-width="1" stroke-linejoin="round"/>
<path d="M257.72,351.22 L274.75,350.57 L274.51,351.56 L257.64,352.21Z" fill="#716214" stroke="#716214" stroke-width="1" stroke-linejoin="round"/>
<path d="M274.75,350.57 L291.43,349.09 L291.04,350.08 L274.51,351.56Z" fill="#7e6d16" stroke="#7e6d16" stroke-width="1" stroke-linejoin="round"/>
<path d="M291.43,349.09 L307.51,346.82 L306.99,347.82 L291.04,350.08Z" fill="#8b7818" stroke="#8b7818" stroke-width="1" stroke-linejoin="round"/>
<path d="M307.51,346.82 L322.78,343.80 L322.12,344.80 L306.99,347.82Z" fill="#98831b" stroke="#98831b" stroke-width="1" stroke-linejoin="round"/>
<path d="M322.78,343.80 L337.01,340.08 L336.23,341.10 L322.12,344.80Z" fill="#a58f1d" stroke="#a58f1d" stroke-width="1" stroke-linejoin="round"/>
<path d="M337.01,340.08 L350.03,335.74 L349.14,336.78 L336.23,341.10Z" fill="#b39a20" stroke="#b39a20" stroke-width="1" stroke-linejoin="round"/>
<path d="M350.03,335.74 L361.68,330.87 L360.70,331.92 L349.14,336.78Z" fill="#c0a622" stroke="#c0a622" stroke-width="1" stroke-linejoin="round"/>
<path d="M361.68,330.87 L371.84,325.54 L370.77,326.61 L360.70,331.92Z" fill="#cdb124" stroke="#cdb124" stroke-width="1" stroke-linejoin="round"/>
<path d="M371.84,325.54 L380.39,319.84 L379.26,320.93 L370.77,326.61Z" fill="#d9bc26" stroke="#d9bc26" stroke-width="1" stroke-linejoin="round"/>
<path d="M380.39,319.84 L387.29,313.87 L386.11,314.99 L379.26,320.93Z" fill="#e6c629" stroke="#e6c629" stroke-width="1" stroke-linejoin="round"/>
<path d="M120.78,318.06 L129.00,323.93 L130.16,324.86 L122.01,319.03Z" fill="#42390c" stroke="#42390c" stroke-width="1" stroke-linejoin="round"/>
<path d="M129.00,323.93 L138.80,329.46 L139.88,330.36 L130.16,324.86Z" fill="#433a0c" stroke="#433a0c" stroke-width="1" stroke-linejoin="round"/>
<path d="M138.80,329.46 L150.09,334.58 L151.07,335.45 L139.88,330.36Z" fill="#463d0c" stroke="#463d0c" stroke-width="1" stroke-linejoin="round"/>
<path d="M150.09,334.58 L162.76,339.18 L163.62,340.03 L151.07,335.45Z" fill="#4b400d" stroke="#4b400d" stroke-width="1" stroke-linejoin="round"/>
<path d="M162.76,339.18 L176.66,343.20 L177.38,344.02 L163.62,340.03Z" fill="#50450e" stroke="#50450e" stroke-width="1" stroke-linejoin="round"/>
<path d="M176.66,343.20 L191.60,346.54 L192.18,347.34 L177.38,344.02Z" fill="#564b0f" stroke="#564b0f" stroke-width="1" stroke-linejoin="round"/>
<path d="M191.60,346.54 L207.40,349.16 L207.82,349.95 L192.18,347.34Z" fill="#5e5111" stroke="#5e5111" stroke-width="1" stroke-linejoin="round"/>
<path d="M207.40,349.16 L223.83,351.00 L224.09,351.77 L207.82,349.95Z" fill="#665812" stroke="#665812" stroke-width="1" stroke-linejoin="round"/>
<path d="M223.83,351.00 L240.66,352.02 L240.74,352.79 L224.09,351.77Z" fill="#706014" stroke="#706014" stroke-width="1" stroke-linejoin="round"/>
<path d="M240.66,352.02 L257.64,352.21 L257.55,352.97 L240.74,352.79Z" fill="#7a6916" stroke="#7a6916" stroke-width="1" stroke-linejoin="round"/>
<path d="M257.64,352.21 L274.51,351.56 L274.26,352.32 L257.55,352.97Z" fill="#857317" stroke="#857317" stroke-width="1" stroke-linejoin="round"/>
<path d="M274.51,351.56 L291.04,350.08 L290.62,350.85 L274.26,352.32Z" fill="#907c19" stroke="#907c19" stroke-width="1" stroke-linejoin="round"/>
<path d="M291.04,350.08 L306.99,347.82 L306.40,348.60 L290.62,350.85Z" fill="#9c861c" stroke="#9c861c" stroke-width="1" stroke-linejoin="round"/>
<path d="M306.99,347.82 L322.12,344.80 L321.39,345.60 L306.40,348.60Z" fill="#a8911e" stroke="#a8911e" stroke-width="1" stroke-linejoin="round"/>
<path d="M322.12,344.80 L336.23,341.10 L335.36,341.91 L321.39,345.60Z" fill="#b49b20" stroke="#b49b20" stroke-width="1" stroke-linejoin="round"/>
<path d="M336.23,341.10 L349.14,336.78 L348.15,337.62 L335.36,341.91Z" fill="#c0a622" stroke="#c0a622" stroke-width="1" stroke-linejoin="round"/>
<path d="M349.14,336.78 L360.70,331.92 L359.60,332.78 L348.15,337.62Z" fill="#ccb024" stroke="#ccb024" stroke-width="1" stroke-linejoin="round"/>
<path d="M360.70,331.92 L370.77,326.61 L369.59,327.50 L359.60,332.78Z" fill="#d8bb26" stroke="#d8bb26" stroke-width="1" stroke-linejoin="round"/>
<path d="M370.77,326.61 L379.26,320.93 L378.01,321.87 L369.59,327.50Z" fill="#e3c428" stroke="#e3c428" stroke-width="1" stroke-linejoin="round"/>
<path d="M130.16,324.86 L139.88,330.36 L141.05,331.07 L131.43,325.61Z" fill="#5d5010" stroke="#5d5010" stroke-width="1" stroke-linejoin="round"/>
<path d="M139.88,330.36 L151.07,335.45 L152.13,336.12 L141.05,331.07Z" fill="#605311" stroke="#605311" stroke-width="1" stroke-linejoin="round"/>
<path d="M151.07,335.45 L163.62,340.03 L164.55,340.66 L152.13,336.12Z" fill="#635612" stroke="#635612" stroke-width="1" stroke-linejoin="round"/>
<path d="M163.62,340.03 L177.38,344.02 L178.17,344.62 L164.55,340.66Z" fill="#685a12" stroke="#685a12" stroke-width="1" stroke-linejoin="round"/>
<path d="M177.38,344.02 L192.18,347.34 L192.81,347.93 L178.17,344.62Z" fill="#6e5f13" stroke="#6e5f13" stroke-width="1" stroke-linejoin="round"/>
<path d="M192.18,347.34 L207.82,349.95 L208.28,350.51 L192.81,347.93Z" fill="#756515" stroke="#756515" stroke-width="1" stroke-linejoin="round"/>
<path d="M207.82,349.95 L224.09,351.77 L224.37,352.32 L208.28,350.51Z" fill="#7c6b16" stroke="#7c6b16" stroke-width="1" stroke-linejoin="round"/>
<path d="M224.09,351.77 L240.74,352.79 L240.84,353.32 L224.37,352.32Z" fill="#857217" stroke="#857217" stroke-width="1" stroke-linejoin="round"/>
<path d="M240.74,352.79 L257.55,352.97 L257.46,353.50 L240.84,353.32Z" fill="#8e7a19" stroke="#8e7a19" stroke-width="1" stroke-linejoin="round"/>
<path d="M257.55,352.97 L274.26,352.32 L273.98,352.86 L257.46,353.50Z" fill="#97831b" stroke="#97831b" stroke-width="1" stroke-linejoin="round"/>
<path d="M274.26,352.32 L290.62,350.85 L290.16,351.40 L273.98,352.86Z" fill="#a18b1c" stroke="#a18b1c" stroke-width="1" stroke-linejoin="round"/>
<path d="M290.62,350.85 L306.40,348.60 L305.77,349.16 L290.16,351.40Z" fill="#ac941e" stroke="#ac941e" stroke-width="1" stroke-linejoin="round"/>
<path d="M306.40,348.60 L321.39,345.60 L320.59,346.18 L305.77,349.16Z" fill="#b69d20" stroke="#b69d20" stroke-width="1" stroke-linejoin="round"/>
<path d="M321.39,345.60 L335.36,341.91 L334.42,342.52 L320.59,346.18Z" fill="#c1a722" stroke="#c1a722" stroke-width="1" stroke-linejoin="round"/>
<path d="M335.36,341.91 L348.15,337.62 L347.08,338.25 L334.42,342.52Z" fill="#ccb024" stroke="#ccb024" stroke-width="1" stroke-linejoin="round"/>
<path d="M348.15,337.62 L359.60,332.78 L358.41,333.46 L347.08,338.25Z" fill="#d7b926" stroke="#d7b926" stroke-width="1" stroke-linejoin="round"/>
<path d="M359.60,332.78 L369.59,327.50 L368.30,328.22 L358.41,333.46Z" fill="#e1c328" stroke="#e1c328" stroke-width="1" stroke-linejoin="round"/>
<path d="M152.13,336.12 L164.55,340.66 L165.55,341.09 L153.27,336.59Z" fill="#7c6b16" stroke="#7c6b16" stroke-width="1" stroke-linejoin="round"/>
<path d="M164.55,340.66 L178.17,344.62 L179.01,345.01 L165.55,341.09Z" fill="#806e17" stroke="#806e17" stroke-width="1" stroke-linejoin="round"/>
<path d="M178.17,344.62 L192.81,347.93 L193.48,348.28 L179.01,345.01Z" fill="#857317" stroke="#857317" stroke-width="1" stroke-linejoin="round"/>
<path d="M192.81,347.93 L208.28,350.51 L208.77,350.84 L193.48,348.28Z" fill="#8b7818" stroke="#8b7818" stroke-width="1" stroke-linejoin="round"/>
<path d="M208.28,350.51 L224.37,352.32 L224.67,352.63 L208.77,350.84Z" fill="#917d1a" stroke="#917d1a" stroke-width="1" stroke-linejoin="round"/>
<path d="M224.37,352.32 L240.84,353.32 L240.94,353.62 L224.67,352.63Z" fill="#98841b" stroke="#98841b" stroke-width="1" stroke-linejoin="round"/>
<path d="M240.84,353.32 L257.46,353.50 L257.36,353.80 L240.94,353.62Z" fill="#a08a1c" stroke="#a08a1c" stroke-width="1" stroke-linejoin="round"/>
<path d="M257.46,353.50 L273.98,352.86 L273.69,353.16 L257.36,353.80Z" fill="#a9921e" stroke="#a9921e" stroke-width="1" stroke-linejoin="round"/>
<path d="M273.98,352.86 L290.16,351.40 L289.67,351.71 L273.69,353.16Z" fill="#b1991f" stroke="#b1991f" stroke-width="1" stroke-linejoin="round"/>
<path d="M290.16,351.40 L305.77,349.16 L305.10,349.49 L289.67,351.71Z" fill="#baa121" stroke="#baa121" stroke-width="1" stroke-linejoin="round"/>
<path d="M305.77,349.16 L320.59,346.18 L319.75,346.54 L305.10,349.49Z" fill="#c4a923" stroke="#c4a923" stroke-width="1" stroke-linejoin="round"/>
<path d="M320.59,346.18 L334.42,342.52 L333.42,342.91 L319.75,346.54Z" fill="#cdb124" stroke="#cdb124" stroke-width="1" stroke-linejoin="round"/>
<path d="M334.42,342.52 L347.08,338.25 L345.93,338.69 L333.42,342.91Z" fill="#d6b926" stroke="#d6b926" stroke-width="1" stroke-linejoin="round"/>
<path d="M208.77,350.84 L224.67,352.63 L224.99,352.71 L209.29,350.93Z" fill="#a58f1d" stroke="#a58f1d" stroke-width="1" stroke-linejoin="round"/>
<path d="M224.67,352.63 L240.94,353.62 L241.05,353.69 L224.99,352.71Z" fill="#ab941e" stroke="#ab941e" stroke-width="1" stroke-linejoin="round"/>
<path d="M240.94,353.62 L257.36,353.80 L257.26,353.86 L241.05,353.69Z" fill="#b2991f" stroke="#b2991f" stroke-width="1" stroke-linejoin="round"/>
<path d="M257.36,353.80 L273.69,353.16 L273.38,353.23 L257.26,353.86Z" fill="#b99f21" stroke="#b99f21" stroke-width="1" stroke-linejoin="round"/>
<path d="M273.69,353.16 L289.67,351.71 L289.16,351.80 L273.38,353.23Z" fill="#c0a622" stroke="#c0a622" stroke-width="1" stroke-linejoin="round"/>
<path d="M267.81,255.63 L266.21,252.60 L269.25,40.00 L270.97,42.05Z" fill="#81a743" stroke="#81a743" stroke-width="1" stroke-linejoin="round"/>
<path d="M266.21,252.60 L261.08,250.16 L263.77,38.36 L269.25,40.00Z" fill="#86ae45" stroke="#86ae45" stroke-width="1" stroke-linejoin="round"/>
<path d="M261.08,250.16 L253.60,248.86 L255.79,37.48 L263.77,38.36Z" fill="#74963c" stroke="#74963c" stroke-width="1" stroke-linejoin="round"/>
<path d="M253.60,248.86 L245.44,248.98 L247.11,37.57 L255.79,37.48Z" fill="#4f6629" stroke="#4f6629" stroke-width="1" stroke-linejoin="round"/>
<path d="M245.44,248.98 L238.41,250.50 L239.64,38.58 L247.11,37.57Z" fill="#212a11" stroke="#212a11" stroke-width="1" stroke-linejoin="round"/>
<path d="M238.41,250.50 L234.10,253.07 L235.05,40.32 L239.64,38.58Z" fill="#51692a" stroke="#51692a" stroke-width="1" stroke-linejoin="round"/>
<path d="M234.10,253.07 L233.52,256.14 L234.43,42.39 L235.05,40.32Z" fill="#76983d" stroke="#76983d" stroke-width="1" stroke-linejoin="round"/>
<path d="M165.08,248.53 L164.80,255.21 L183.90,43.80 L183.92,40.38Z" fill="#d5b826" stroke="#d5b826" stroke-width="1" stroke-linejoin="round"/>
<path d="M164.80,255.21 L168.35,261.89 L186.92,47.19 L183.90,43.80Z" fill="#e2c328" stroke="#e2c328" stroke-width="1" stroke-linejoin="round"/>
<path d="M168.35,261.89 L175.69,268.24 L192.95,50.41 L186.92,47.19Z" fill="#e8c829" stroke="#e8c829" stroke-width="1" stroke-linejoin="round"/>
<path d="M175.69,268.24 L186.62,273.96 L201.78,53.29 L192.95,50.41Z" fill="#e7c729" stroke="#e7c729" stroke-width="1" stroke-linejoin="round"/>
<path d="M186.62,273.96 L200.70,278.73 L213.07,55.69 L201.78,53.29Z" fill="#dec027" stroke="#dec027" stroke-width="1" stroke-linejoin="round"/>
<path d="M200.70,278.73 L217.32,282.30 L226.30,57.48 L213.07,55.69Z" fill="#cfb325" stroke="#cfb325" stroke-width="1" stroke-linejoin="round"/>
<path d="M217.32,282.30 L235.65,284.46 L240.85,58.56 L226.30,57.48Z" fill="#baa121" stroke="#baa121" stroke-width="1" stroke-linejoin="round"/>
<path d="M235.65,284.46 L254.78,285.07 L256.00,58.86 L240.85,58.56Z" fill="#a08a1c" stroke="#a08a1c" stroke-width="1" stroke-linejoin="round"/>
<path d="M254.78,285.07 L273.69,284.10 L270.98,58.38 L256.00,58.86Z" fill="#817017" stroke="#817017" stroke-width="1" stroke-linejoin="round"/>
<path d="M273.69,284.10 L291.42,281.61 L285.04,57.14 L270.98,58.38Z" fill="#615311" stroke="#615311" stroke-width="1" stroke-linejoin="round"/>
<path d="M291.42,281.61 L307.07,277.75 L297.50,55.20 L285.04,57.14Z" fill="#3e360b" stroke="#3e360b" stroke-width="1" stroke-linejoin="round"/>
<path d="M307.07,277.75 L319.89,272.74 L307.77,52.68 L297.50,55.20Z" fill="#473d0d" stroke="#473d0d" stroke-width="1" stroke-linejoin="round"/>
<path d="M319.89,272.74 L329.34,266.85 L315.40,49.71 L307.77,52.68Z" fill="#675912" stroke="#675912" stroke-width="1" stroke-linejoin="round"/>
<path d="M329.34,266.85 L335.06,260.40 L320.11,46.44 L315.40,49.71Z" fill="#847217" stroke="#847217" stroke-width="1" stroke-linejoin="round"/>
<path d="M335.06,260.40 L336.94,253.70 L321.77,43.02 L320.11,46.44Z" fill="#9d881c" stroke="#9d881c" stroke-width="1" stroke-linejoin="round"/>
<path d="M321.77,43.02 L320.38,39.62 L316.11,36.37 L309.21,33.41 L300.03,30.86 L288.99,28.79 L276.55,27.28 L263.21,26.39 L249.47,26.14 L235.85,26.54 L222.87,27.57 L211.03,29.21 L200.81,31.39 L192.64,34.05 L186.91,37.08 L183.92,40.38 L183.90,43.80 L186.92,47.19 L192.95,50.41 L201.78,53.29 L213.07,55.69 L226.30,57.48 L240.85,58.56 L256.00,58.86 L270.98,58.38 L285.04,57.14 L297.50,55.20 L307.77,52.68 L315.40,49.71 L320.11,46.44Z M270.97,42.05 L269.25,40.00 L263.77,38.36 L255.79,37.48 L247.11,37.57 L239.64,38.58 L235.05,40.32 L234.43,42.39 L238.00,44.33 L244.97,45.67 L253.75,46.10 L262.25,45.51 L268.46,44.04Z" fill="#edcc2a" fill-rule="evenodd"/>
<path d="M321.77,43.02 L320.38,39.62 L316.11,36.37 L309.21,33.41 L300.03,30.86 L288.99,28.79 L276.55,27.28 L263.21,26.39 L249.47,26.14 L235.85,26.54 L222.87,27.57 L211.03,29.21 L200.81,31.39 L192.64,34.05 L186.91,37.08 L183.92,40.38 L183.90,43.80 L186.92,47.19 L192.95,50.41 L201.78,53.29 L213.07,55.69 L226.30,57.48 L240.85,58.56 L256.00,58.86 L270.98,58.38 L285.04,57.14 L297.50,55.20 L307.77,52.68 L315.40,49.71 L320.11,46.44Z" fill="none" stroke="#edcc2a" stroke-width="0.6"/>
<line x1="252.5" y1="45.3" x2="253.5" y2="-56.5" stroke="#000" stroke-width="1"/>
<line x1="252.6" y1="37.1" x2="229.6" y2="36.7" stroke="#000" stroke-width="1"/>
<line x1="253.1" y1="-9.1" x2="229.8" y2="-9.4" stroke="#000" stroke-width="1"/>
<path d="M258.4,14.4 L281.6,14.4 L281.6,26.5" fill="none" stroke="#000" stroke-width="1.1"/>
<path d="M258.4,14.4 L258.4,25.2 L272.4,25.2" fill="none" stroke="#000" stroke-width="1.1"/>
<path d="M272.4,14.4 L272.4,25.2" fill="none" stroke="#000" stroke-width="1.1"/>
<path d="M276.0,26.5 L287.1,26.5 L287.1,21.3 L277.0,21.3" fill="none" stroke="#000" stroke-width="1.1"/>
<path d="M274.7,31.3 L258.4,31.3 L258.4,42.2 L268.7,42.2" fill="none" stroke="#000" stroke-width="1.1"/>
<path d="M291.0,17.5 L302.5,17.5 L302.5,21.5 L293.0,21.5" fill="none" stroke="#000" stroke-width="1.1"/>
<path d="M291.0,27.0 L301.5,27.5 L301.5,29.6" fill="none" stroke="#000" stroke-width="1.1"/>
<path d="M280.2,32.0 L280.2,42.0" fill="none" stroke="#000" stroke-width="1.1"/>
<path d="M47.6,275.0 L58.6,276.2" fill="none" stroke="#000" stroke-width="1.1"/>
<path d="M64.3,273.3 L61.5,277.0 L74.5,277.6" fill="none" stroke="#000" stroke-width="1.1"/>
<path d="M72.6,273.5 L70.5,282.0" fill="none" stroke="#000" stroke-width="1.1"/>
<path d="M78.0,273.9 L89.6,274.5 L88.4,282.4 L75.8,282.0 L78.0,273.9" fill="none" stroke="#000" stroke-width="1.1"/>
<path d="M0.0,271.5 L8.0,271.5 L4.5,281.0 L0.0,281.0" fill="none" stroke="#000" stroke-width="1.1"/>
<path d="M415.4,285.2 L416.3,288.7 L427.2,288.7" fill="none" stroke="#000" stroke-width="1.1"/>
<path d="M426.8,285.5 L426.8,293.4" fill="none" stroke="#000" stroke-width="1.1"/>
<path d="M439.0,285.2 L432.0,285.2 L432.0,294.3 L439.0,294.3" fill="none" stroke="#000" stroke-width="1.1"/>
<path d="M422.0,296.5 L424.0,304.5" fill="none" stroke="#000" stroke-width="1.1"/>
<path d="M266.7,362.0 L266.7,370.5" fill="none" stroke="#000" stroke-width="1.1"/>
<path d="M259.4,371.0 L259.4,374.5" fill="none" stroke="#000" stroke-width="1.1"/>
<path d="M253.4,383.0 L253.4,375.7 L266.3,375.7 L266.3,385.0" fill="none" stroke="#000" stroke-width="1.1"/>
<path d="M257.8,384.6 L257.8,379.7 L266.3,379.7" fill="none" stroke="#000" stroke-width="1.1"/>
<path d="M243.8,385.0 L273.9,385.0 L273.9,376.1" fill="none" stroke="#000" stroke-width="1.1"/>
<path d="M241.7,387.8 L253.8,387.8 L253.8,389.4 L273.9,389.4 L273.9,398.2 L265.0,398.2" fill="none" stroke="#000" stroke-width="1.1"/>
<path d="M241.7,387.8 L241.7,394.2 L266.3,394.2 L266.3,389.4" fill="none" stroke="#000" stroke-width="1.1"/>
<path d="M253.4,389.4 L253.4,397.0 L265.0,397.0" fill="none" stroke="#000" stroke-width="1.1"/>
<path d="M253.7,420.0 L253.7,427.6" fill="none" stroke="#000" stroke-width="1.1"/>
<path d="M236.5,430.6 L262.0,431.2 L262.0,438.4" fill="none" stroke="#000" stroke-width="1.1"/>
<path d="M236.5,430.6 L235.5,437.4 L252.1,438.0 L252.1,431.0" fill="none" stroke="#000" stroke-width="1.1"/>
<path d="M265.4,433.9 L265.4,442.3" fill="none" stroke="#000" stroke-width="1.1"/>
<path d="M234.2,441.7 L261.5,441.7 L261.5,449.2 L234.2,449.2 L234.2,441.7" fill="none" stroke="#000" stroke-width="1.1"/>
<path d="M273.0,447.4 L265.4,447.4 L265.4,455.9" fill="none" stroke="#000" stroke-width="1.1"/>
<path d="M253.2,455.9 L273.0,455.9" fill="none" stroke="#000" stroke-width="1.1"/>
<path d="M252.3,459.5 L272.7,459.5 L272.7,468.4 L252.3,468.4 L252.3,459.5" fill="none" stroke="#000" stroke-width="1.1"/>
<path d="M227.6,499.0 L227.6,491.8 L256.5,491.8 L256.5,499.0" fill="none" stroke="#000" stroke-width="1.1"/>
<path d="M246.0,491.8 L246.0,499.0" fill="none" stroke="#000" stroke-width="1.1"/>
<path d="M43.7 449.2H72" stroke="#f00" stroke-width="1.2"/>
<path d="M43.7 449.2V424.4" stroke="#00f" stroke-width="1.2"/>
<path d="M43.7 449.2L46 438.3" stroke="#0c0" stroke-width="1.2"/>
<path d="M41 416.2H47L41 422.8H47" fill="none" stroke="#111" stroke-width="1.1"/>
<path d="M43.7 432.9L46.8 435.6L49.9 432.9M46.8 435.6L44.8 438.3" fill="none" stroke="#111" stroke-width="1.1"/>
<path d="M73.9 447.2L80.1 452.7M80.1 447.2L73.9 452.7" fill="none" stroke="#111" stroke-width="1.1"/>
  </svg></div>

<svg class="a" style="left:0;top:0" width="871" height="710" viewBox="0 0 871 710"><g fill="none" stroke-linejoin="round">
<g transform="translate(197.7 476.6)">
<path d="M246.8 86L254.4 90L246.8 94L239.6 90Z M239.6 90V98.3L246.8 102.3L254.4 98.3V90 M246.8 94V99" stroke="#222" stroke-width="1.3" stroke-dasharray="1.3 1.5"/>
<path d="M243.6 98.8L246 101.4L243.6 104M247.3 98.8L249.7 101.4L247.3 104" stroke="#000" stroke-width="1.7"/>
<path d="M278 85.6L285.4 89.6L278 93.4L270.6 89.6Z M270.6 89.6V98.3L275 100.7M285.4 89.6V98.3L281 100.7" stroke="#222" stroke-width="1.3"/>
<path d="M275.3 95.5H280.8L278 99.5Z" fill="#444"/>
<path d="M278 99V102.5M274.8 103.3H281.2" stroke="#222" stroke-width="1.3"/>
</g>
<path d="M494.5 559.5V582.5M624.5 559.5V582.5M816.5 559.5V582.5" stroke="#cfcfcf" stroke-width="1"/>
<circle cx="510.9" cy="568" r="5.3" stroke="#111" stroke-width="1.4"/>
<path d="M514.6 572.4L518.6 578.6" stroke="#000" stroke-width="3" stroke-linecap="round"/>
<path d="M503 564.5V561.5H506M515.5 561.5H518.7V564.5M503 576V579.2H506" stroke="#111" stroke-width="1.5"/>
<circle cx="541.8" cy="568.6" r="5.4" stroke="#111" stroke-width="1.4"/>
<path d="M545.4 573.2L549.4 579.6" stroke="#000" stroke-width="3" stroke-linecap="round"/>
<path d="M538.6 568.6H545M541.8 565.4V571.8" stroke="#222" stroke-width="1.3"/>
<circle cx="573.2" cy="568.6" r="5.4" stroke="#111" stroke-width="1.4"/>
<path d="M576.8 573.2L580.8 579.6" stroke="#000" stroke-width="3" stroke-linecap="round"/>
<path d="M570 568.6H576.4" stroke="#444" stroke-width="1.6"/>
<path d="M599.6 574.6A7.5 7.5 0 1 0 601.6 565.3" stroke="#111" stroke-width="1.2"/>
<path d="M598.7 563.9L603.5 566.6L598.9 568.4Z" fill="#111"/>
<path d="M641.1 563.8V575.5999999999999M634.9 568.1999999999999L647.3000000000001 571.5999999999999M636.3000000000001 572.8L645.9 566.5999999999999" stroke="#111" stroke-width="1.3"/>
<ellipse cx="649.4" cy="569.5" rx="4" ry="2.3" fill="#111"/><ellipse cx="649.6999999999999" cy="569.5" rx="1.9" ry="1" fill="#f0f0f0"/>
<text x="645.9" y="581.2" font-family="Liberation Sans" font-size="10.5" fill="#111" textLength="8.3" lengthAdjust="spacingAndGlyphs">+X</text>
<path d="M672.1 564.6V576.4M665.9 569.0L678.3000000000001 572.4M667.3000000000001 573.6L676.9 567.4" stroke="#111" stroke-width="1.3"/>
<ellipse cx="666.6" cy="566.8" rx="4" ry="2.3" fill="#111"/><ellipse cx="666.9" cy="566.8" rx="1.9" ry="1" fill="#f0f0f0"/>
<text x="677.2" y="581.2" font-family="Liberation Sans" font-size="10.5" fill="#111" textLength="8.3" lengthAdjust="spacingAndGlyphs">-X</text>
<path d="M703.1 564V575.8M696.9 568.4L709.3000000000001 571.8M698.3000000000001 573L707.9 566.8" stroke="#111" stroke-width="1.3"/>
<ellipse cx="709.3" cy="564.7" rx="4" ry="2.3" fill="#111"/><ellipse cx="709.5999999999999" cy="564.7" rx="1.9" ry="1" fill="#f0f0f0"/>
<text x="707.9" y="581.2" font-family="Liberation Sans" font-size="10.5" fill="#111" textLength="8.3" lengthAdjust="spacingAndGlyphs">+Y</text>
<path d="M734.7 563.5V575.3M728.5 567.9L740.9000000000001 571.3M729.9000000000001 572.5L739.5 566.3" stroke="#111" stroke-width="1.3"/>
<ellipse cx="728.5" cy="574.3" rx="4" ry="2.3" fill="#111"/><ellipse cx="728.8" cy="574.3" rx="1.9" ry="1" fill="#f0f0f0"/>
<text x="738.6" y="581.2" font-family="Liberation Sans" font-size="10.5" fill="#111" textLength="8.3" lengthAdjust="spacingAndGlyphs">-Y</text>
<path d="M764.9 564.2V576.0M758.6999999999999 568.6L771.1 572.0M760.1 573.2L769.6999999999999 567.0" stroke="#111" stroke-width="1.3"/>
<ellipse cx="765.7" cy="560.8" rx="4" ry="2.3" fill="#111"/><ellipse cx="766.0" cy="560.8" rx="1.9" ry="1" fill="#f0f0f0"/>
<text x="769.2" y="581.2" font-family="Liberation Sans" font-size="10.5" fill="#111" textLength="8.3" lengthAdjust="spacingAndGlyphs">+Z</text>
<path d="M796.7 564V575.8M790.5 568.4L802.9000000000001 571.8M791.9000000000001 573L801.5 566.8" stroke="#111" stroke-width="1.3"/>
<ellipse cx="796" cy="578.4" rx="4" ry="2.3" fill="#111"/><ellipse cx="796.3" cy="578.4" rx="1.9" ry="1" fill="#f0f0f0"/>
<text x="800.3" y="581.2" font-family="Liberation Sans" font-size="10.5" fill="#111" textLength="8.3" lengthAdjust="spacingAndGlyphs">-Z</text>
<rect x="820.5" y="556.5" width="30" height="28" fill="#cce4f7" stroke="#99d1ff" stroke-width="1"/>
<path d="M826.5 570.8H837V581.2H826.5Z M826.5 570.8L843.6 562.3L845.6 564.1L837 570.8 M837 581.2L845.6 564.1 M843.6 562.3L845.6 564.1" stroke="#1a1a1a" stroke-width="1.3" fill="none"/>
<path d="M857.6 569.3L860.2 571.6L857.6 573.9M861.2 569.3L863.8 571.6L861.2 573.9" stroke="#333" stroke-width="1"/>
</g></svg>
<div class="dtitle" style="left:428px;top:593px;width:80px;height:19px"></div>
<div class="t1" style="left:433.0px;top:598.62px;font-size:12.5px;color:#000;transform:scaleX(1.003);transform-origin:0 0;">Console</div>
<svg class="a" style="left:490.2px;top:597.4px" width="12" height="12"><path d="M2.4 2.4L9.6 9.6M9.6 2.4L2.4 9.6" stroke="#2b2b2b" stroke-width="1.8"/></svg>
<div class="a" style="left:428px;top:614px;width:80px;height:96px;background:#fff;border:1px solid #828282;border-bottom:none"></div>
<div class="a" style="left:491px;top:615px;width:16px;height:95px;background:#f0f0f0"></div>
<svg class="a" style="left:491px;top:615px" width="16" height="16"><path d="M4.5 10L8 6.5L11.5 10" fill="none" stroke="#606060" stroke-width="1.6"/></svg>
<div class="t1" style="left:432.5px;top:618.38px;font-size:10.3px;color:#000;">Compiling</div>
<div class="t1" style="left:432.5px;top:631.38px;font-size:10.3px;color:#000;">design</div>
<div class="t1" style="left:432.5px;top:644.38px;font-size:10.3px;color:#000;">(CSG</div>
<div class="t1" style="left:432.5px;top:657.38px;font-size:10.3px;color:#000;">Products</div>
<div class="t1" style="left:432.5px;top:670.38px;font-size:10.3px;color:#000;">normalizati</div>
<div class="t1" style="left:432.5px;top:683.38px;font-size:10.3px;color:#000;">on)...</div>
<div class="t1" style="left:432.5px;top:696.38px;font-size:10.3px;color:#000;">Normalized</div>
<div class="t1" style="left:432.5px;top:709.38px;font-size:10.3px;color:#000;">tree has 2</div>
<div class="dtitle" style="left:512px;top:593px;width:181px;height:19px"></div>
<div class="t1" style="left:517.0px;top:598.00px;font-size:13px;color:#000;transform:scaleX(1.029);transform-origin:0 0;">Error-Log</div>
<svg class="a" style="left:675.2px;top:597.4px" width="12" height="12"><path d="M2.4 2.4L9.6 9.6M9.6 2.4L2.4 9.6" stroke="#2b2b2b" stroke-width="1.8"/></svg>
<div class="t1" style="left:520.2px;top:628.47px;font-size:11.5px;color:#000;transform:scaleX(0.890);transform-origin:0 0;">Show</div>
<div class="a" style="left:553px;top:623px;width:77px;height:20px;background:#e5e5e5;border:1px solid #adadad"></div>
<div class="t1" style="left:557.0px;top:628.47px;font-size:11.5px;color:#000;transform:scaleX(0.822);transform-origin:0 0;">All</div>
<svg class="a" style="left:612px;top:627px" width="16" height="12"><path d="M4.5 4L8.8 8.5L13 4" fill="none" stroke="#444" stroke-width="1.1"/></svg>
<div class="a" style="left:521px;top:649px;width:163px;height:61px;background:#fff;border:1px solid #828790;border-bottom:none"></div>
<div class="a" style="left:601px;top:650px;width:1px;height:25px;background:#e5e5e5"></div>
<div class="t1" style="left:543.5px;top:657.44px;font-size:12px;color:#000;transform:scaleX(1.073);transform-origin:0 0;">Group</div>
<div class="dtitle" style="left:697px;top:593px;width:170px;height:19px"></div>
<div class="t1" style="left:702.0px;top:598.02px;font-size:12.5px;color:#000;transform:scaleX(1.003);transform-origin:0 0;">Animate</div>
<svg class="a" style="left:849.2px;top:597.4px" width="12" height="12"><path d="M2.4 2.4L9.6 9.6M9.6 2.4L2.4 9.6" stroke="#2b2b2b" stroke-width="1.8"/></svg>
<div class="t1" style="left:697.0px;top:620.10px;font-size:10.4px;color:#000;transform:scaleX(0.976);transform-origin:0 0;">Time:</div>
<div class="a" style="left:723px;top:614px;width:144px;height:20px;background:#fff;border:1px solid #7a7a7a"></div>
<div class="t1" style="left:697.0px;top:640.00px;font-size:10.4px;color:#000;transform:scaleX(0.908);transform-origin:0 0;">FPS:</div>
<div class="a" style="left:719px;top:634px;width:148px;height:20px;background:#fff;border:1px solid #7a7a7a"></div>
<div class="t1" style="left:697.0px;top:659.80px;font-size:10.4px;color:#000;transform:scaleX(1.001);transform-origin:0 0;">Steps:</div>
<div class="a" style="left:728px;top:654px;width:139px;height:20px;background:#fff;border:1px solid #7a7a7a"></div>
<div class="a" style="left:769px;top:675px;width:26px;height:22px;background:#e1e1e1;border:1px solid #adadad"></div>
<svg class="a" style="left:769px;top:675px" width="26" height="22"><circle cx="13" cy="11" r="6" fill="none" stroke="#222" stroke-width="1.2"/><path d="M11 7.8V14.2L15.8 11Z" fill="#111"/></svg>
<div class="a" style="left:697px;top:698px;width:13px;height:13px;background:#fff;border:1px solid #333"></div>
<div class="t1" style="left:709.5px;top:699.60px;font-size:10.4px;color:#000;transform:scaleX(0.997);transform-origin:0 0;">Dump Pictures</div>

<svg class="a" style="left:0;top:0" width="300" height="150">
<text x="19.2" y="98.7" font-family="Liberation Sans" font-size="13.4" textLength="61.5" lengthAdjust="spacingAndGlyphs" fill="#7a3838" stroke="rgba(240,240,240,0.45)" stroke-width="1.4" paint-order="stroke" stroke-linejoin="round">Andrew_G</text>
<text x="18.6" y="118.8" font-family="Liberation Sans" font-size="10" textLength="107.5" lengthAdjust="spacingAndGlyphs" fill="#703c3c" stroke="rgba(255,255,255,0.85)" stroke-width="2.2" paint-order="stroke" stroke-linejoin="round">www.thebackshed.com</text>
<text x="18.8" y="133.9" font-family="Liberation Sans" font-size="11.4" textLength="52.8" lengthAdjust="spacingAndGlyphs" fill="#703c3c" stroke="rgba(255,255,255,0.85)" stroke-width="2.2" paint-order="stroke" stroke-linejoin="round">2023-12-17</text>
</svg>
</body></html>
